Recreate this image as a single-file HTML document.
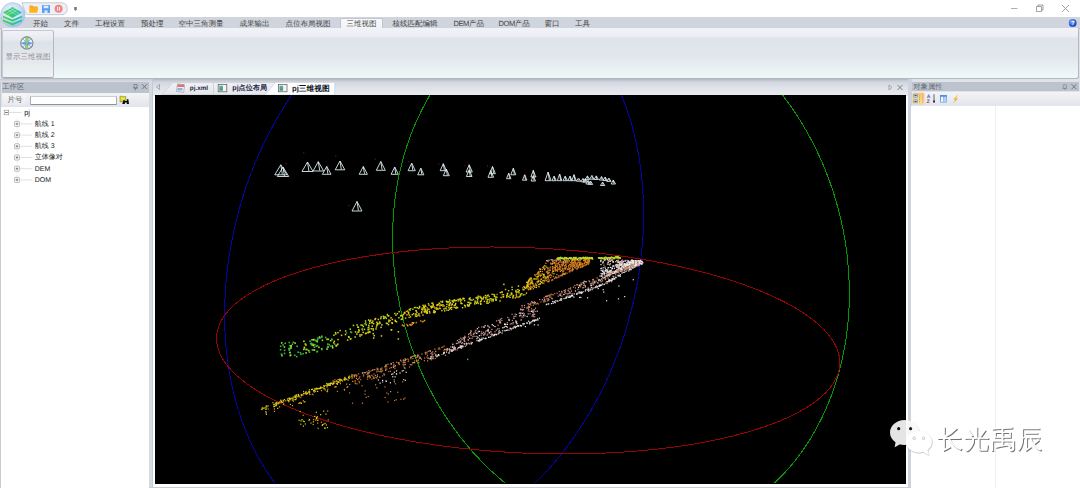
<!DOCTYPE html>
<html><head><meta charset="utf-8">
<style>
*{margin:0;padding:0;box-sizing:border-box}
html,body{text-rendering:geometricPrecision;width:1080px;height:488px;overflow:hidden;background:#dfe2e9;font-family:"Liberation Sans",sans-serif;position:relative}
.a{position:absolute}
.t{position:absolute;font-size:7.5px;line-height:9px;color:#444;white-space:nowrap}
#title{left:0;top:0;width:1080px;height:17px;background:#fff}
#tabs{left:0;top:17px;width:1080px;height:12px;background:#d0d4dd;border-bottom:1px solid #c4c8d0}
#ribbon{left:1px;top:28px;width:1078px;height:51px;border:1px solid #b4b8c0;border-top:none;border-radius:0 0 3px 3px;
 background:linear-gradient(#f2f3f7 0px,#edeff4 8px,#dfe3eb 10.5px,#e2e6ec 28px,#eef8f8 49px)}
#grp{left:2px;top:30px;width:51.5px;height:48px;border:1px solid #c4c8d0;border-bottom-color:#a6aab2;border-right-color:#b4b8c0;border-radius:2px;
 background:linear-gradient(#f1f2f6 0,#e6e9ef 9px,#dde1e9 11px,#e6eaee 32px,#eef5f5 47px)}
#lp{left:0;top:79px;width:149px;height:409px;background:linear-gradient(#c6cad2 0px,#d8dbe2 2.5px,#dfe2e9 4px)}
#lphdr{left:1.5px;top:81.9px;width:147.5px;height:10.7px;background:#bcc3cd}
#lptb{left:1.5px;top:92.6px;width:147.5px;height:14.4px;background:linear-gradient(#f3f4f7,#e1e4eb)}
#lptree{left:1.4px;top:107px;width:147.5px;height:382px;background:#fff}
#dock{left:149px;top:79px;width:4px;height:409px;background:linear-gradient(#c6cad2 0px,#d8dbe2 2.5px,#d5d9e1 5px);border-right:1px solid #c6cad3}
#dock2{left:908px;top:79px;width:4px;height:409px;background:#cdd2dc}
#dockb{left:149px;top:486.75px;width:763px;height:2px;background:#c9cdd7}
#doc{left:153px;top:79px;width:755px;height:407.75px;background:#fff}
#doctabs{left:153px;top:78.5px;width:755px;height:17px;background:linear-gradient(#b4b7be 0px,#c9cdd5 2px,#d3d7e0 3.5px,#dfe2e9 9px,#e9eaef 16px)}
#view{left:155px;top:95.3px;width:751px;height:388.9px;background:#000;overflow:hidden}
#rphdr{left:912px;top:81.6px;width:167.3px;height:9.9px;background:#bcc3cd}
#rptb{left:911.5px;top:91.5px;width:168.5px;height:14.3px;background:linear-gradient(#f3f4f7,#e1e4eb)}
#rpgrid{left:911.3px;top:105.8px;width:168.7px;height:383px;background:#fff}
.ic{position:absolute}
</style></head><body>
<div id="title" class="a"></div>
<!-- logo -->
<svg class="a" style="left:0;top:1px;z-index:5" width="27" height="28" viewBox="0 0 27 28">
 <defs>
  <radialGradient id="lg" cx="45%" cy="40%" r="60%"><stop offset="0" stop-color="#f2f7fd"/><stop offset="0.6" stop-color="#cfe0f5"/><stop offset="1" stop-color="#9fbde8"/></radialGradient>
  <linearGradient id="gg" x1="0" y1="0" x2="1" y2="0"><stop offset="0" stop-color="#4cd24c"/><stop offset="1" stop-color="#1fbfae"/></linearGradient>
 </defs>
 <circle cx="12.8" cy="13.8" r="12.2" fill="url(#lg)" stroke="#a9c3e8" stroke-width="0.6"/>
 <path d="M3 18.4L12.5 22L22 18.4L22 20.2L12.5 24.5L3 20.2Z" fill="url(#gg)"/>
 <path d="M3 14.7L12.5 18.4L22 14.7L22 16.6L12.5 20.7L3 16.6Z" fill="url(#gg)"/>
 <path d="M3 11.5L12.5 5.9L22 11.5L12.5 17Z" fill="url(#gg)"/>
 <path d="M7.7 8.7L17.2 14.3M10.1 7.3L19.6 12.9M14.9 7.3L5.4 12.9M17.3 8.7L7.8 14.3" stroke="#d8f5e4" stroke-width="0.55" fill="none" opacity="0.85"/>
 </svg>
<!-- QAT -->
<svg class="a" style="left:20px;top:2px" width="62" height="14" viewBox="0 0 62 14">
 <path d="M2 0.8H42A6 6 0 0 1 42 12.7H7.5Q6 12.7 5.2 10Z" fill="#edf1f7" stroke="#b9bdc6" stroke-width="0.8"/>
 <path d="M9.5 3.5h3l1 1h4v1.5h-8z" fill="#f5a623"/><path d="M9.3 5.6h9l-1 5.2h-8z" fill="#ffb21e"/>
 <rect x="22" y="3" width="8" height="8" rx="0.6" fill="#5b9ff0"/><rect x="23.6" y="3.6" width="4.8" height="2.6" fill="#dfeafb"/><rect x="24.5" y="8.4" width="3" height="2.6" fill="#dfeafb"/>
 <circle cx="38.6" cy="6.8" r="4" fill="#f08585"/><rect x="37.2" y="4.9" width="0.9" height="3.8" fill="#fff"/><rect x="39.1" y="4.9" width="0.9" height="3.8" fill="#fff"/>
</svg>
<svg class="a" style="left:73px;top:5px" width="6" height="7" viewBox="0 0 6 7"><path d="M1.2 2h2.6v2.6l-1.3 1.3l-1.3-1.3z" fill="#7a7a7a"/></svg>
<!-- window controls -->
<svg class="a" style="left:1005px;top:1px" width="75" height="15" viewBox="0 0 75 15">
 <path d="M6 7.5h6.5" stroke="#9a9a9a" stroke-width="0.8"/>
 <path d="M31.5 5.5h5v5h-5zM33 5.5v-1.5h5v5h-1.5" fill="none" stroke="#8a8a8a" stroke-width="0.8"/>
 <path d="M57 4l7 7M64 4l-7 7" stroke="#8a8a8a" stroke-width="0.8"/>
</svg>
<div id="tabs" class="a"></div>
<div class="t" style="left:33px;top:18.5px">开始</div>
<div class="t" style="left:64px;top:18.5px">文件</div>
<div class="t" style="left:95px;top:18.5px">工程设置</div>
<div class="t" style="left:141px;top:18.5px">预处理</div>
<div class="t" style="left:178.5px;top:18.5px">空中三角测量</div>
<div class="t" style="left:239.5px;top:18.5px">成果输出</div>
<div class="t" style="left:285.5px;top:18.5px">点位布局视图</div>
<div class="a" style="left:339.5px;top:17.5px;width:43px;height:12px;background:linear-gradient(#f7f8fa,#f0f2f5);border:1px solid #c2c6ce;border-bottom:none;border-radius:2px 2px 0 0"></div>
<div class="t" style="left:346.5px;top:18.5px">三维视图</div>
<div class="t" style="left:392.5px;top:18.5px">核线匹配编辑</div>
<div class="t" style="left:453.5px;top:18.5px"><span style="letter-spacing:-0.4px">DEM</span>产品</div>
<div class="t" style="left:498.5px;top:18.5px"><span style="letter-spacing:-0.4px">DOM</span>产品</div>
<div class="t" style="left:544.5px;top:18.5px">窗口</div>
<div class="t" style="left:575px;top:18.5px">工具</div>
<svg class="a" style="left:1067px;top:18px" width="11" height="11" viewBox="0 0 11 11">
 <defs><radialGradient id="hg" cx="40%" cy="35%" r="65%"><stop offset="0" stop-color="#7fb0ff"/><stop offset="1" stop-color="#0f3fc0"/></radialGradient></defs>
 <circle cx="5.7" cy="4.9" r="3.9" fill="url(#hg)"/><text x="5.8" y="7.3" font-size="6" font-weight="bold" fill="#fff" text-anchor="middle" font-family="Liberation Sans">?</text>
</svg>
<div id="ribbon" class="a"></div>
<div id="grp" class="a"></div>
<svg class="a" style="left:19px;top:34.5px" width="16" height="16" viewBox="0 0 16 16">
 <circle cx="7.8" cy="7.9" r="6.1" fill="#f3f4f6" stroke="#838d99" stroke-width="1.2"/>
 <path d="M3.6 3.7L12 12.1M12 3.7L3.6 12.1" stroke="#9aa2ac" stroke-width="0.9"/>
 <path d="M1.3 8.2Q7.8 5 14.3 8.2Q7.8 11.4 1.3 8.2Z" fill="#5aa3f2"/>
 <path d="M6.8 1.8H9.4L8.9 14H6.3Z" fill="#8fd27e" stroke="#6f8a78" stroke-width="0.4"/>
 <path d="M7 9.6L9.3 7.6L9.2 10.3Z" fill="#5aa3f2"/>
</svg>
<div class="t" style="left:5.5px;top:52.3px;color:#929292">显示三维视图</div>

<div id="lp" class="a"></div>
<div id="lphdr" class="a"></div>
<div class="t" style="left:2.3px;top:81.6px;color:#646a73;font-size:7.3px">工作区</div>
<svg class="a" style="left:131px;top:82px" width="18" height="10" viewBox="0 0 18 10">
 <path d="M3 2.5h3v3.5h-3zM2 6h5M4.5 6v2.5" fill="none" stroke="#6a7079" stroke-width="0.7"/>
 <path d="M11 2.2l5 5M16 2.2l-5 5" stroke="#5f656e" stroke-width="0.8"/>
</svg>
<div id="lptb" class="a"></div>
<div class="a" style="left:3px;top:94px;width:23px;height:11px;background:linear-gradient(#f6f6f8,#e9ebef);border-radius:1px"></div>
<div class="t" style="left:7.5px;top:94.6px;color:#6e6a66">片号</div>
<div class="a" style="left:29.5px;top:95.5px;width:87px;height:9.3px;background:#fff;border:1px solid #a9adb5;border-top-color:#c9ccd2;border-bottom-color:#8e929a;border-radius:1px"></div>
<svg class="a" style="left:119px;top:95px" width="12" height="10" viewBox="0 0 12 10">
 <path d="M0.9 1.4L3 1.1L3.8 1.8L6.8 1.5L7.1 6.6L1.2 6.9Z" fill="#dedc2a" stroke="#6e6a22" stroke-width="0.5"/>
 <path d="M2 3.6L5.5 3.2" stroke="#f8f4a0" stroke-width="0.6"/>
 <path d="M4.3 5.2h1.6v3.8h-2.6zM7.9 4.3h1.5l0.6 4.7h-2.3zM5.6 6h2.5v1.4h-2.5z" fill="#0c0c0c"/>
</svg>
<div id="lptree" class="a"></div>
<div class="a" style="left:0;top:81.5px;width:1.4px;height:407px;background:#c6cbd4"></div>
<svg class="a" style="left:0;top:106px" width="40" height="80" viewBox="0 106 40 80">
<rect x="4.2" y="110.2" width="4.5" height="4.6" fill="#fff" stroke="#8a8a8a" stroke-width="0.6"/><path d="M5.1 112.5h2.7" stroke="#333" stroke-width="0.7"/>
<path d="M9 112.4h12.6" stroke="#cfcfcf" stroke-width="0.7"/>
<path d="M17.2 117.5v62" stroke="#d0d0d0" stroke-width="0.6" stroke-dasharray="0.7 0.7"/>
<rect x="14.6" y="121.4" width="4.8" height="5" rx="0.6" fill="#fff" stroke="#8c8c8c" stroke-width="0.6"/><path d="M15.7 123.9h2.6M17 122.6v2.6" stroke="#444" stroke-width="0.6"/><path d="M19.6 123.9h12.6" stroke="#d2d2d2" stroke-width="0.7"/>
<rect x="14.6" y="132.6" width="4.8" height="5" rx="0.6" fill="#fff" stroke="#8c8c8c" stroke-width="0.6"/><path d="M15.7 135.1h2.6M17 133.8v2.6" stroke="#444" stroke-width="0.6"/><path d="M19.6 135.1h12.6" stroke="#d2d2d2" stroke-width="0.7"/>
<rect x="14.6" y="143.8" width="4.8" height="5" rx="0.6" fill="#fff" stroke="#8c8c8c" stroke-width="0.6"/><path d="M15.7 146.3h2.6M17 145.0v2.6" stroke="#444" stroke-width="0.6"/><path d="M19.6 146.3h12.6" stroke="#d2d2d2" stroke-width="0.7"/>
<rect x="14.6" y="155.0" width="4.8" height="5" rx="0.6" fill="#fff" stroke="#8c8c8c" stroke-width="0.6"/><path d="M15.7 157.5h2.6M17 156.2v2.6" stroke="#444" stroke-width="0.6"/><path d="M19.6 157.5h12.6" stroke="#d2d2d2" stroke-width="0.7"/>
<rect x="14.6" y="166.2" width="4.8" height="5" rx="0.6" fill="#fff" stroke="#8c8c8c" stroke-width="0.6"/><path d="M15.7 168.7h2.6M17 167.4v2.6" stroke="#444" stroke-width="0.6"/><path d="M19.6 168.7h12.6" stroke="#d2d2d2" stroke-width="0.7"/>
<rect x="14.6" y="177.4" width="4.8" height="5" rx="0.6" fill="#fff" stroke="#8c8c8c" stroke-width="0.6"/><path d="M15.7 179.9h2.6M17 178.6v2.6" stroke="#444" stroke-width="0.6"/><path d="M19.6 179.9h12.6" stroke="#d2d2d2" stroke-width="0.7"/>
</svg>
<div class="t" style="left:24.2px;top:107.6px;color:#222;font-size:7.4px">pj</div>
<div class="t" style="left:34.8px;top:119.8px;color:#222;font-size:7px">航线 1</div>
<div class="t" style="left:34.8px;top:131.0px;color:#222;font-size:7px">航线 2</div>
<div class="t" style="left:34.8px;top:142.2px;color:#222;font-size:7px">航线 3</div>
<div class="t" style="left:34.8px;top:153.4px;color:#222;font-size:7px">立体像对</div>
<div class="t" style="left:34.8px;top:164.6px;color:#222;font-size:7px">DEM</div>
<div class="t" style="left:34.8px;top:175.8px;color:#222;font-size:7px">DOM</div>

<div id="dock" class="a"></div>
<div id="doc" class="a"></div><div id="dock2" class="a"></div><div id="dockb" class="a"></div>
<div id="doctabs" class="a"></div>
<svg class="a" style="left:153px;top:80px" width="755" height="16" viewBox="153 80 755 16">
 <path d="M159.5 84.5v5l-3-2.5z" fill="none" stroke="#8a9099" stroke-width="0.7"/>
 <path d="M162 94.5L173 82.6H213.5V94.5Z" fill="url(#tg1)" stroke="#c6cad2" stroke-width="0.6"/>
 <path d="M213.5 94.5V82.6H275V94.5Z" fill="url(#tg1)" stroke="#c6cad2" stroke-width="0.6"/>
 <defs><linearGradient id="tg1" x1="0" y1="0" x2="0" y2="1"><stop offset="0" stop-color="#f0f1f5"/><stop offset="1" stop-color="#e3e6eb"/></linearGradient></defs>
 <path d="M264.8 95L275.5 82.4H334.7V95Z" fill="#fff" stroke="#c8ccd4" stroke-width="0.6"/>
 <!-- icons -->
 <rect x="177" y="84.2" width="7.2" height="7.6" fill="#f4f4f8" stroke="#888" stroke-width="0.5" transform="rotate(8 180 88)"/>
 <path d="M177.5 84.5h6.5v2.5h-6.5z" fill="#e05050" opacity="0.8"/><path d="M177.5 88h5v2.5h-5z" fill="#6aa0e0" opacity="0.8"/>
 <rect x="218.2" y="84.6" width="8.6" height="7.2" fill="#f4f4f4" stroke="#555" stroke-width="0.7"/><rect x="219.3" y="85.7" width="3.6" height="5" fill="url(#ig)"/><defs><linearGradient id="ig" x1="0" y1="0" x2="0" y2="1"><stop offset="0" stop-color="#5fa8c8"/><stop offset="1" stop-color="#3f9a58"/></linearGradient></defs>
 <rect x="278.4" y="84.6" width="8.6" height="7.2" fill="#f4f4f4" stroke="#555" stroke-width="0.7"/><rect x="279.5" y="85.7" width="3.6" height="5" fill="url(#ig)"/>
 <path d="M889 85v5l3-2.5z" fill="none" stroke="#8a9099" stroke-width="0.7"/>
 <path d="M897.5 85l5 5M902.5 85l-5 5" stroke="#5f656e" stroke-width="0.8"/>
</svg>
<div class="t" style="left:189.8px;top:83.8px;color:#1e2646;font-size:6.3px;font-weight:bold">pj.xml</div>
<div class="t" style="left:232.3px;top:83.6px;color:#1e2646;font-size:7.1px;font-weight:bold">pj点位布局</div>
<div class="t" style="left:292px;top:83.6px;color:#101828;font-size:7.7px;font-weight:bold">pj三维视图</div>
<div id="view" class="a"><svg class="a" style="left:0;top:0" width="751" height="388" viewBox="155 96 751 388">
<g fill="none" stroke-width="1" shape-rendering="crispEdges">
<ellipse cx="434.1" cy="265.3" rx="287.1" ry="202.5" transform="rotate(-74.7 434.1 265.3)" stroke="#0404a4"/>
<ellipse cx="621.0" cy="266.5" rx="273.5" ry="224.5" transform="rotate(-105.6 621.0 266.5)" stroke="#039a03"/>
<ellipse cx="528.2" cy="351.5" rx="311.9" ry="102.7" transform="rotate(2.5 528.2 351.5)" stroke="#980404"/>
</g>
<g fill="none" stroke="#dcecee" stroke-width="0.9">
<path d="M274.8 175.8L280.8 165.8L286.8 175.8ZM280.8 165.8L282.3 175.3"/>
<path d="M277.3 177.5L283.0 168.0L288.7 177.5ZM283.0 168.0L284.4 177.0"/>
<path d="M302.0 172.5L307.5 163.0L313.0 172.5ZM307.5 163.0L308.9 172.0"/>
<path d="M313.0 172.0L318.3 162.7L323.6 172.0ZM318.3 162.7L319.7 171.5"/>
<path d="M322.4 175.3L326.7 167.5L331.0 175.3ZM326.7 167.5L327.9 174.8"/>
<path d="M335.2 170.8L340.0 162.0L344.8 170.8ZM340.0 162.0L341.3 170.3"/>
<path d="M359.2 175.3L363.3 167.5L367.4 175.3ZM363.3 167.5L364.5 174.8"/>
<path d="M376.3 171.3L380.8 162.5L385.3 171.3ZM380.8 162.5L382.1 170.8"/>
<path d="M391.1 175.3L394.7 168.0L398.3 175.3ZM394.7 168.0L395.8 174.8"/>
<path d="M408.1 171.7L411.7 164.2L415.3 171.7ZM411.7 164.2L412.8 171.2"/>
<path d="M417.7 175.8L420.8 169.2L423.9 175.8ZM420.8 169.2L421.8 175.3"/>
<path d="M440.2 171.7L443.3 164.7L446.4 171.7ZM443.3 164.7L444.4 171.2"/>
<path d="M443.3 176.7L446.3 170.0L449.3 176.7ZM446.3 170.0L447.3 176.2"/>
<path d="M466.1 173.0L469.2 165.8L472.3 173.0ZM469.2 165.8L470.3 172.5"/>
<path d="M466.4 177.5L469.2 170.8L472.0 177.5ZM469.2 170.8L470.2 177.0"/>
<path d="M489.6 174.7L492.5 167.5L495.4 174.7ZM492.5 167.5L493.6 174.2"/>
<path d="M488.0 178.3L490.8 171.5L493.6 178.3ZM490.8 171.5L491.8 177.8"/>
<path d="M510.8 175.8L513.3 169.2L515.8 175.8ZM513.3 169.2L514.3 175.3"/>
<path d="M506.5 179.7L508.7 174.2L510.9 179.7ZM508.7 174.2L509.5 179.2"/>
<path d="M522.5 181.2L524.7 175.8L526.9 181.2ZM524.7 175.8L525.5 180.7"/>
<path d="M530.9 178.0L533.3 171.3L535.7 178.0ZM533.3 171.3L534.3 177.5"/>
<path d="M531.1 182.0L533.3 176.7L535.5 182.0ZM533.3 176.7L534.1 181.5"/>
<path d="M545.1 181.7L548.1 173.1L551.1 181.7ZM548.1 173.1L549.4 181.2"/>
<path d="M352.0 212.0L357.0 202.5L362.0 212.0ZM357.0 202.5L358.4 211.5"/>
<path d="M551.9 181.7L554.1 177.2L556.3 181.7ZM554.1 177.2L554.8 181.2"/>
<path d="M557.3 181.7L559.6 175.0L561.9 181.7ZM559.6 175.0L560.6 181.2"/>
<path d="M563.0 181.7L565.2 177.2L567.4 181.7ZM565.2 177.2L565.9 181.2"/>
<path d="M567.8 181.7L570.0 177.2L572.2 181.7ZM570.0 177.2L570.7 181.2"/>
<path d="M571.8 181.7L574.0 175.7L576.2 181.7ZM574.0 175.7L574.9 181.2"/>
<path d="M576.3 182.2L578.5 179.0L580.7 182.2ZM578.5 179.0L579.0 181.7"/>
<path d="M580.8 182.8L583.0 179.5L585.2 182.8ZM583.0 179.5L583.5 182.3"/>
<path d="M585.2 180.4L587.4 176.9L589.6 180.4ZM587.4 176.9L587.9 179.9"/>
<path d="M589.7 180.2L591.9 176.5L594.1 180.2ZM591.9 176.5L592.5 179.7"/>
<path d="M594.1 180.5L596.3 176.9L598.5 180.5ZM596.3 176.9L596.8 180.0"/>
<path d="M599.3 181.0L601.5 177.6L603.7 181.0ZM601.5 177.6L602.0 180.5"/>
<path d="M603.0 181.5L605.2 178.0L607.4 181.5ZM605.2 178.0L605.7 181.0"/>
<path d="M606.7 182.4L608.9 179.2L611.1 182.4ZM608.9 179.2L609.4 181.9"/>
<path d="M611.1 185.0L613.3 181.0L615.5 185.0ZM613.3 181.0L613.9 184.5"/>
<path d="M600.4 186.5L602.6 183.1L604.8 186.5ZM602.6 183.1L603.1 186.0"/>
<path d="M583.0 183.1L585.2 179.8L587.4 183.1ZM585.2 179.8L585.7 182.6"/>
<path d="M585.9 185.0L588.1 181.5L590.3 185.0ZM588.1 181.5L588.6 184.5"/>
<path d="M588.3 185.4L590.5 182.0L592.7 185.4ZM590.5 182.0L591.0 184.9"/>
</g>
<g fill="#b01010">
<rect x="303.3" y="153.3" width="1" height="1"/>
<rect x="285.8" y="164.0" width="1" height="1"/>
<rect x="335.3" y="156.3" width="1" height="1"/>
<rect x="327.5" y="166.5" width="1" height="1"/>
<rect x="374.7" y="159.7" width="1" height="1"/>
<rect x="408.3" y="162.3" width="1" height="1"/>
<rect x="438.3" y="164.5" width="1" height="1"/>
<rect x="348.3" y="206.0" width="1" height="1"/>
<rect x="464.5" y="165.8" width="1" height="1"/>
<rect x="487.0" y="166.5" width="1" height="1"/>
<rect x="522.7" y="176.5" width="1" height="1"/>
<rect x="536.0" y="177.0" width="1" height="1"/>
<rect x="558.5" y="178.7" width="1" height="1"/>
<rect x="578.1" y="179.4" width="1" height="1"/>
<rect x="592.6" y="176.5" width="1" height="1"/>
</g>
<rect x="303.0" y="349.6" width="1.6" height="1.6" fill="#b4dc22"/>
<rect x="303.7" y="348.6" width="1.6" height="1.6" fill="#34b844"/>
<rect x="288.8" y="349.6" width="1.6" height="1.6" fill="#34b844"/>
<rect x="321.0" y="337.5" width="1.6" height="1.6" fill="#34b844"/>
<rect x="283.8" y="353.6" width="1.6" height="1.6" fill="#34b844"/>
<rect x="281.2" y="355.8" width="1.6" height="1.6" fill="#b4dc22"/>
<rect x="313.7" y="347.4" width="1.6" height="1.6" fill="#34b844"/>
<rect x="279.8" y="349.9" width="1.6" height="1.6" fill="#34b844"/>
<rect x="289.1" y="345.9" width="1.6" height="1.6" fill="#34b844"/>
<rect x="303.6" y="347.6" width="1.6" height="1.6" fill="#b4dc22"/>
<rect x="306.5" y="349.8" width="1.6" height="1.6" fill="#34b844"/>
<rect x="314.1" y="344.9" width="1.6" height="1.6" fill="#34b844"/>
<rect x="331.9" y="348.0" width="1.6" height="1.6" fill="#b4dc22"/>
<rect x="316.5" y="342.1" width="1.6" height="1.6" fill="#34b844"/>
<rect x="294.3" y="343.3" width="1.6" height="1.6" fill="#b4dc22"/>
<rect x="300.2" y="354.6" width="1.6" height="1.6" fill="#34b844"/>
<rect x="329.8" y="346.3" width="1.6" height="1.6" fill="#34b844"/>
<rect x="290.1" y="355.2" width="1.6" height="1.6" fill="#34b844"/>
<rect x="331.0" y="339.3" width="1.6" height="1.6" fill="#34b844"/>
<rect x="312.4" y="350.2" width="1.6" height="1.6" fill="#34b844"/>
<rect x="283.6" y="347.2" width="1.6" height="1.6" fill="#b4dc22"/>
<rect x="319.2" y="338.4" width="1.6" height="1.6" fill="#34b844"/>
<rect x="284.4" y="343.5" width="1.6" height="1.6" fill="#34b844"/>
<rect x="288.4" y="350.3" width="1.6" height="1.6" fill="#34b844"/>
<rect x="289.1" y="352.7" width="1.6" height="1.6" fill="#34b844"/>
<rect x="313.1" y="340.1" width="1.6" height="1.6" fill="#34b844"/>
<rect x="290.3" y="346.2" width="1.6" height="1.6" fill="#e4d014"/>
<rect x="321.6" y="340.5" width="1.6" height="1.6" fill="#b4dc22"/>
<rect x="290.2" y="348.0" width="1.6" height="1.6" fill="#b4dc22"/>
<rect x="313.0" y="339.8" width="1.6" height="1.6" fill="#e4d014"/>
<rect x="290.3" y="346.1" width="1.6" height="1.6" fill="#b4dc22"/>
<rect x="296.4" y="346.5" width="1.6" height="1.6" fill="#34b844"/>
<rect x="283.8" y="350.5" width="1.6" height="1.6" fill="#34b844"/>
<rect x="310.9" y="344.5" width="1.6" height="1.6" fill="#34b844"/>
<rect x="329.8" y="340.9" width="1.6" height="1.6" fill="#b4dc22"/>
<rect x="324.9" y="337.7" width="1.6" height="1.6" fill="#34b844"/>
<rect x="327.1" y="346.6" width="1.6" height="1.6" fill="#34b844"/>
<rect x="289.1" y="352.8" width="1.6" height="1.6" fill="#b4dc22"/>
<rect x="289.4" y="355.7" width="1.6" height="1.6" fill="#b4dc22"/>
<rect x="311.0" y="345.2" width="1.6" height="1.6" fill="#34b844"/>
<rect x="281.1" y="355.5" width="1.6" height="1.6" fill="#34b844"/>
<rect x="316.3" y="341.3" width="1.6" height="1.6" fill="#b4dc22"/>
<rect x="310.6" y="343.4" width="1.6" height="1.6" fill="#34b844"/>
<rect x="317.2" y="338.2" width="1.6" height="1.6" fill="#34b844"/>
<rect x="308.6" y="352.4" width="1.6" height="1.6" fill="#34b844"/>
<rect x="293.9" y="355.5" width="1.6" height="1.6" fill="#34b844"/>
<rect x="279.9" y="346.5" width="1.6" height="1.6" fill="#34b844"/>
<rect x="282.2" y="345.2" width="1.6" height="1.6" fill="#34b844"/>
<rect x="309.3" y="341.4" width="1.6" height="1.6" fill="#34b844"/>
<rect x="326.2" y="349.3" width="1.6" height="1.6" fill="#b4dc22"/>
<rect x="315.6" y="346.4" width="1.6" height="1.6" fill="#34b844"/>
<rect x="280.9" y="343.1" width="1.6" height="1.6" fill="#b4dc22"/>
<rect x="316.2" y="351.9" width="1.6" height="1.6" fill="#34b844"/>
<rect x="312.7" y="345.7" width="1.6" height="1.6" fill="#b4dc22"/>
<rect x="295.9" y="356.8" width="1.6" height="1.6" fill="#34b844"/>
<rect x="307.9" y="350.8" width="1.6" height="1.6" fill="#b4dc22"/>
<rect x="318.1" y="347.5" width="1.6" height="1.6" fill="#b4dc22"/>
<rect x="327.5" y="339.5" width="1.6" height="1.6" fill="#b4dc22"/>
<rect x="326.7" y="347.5" width="1.6" height="1.6" fill="#34b844"/>
<rect x="320.9" y="349.1" width="1.6" height="1.6" fill="#b4dc22"/>
<rect x="312.1" y="344.3" width="1.6" height="1.6" fill="#34b844"/>
<rect x="311.3" y="340.0" width="1.6" height="1.6" fill="#b4dc22"/>
<rect x="331.6" y="346.3" width="1.6" height="1.6" fill="#b4dc22"/>
<rect x="299.6" y="353.0" width="1.6" height="1.6" fill="#34b844"/>
<rect x="302.3" y="353.9" width="1.6" height="1.6" fill="#34b844"/>
<rect x="318.8" y="337.2" width="1.6" height="1.6" fill="#b4dc22"/>
<rect x="304.5" y="344.2" width="1.6" height="1.6" fill="#b4dc22"/>
<rect x="305.4" y="349.7" width="1.6" height="1.6" fill="#b4dc22"/>
<rect x="292.6" y="342.5" width="1.6" height="1.6" fill="#34b844"/>
<rect x="314.9" y="340.8" width="1.6" height="1.6" fill="#34b844"/>
<rect x="327.0" y="344.3" width="1.6" height="1.6" fill="#34b844"/>
<rect x="326.3" y="339.5" width="1.6" height="1.6" fill="#b4dc22"/>
<rect x="289.5" y="348.5" width="1.6" height="1.6" fill="#b4dc22"/>
<rect x="327.5" y="347.5" width="1.6" height="1.6" fill="#34b844"/>
<rect x="309.9" y="344.0" width="1.6" height="1.6" fill="#34b844"/>
<rect x="305.3" y="353.1" width="1.6" height="1.6" fill="#b4dc22"/>
<rect x="316.7" y="351.6" width="1.6" height="1.6" fill="#34b844"/>
<rect x="288.0" y="348.8" width="1.6" height="1.6" fill="#34b844"/>
<rect x="290.3" y="348.3" width="1.6" height="1.6" fill="#34b844"/>
<rect x="305.2" y="345.3" width="1.6" height="1.6" fill="#b4dc22"/>
<rect x="331.0" y="340.1" width="1.6" height="1.6" fill="#34b844"/>
<rect x="280.7" y="354.3" width="1.6" height="1.6" fill="#34b844"/>
<rect x="316.6" y="345.9" width="1.6" height="1.6" fill="#34b844"/>
<rect x="321.0" y="336.4" width="1.6" height="1.6" fill="#34b844"/>
<rect x="303.1" y="341.5" width="1.6" height="1.6" fill="#b4dc22"/>
<rect x="291.6" y="344.4" width="1.6" height="1.6" fill="#34b844"/>
<rect x="312.3" y="345.2" width="1.6" height="1.6" fill="#b4dc22"/>
<rect x="313.7" y="350.3" width="1.6" height="1.6" fill="#e4d014"/>
<rect x="315.3" y="340.7" width="1.6" height="1.6" fill="#34b844"/>
<rect x="288.5" y="342.7" width="1.6" height="1.6" fill="#34b844"/>
<rect x="316.9" y="339.9" width="1.6" height="1.6" fill="#34b844"/>
<rect x="297.3" y="352.4" width="1.6" height="1.6" fill="#34b844"/>
<rect x="311.6" y="350.1" width="1.6" height="1.6" fill="#34b844"/>
<rect x="321.0" y="349.7" width="1.6" height="1.6" fill="#34b844"/>
<rect x="328.4" y="344.8" width="1.6" height="1.6" fill="#34b844"/>
<rect x="363.7" y="329.6" width="1.5" height="1.5" fill="#e4d014"/>
<rect x="358.4" y="331.0" width="1.5" height="1.5" fill="#e4d014"/>
<rect x="387.8" y="324.8" width="1.5" height="1.5" fill="#e4d014"/>
<rect x="377.6" y="319.7" width="1.5" height="1.5" fill="#e4d014"/>
<rect x="389.3" y="320.9" width="1.5" height="1.5" fill="#e4d014"/>
<rect x="346.9" y="340.3" width="1.5" height="1.5" fill="#e4d014"/>
<rect x="400.4" y="315.9" width="1.5" height="1.5" fill="#e4d014"/>
<rect x="354.4" y="337.3" width="1.5" height="1.5" fill="#e4d014"/>
<rect x="356.4" y="325.2" width="1.5" height="1.5" fill="#b4dc22"/>
<rect x="370.5" y="329.0" width="1.5" height="1.5" fill="#b4dc22"/>
<rect x="334.0" y="344.3" width="1.5" height="1.5" fill="#34b844"/>
<rect x="388.0" y="316.1" width="1.5" height="1.5" fill="#b4dc22"/>
<rect x="387.2" y="316.0" width="1.5" height="1.5" fill="#b4dc22"/>
<rect x="368.2" y="329.3" width="1.5" height="1.5" fill="#e4d014"/>
<rect x="380.3" y="327.6" width="1.5" height="1.5" fill="#e4d014"/>
<rect x="398.4" y="311.9" width="1.5" height="1.5" fill="#b4dc22"/>
<rect x="368.9" y="323.5" width="1.5" height="1.5" fill="#e4d014"/>
<rect x="376.7" y="323.8" width="1.5" height="1.5" fill="#e4d014"/>
<rect x="371.2" y="323.1" width="1.5" height="1.5" fill="#b4dc22"/>
<rect x="391.2" y="323.0" width="1.5" height="1.5" fill="#b4dc22"/>
<rect x="391.6" y="323.6" width="1.5" height="1.5" fill="#e4d014"/>
<rect x="372.1" y="321.4" width="1.5" height="1.5" fill="#e4d014"/>
<rect x="367.2" y="328.1" width="1.5" height="1.5" fill="#34b844"/>
<rect x="399.9" y="315.9" width="1.5" height="1.5" fill="#b4dc22"/>
<rect x="388.1" y="320.4" width="1.5" height="1.5" fill="#e4d014"/>
<rect x="380.4" y="317.2" width="1.5" height="1.5" fill="#e4d014"/>
<rect x="361.0" y="335.1" width="1.5" height="1.5" fill="#e4d014"/>
<rect x="350.8" y="332.7" width="1.5" height="1.5" fill="#34b844"/>
<rect x="362.4" y="332.7" width="1.5" height="1.5" fill="#e4d014"/>
<rect x="365.4" y="325.0" width="1.5" height="1.5" fill="#b4dc22"/>
<rect x="375.3" y="329.2" width="1.5" height="1.5" fill="#b4dc22"/>
<rect x="386.6" y="314.8" width="1.5" height="1.5" fill="#b4dc22"/>
<rect x="347.9" y="336.9" width="1.5" height="1.5" fill="#b4dc22"/>
<rect x="356.9" y="332.3" width="1.5" height="1.5" fill="#34b844"/>
<rect x="383.2" y="317.0" width="1.5" height="1.5" fill="#e4d014"/>
<rect x="349.5" y="329.4" width="1.5" height="1.5" fill="#b4dc22"/>
<rect x="362.6" y="326.8" width="1.5" height="1.5" fill="#b4dc22"/>
<rect x="369.1" y="321.8" width="1.5" height="1.5" fill="#b4dc22"/>
<rect x="376.2" y="325.4" width="1.5" height="1.5" fill="#e4d014"/>
<rect x="391.6" y="319.7" width="1.5" height="1.5" fill="#e4d014"/>
<rect x="348.3" y="337.5" width="1.5" height="1.5" fill="#e4d014"/>
<rect x="395.2" y="315.4" width="1.5" height="1.5" fill="#b4dc22"/>
<rect x="396.6" y="313.9" width="1.5" height="1.5" fill="#e4d014"/>
<rect x="394.1" y="313.8" width="1.5" height="1.5" fill="#b4dc22"/>
<rect x="382.9" y="318.7" width="1.5" height="1.5" fill="#b4dc22"/>
<rect x="390.3" y="318.1" width="1.5" height="1.5" fill="#e4d014"/>
<rect x="340.8" y="335.6" width="1.5" height="1.5" fill="#e4d014"/>
<rect x="333.2" y="335.5" width="1.5" height="1.5" fill="#b4dc22"/>
<rect x="395.8" y="322.0" width="1.5" height="1.5" fill="#b4dc22"/>
<rect x="367.4" y="330.0" width="1.5" height="1.5" fill="#b4dc22"/>
<rect x="380.0" y="318.8" width="1.5" height="1.5" fill="#b4dc22"/>
<rect x="339.4" y="330.8" width="1.5" height="1.5" fill="#b4dc22"/>
<rect x="368.0" y="327.4" width="1.5" height="1.5" fill="#b4dc22"/>
<rect x="344.9" y="331.2" width="1.5" height="1.5" fill="#e4d014"/>
<rect x="401.3" y="319.5" width="1.5" height="1.5" fill="#b4dc22"/>
<rect x="336.3" y="345.4" width="1.5" height="1.5" fill="#b4dc22"/>
<rect x="385.5" y="318.6" width="1.5" height="1.5" fill="#e4d014"/>
<rect x="368.1" y="325.6" width="1.5" height="1.5" fill="#e4d014"/>
<rect x="332.9" y="343.1" width="1.5" height="1.5" fill="#e4d014"/>
<rect x="344.7" y="334.8" width="1.5" height="1.5" fill="#e4d014"/>
<rect x="360.4" y="325.3" width="1.5" height="1.5" fill="#b4dc22"/>
<rect x="367.9" y="320.3" width="1.5" height="1.5" fill="#e4d014"/>
<rect x="388.1" y="322.0" width="1.5" height="1.5" fill="#e4d014"/>
<rect x="376.1" y="322.6" width="1.5" height="1.5" fill="#e4d014"/>
<rect x="367.3" y="332.9" width="1.5" height="1.5" fill="#e4d014"/>
<rect x="350.1" y="339.1" width="1.5" height="1.5" fill="#e4d014"/>
<rect x="386.5" y="323.8" width="1.5" height="1.5" fill="#b4dc22"/>
<rect x="394.8" y="321.5" width="1.5" height="1.5" fill="#e4d014"/>
<rect x="385.7" y="323.5" width="1.5" height="1.5" fill="#b4dc22"/>
<rect x="382.6" y="316.6" width="1.5" height="1.5" fill="#b4dc22"/>
<rect x="364.8" y="321.2" width="1.5" height="1.5" fill="#b4dc22"/>
<rect x="376.7" y="325.0" width="1.5" height="1.5" fill="#b4dc22"/>
<rect x="398.1" y="318.0" width="1.5" height="1.5" fill="#b4dc22"/>
<rect x="378.2" y="323.9" width="1.5" height="1.5" fill="#e4d014"/>
<rect x="359.3" y="336.4" width="1.5" height="1.5" fill="#e4d014"/>
<rect x="381.1" y="325.1" width="1.5" height="1.5" fill="#e4d014"/>
<rect x="333.6" y="341.6" width="1.5" height="1.5" fill="#e4d014"/>
<rect x="350.0" y="332.1" width="1.5" height="1.5" fill="#34b844"/>
<rect x="345.7" y="333.3" width="1.5" height="1.5" fill="#34b844"/>
<rect x="349.6" y="339.2" width="1.5" height="1.5" fill="#b4dc22"/>
<rect x="367.5" y="332.6" width="1.5" height="1.5" fill="#e4d014"/>
<rect x="401.7" y="316.5" width="1.5" height="1.5" fill="#e4d014"/>
<rect x="337.3" y="339.8" width="1.5" height="1.5" fill="#e4d014"/>
<rect x="335.2" y="345.6" width="1.5" height="1.5" fill="#34b844"/>
<rect x="365.0" y="323.2" width="1.5" height="1.5" fill="#b4dc22"/>
<rect x="374.8" y="318.8" width="1.5" height="1.5" fill="#e4d014"/>
<rect x="361.4" y="329.3" width="1.5" height="1.5" fill="#e4d014"/>
<rect x="357.6" y="327.5" width="1.5" height="1.5" fill="#e4d014"/>
<rect x="371.2" y="322.7" width="1.5" height="1.5" fill="#e4d014"/>
<rect x="352.7" y="325.7" width="1.5" height="1.5" fill="#b4dc22"/>
<rect x="335.0" y="334.2" width="1.5" height="1.5" fill="#e4d014"/>
<rect x="359.3" y="335.1" width="1.5" height="1.5" fill="#e4d014"/>
<rect x="335.5" y="346.3" width="1.5" height="1.5" fill="#e4d014"/>
<rect x="337.1" y="344.4" width="1.5" height="1.5" fill="#b4dc22"/>
<rect x="365.4" y="333.5" width="1.5" height="1.5" fill="#b4dc22"/>
<rect x="368.6" y="331.8" width="1.5" height="1.5" fill="#e4d014"/>
<rect x="364.8" y="333.8" width="1.5" height="1.5" fill="#e4d014"/>
<rect x="374.3" y="319.7" width="1.5" height="1.5" fill="#e4d014"/>
<rect x="363.9" y="324.1" width="1.5" height="1.5" fill="#34b844"/>
<rect x="369.0" y="321.4" width="1.5" height="1.5" fill="#b4dc22"/>
<rect x="378.8" y="322.3" width="1.5" height="1.5" fill="#b4dc22"/>
<rect x="372.8" y="323.9" width="1.5" height="1.5" fill="#e4d014"/>
<rect x="369.2" y="332.4" width="1.5" height="1.5" fill="#e4d014"/>
<rect x="383.4" y="318.3" width="1.5" height="1.5" fill="#b4dc22"/>
<rect x="394.5" y="320.6" width="1.5" height="1.5" fill="#e4d014"/>
<rect x="357.1" y="327.5" width="1.5" height="1.5" fill="#e4d014"/>
<rect x="371.5" y="326.4" width="1.5" height="1.5" fill="#e4d014"/>
<rect x="384.7" y="317.3" width="1.5" height="1.5" fill="#b4dc22"/>
<rect x="400.6" y="319.7" width="1.5" height="1.5" fill="#e4d014"/>
<rect x="334.8" y="332.9" width="1.5" height="1.5" fill="#b4dc22"/>
<rect x="361.8" y="330.4" width="1.5" height="1.5" fill="#34b844"/>
<rect x="369.9" y="320.5" width="1.5" height="1.5" fill="#b4dc22"/>
<rect x="379.3" y="323.3" width="1.5" height="1.5" fill="#e4d014"/>
<rect x="358.1" y="329.9" width="1.5" height="1.5" fill="#b4dc22"/>
<rect x="356.1" y="334.3" width="1.5" height="1.5" fill="#e4d014"/>
<rect x="337.2" y="332.9" width="1.5" height="1.5" fill="#e4d014"/>
<rect x="375.7" y="327.2" width="1.5" height="1.5" fill="#b4dc22"/>
<rect x="361.7" y="325.6" width="1.5" height="1.5" fill="#e4d014"/>
<rect x="357.8" y="332.4" width="1.5" height="1.5" fill="#e4d014"/>
<rect x="354.8" y="332.2" width="1.5" height="1.5" fill="#e4d014"/>
<rect x="397.6" y="332.0" width="1.5" height="1.5" fill="#e4d014"/>
<rect x="372.9" y="338.3" width="1.5" height="1.5" fill="#e4d014"/>
<rect x="372.5" y="333.9" width="1.5" height="1.5" fill="#e4d014"/>
<rect x="390.6" y="330.2" width="1.5" height="1.5" fill="#b4dc22"/>
<rect x="372.3" y="329.0" width="1.5" height="1.5" fill="#e4d014"/>
<rect x="372.5" y="330.3" width="1.5" height="1.5" fill="#e4d014"/>
<rect x="390.8" y="330.0" width="1.5" height="1.5" fill="#e4d014"/>
<rect x="380.7" y="336.2" width="1.5" height="1.5" fill="#e4d014"/>
<rect x="373.5" y="335.9" width="1.5" height="1.5" fill="#e4d014"/>
<rect x="397.6" y="339.2" width="1.5" height="1.5" fill="#b4dc22"/>
<rect x="443.2" y="309.3" width="1.4" height="1.4" fill="#e4d014"/>
<rect x="431.9" y="307.2" width="1.4" height="1.4" fill="#e0a81c"/>
<rect x="486.1" y="297.4" width="1.4" height="1.4" fill="#e4d014"/>
<rect x="436.4" y="305.8" width="1.4" height="1.4" fill="#e4d014"/>
<rect x="438.4" y="303.5" width="1.4" height="1.4" fill="#e4d014"/>
<rect x="476.9" y="301.3" width="1.4" height="1.4" fill="#b4dc22"/>
<rect x="454.9" y="300.9" width="1.4" height="1.4" fill="#b4dc22"/>
<rect x="484.8" y="297.8" width="1.4" height="1.4" fill="#e4d014"/>
<rect x="450.5" y="305.4" width="1.4" height="1.4" fill="#e4d014"/>
<rect x="492.8" y="299.7" width="1.4" height="1.4" fill="#b4dc22"/>
<rect x="408.0" y="314.1" width="1.4" height="1.4" fill="#b4dc22"/>
<rect x="409.9" y="309.0" width="1.4" height="1.4" fill="#b4dc22"/>
<rect x="486.5" y="295.9" width="1.4" height="1.4" fill="#b4dc22"/>
<rect x="415.5" y="314.5" width="1.4" height="1.4" fill="#b4dc22"/>
<rect x="425.1" y="306.9" width="1.4" height="1.4" fill="#b4dc22"/>
<rect x="451.0" y="307.6" width="1.4" height="1.4" fill="#e4d014"/>
<rect x="433.8" y="313.0" width="1.4" height="1.4" fill="#b4dc22"/>
<rect x="448.4" y="305.6" width="1.4" height="1.4" fill="#b4dc22"/>
<rect x="468.6" y="306.1" width="1.4" height="1.4" fill="#e4d014"/>
<rect x="479.7" y="302.0" width="1.4" height="1.4" fill="#b4dc22"/>
<rect x="477.8" y="303.8" width="1.4" height="1.4" fill="#e0a81c"/>
<rect x="492.0" y="299.8" width="1.4" height="1.4" fill="#e4d014"/>
<rect x="468.7" y="305.0" width="1.4" height="1.4" fill="#e4d014"/>
<rect x="441.5" y="302.4" width="1.4" height="1.4" fill="#b4dc22"/>
<rect x="495.2" y="297.1" width="1.4" height="1.4" fill="#e4d014"/>
<rect x="421.2" y="309.9" width="1.4" height="1.4" fill="#e4d014"/>
<rect x="493.2" y="294.8" width="1.4" height="1.4" fill="#e4d014"/>
<rect x="412.8" y="314.1" width="1.4" height="1.4" fill="#b4dc22"/>
<rect x="418.9" y="306.7" width="1.4" height="1.4" fill="#e4d014"/>
<rect x="456.9" y="308.1" width="1.4" height="1.4" fill="#e4d014"/>
<rect x="412.2" y="309.5" width="1.4" height="1.4" fill="#e4d014"/>
<rect x="424.1" y="312.3" width="1.4" height="1.4" fill="#b4dc22"/>
<rect x="423.1" y="307.0" width="1.4" height="1.4" fill="#e4d014"/>
<rect x="418.2" y="314.1" width="1.4" height="1.4" fill="#e4d014"/>
<rect x="453.5" y="307.7" width="1.4" height="1.4" fill="#e4d014"/>
<rect x="426.5" y="313.6" width="1.4" height="1.4" fill="#e0a81c"/>
<rect x="434.2" y="308.3" width="1.4" height="1.4" fill="#e0a81c"/>
<rect x="447.4" y="302.4" width="1.4" height="1.4" fill="#e4d014"/>
<rect x="491.1" y="301.2" width="1.4" height="1.4" fill="#e4d014"/>
<rect x="451.6" y="304.9" width="1.4" height="1.4" fill="#e4d014"/>
<rect x="495.1" y="299.4" width="1.4" height="1.4" fill="#e4d014"/>
<rect x="403.0" y="314.5" width="1.4" height="1.4" fill="#e4d014"/>
<rect x="476.9" y="302.8" width="1.4" height="1.4" fill="#b4dc22"/>
<rect x="416.8" y="308.1" width="1.4" height="1.4" fill="#e4d014"/>
<rect x="426.4" y="313.5" width="1.4" height="1.4" fill="#e4d014"/>
<rect x="461.9" y="308.0" width="1.4" height="1.4" fill="#e4d014"/>
<rect x="452.3" y="301.0" width="1.4" height="1.4" fill="#b4dc22"/>
<rect x="402.1" y="318.2" width="1.4" height="1.4" fill="#b4dc22"/>
<rect x="479.3" y="296.8" width="1.4" height="1.4" fill="#e4d014"/>
<rect x="469.4" y="298.2" width="1.4" height="1.4" fill="#e4d014"/>
<rect x="446.1" y="310.4" width="1.4" height="1.4" fill="#b4dc22"/>
<rect x="482.6" y="298.3" width="1.4" height="1.4" fill="#b4dc22"/>
<rect x="441.2" y="310.9" width="1.4" height="1.4" fill="#e4d014"/>
<rect x="479.7" y="297.9" width="1.4" height="1.4" fill="#e4d014"/>
<rect x="451.4" y="301.2" width="1.4" height="1.4" fill="#b4dc22"/>
<rect x="431.3" y="306.4" width="1.4" height="1.4" fill="#e4d014"/>
<rect x="430.7" y="308.2" width="1.4" height="1.4" fill="#b4dc22"/>
<rect x="435.8" y="309.5" width="1.4" height="1.4" fill="#e4d014"/>
<rect x="439.1" y="306.3" width="1.4" height="1.4" fill="#e0a81c"/>
<rect x="480.0" y="301.8" width="1.4" height="1.4" fill="#e4d014"/>
<rect x="437.4" y="309.4" width="1.4" height="1.4" fill="#e4d014"/>
<rect x="455.0" y="303.8" width="1.4" height="1.4" fill="#e4d014"/>
<rect x="495.2" y="300.5" width="1.4" height="1.4" fill="#e4d014"/>
<rect x="459.9" y="301.4" width="1.4" height="1.4" fill="#e4d014"/>
<rect x="452.7" y="302.5" width="1.4" height="1.4" fill="#e4d014"/>
<rect x="438.9" y="308.6" width="1.4" height="1.4" fill="#e4d014"/>
<rect x="420.8" y="313.2" width="1.4" height="1.4" fill="#e4d014"/>
<rect x="490.8" y="299.3" width="1.4" height="1.4" fill="#b4dc22"/>
<rect x="433.2" y="311.6" width="1.4" height="1.4" fill="#e4d014"/>
<rect x="415.2" y="307.8" width="1.4" height="1.4" fill="#b4dc22"/>
<rect x="468.6" y="299.1" width="1.4" height="1.4" fill="#e4d014"/>
<rect x="480.7" y="301.1" width="1.4" height="1.4" fill="#e4d014"/>
<rect x="423.3" y="306.6" width="1.4" height="1.4" fill="#e4d014"/>
<rect x="440.2" y="301.8" width="1.4" height="1.4" fill="#e0a81c"/>
<rect x="442.1" y="306.3" width="1.4" height="1.4" fill="#b4dc22"/>
<rect x="474.1" y="304.3" width="1.4" height="1.4" fill="#e4d014"/>
<rect x="433.2" y="307.1" width="1.4" height="1.4" fill="#e4d014"/>
<rect x="439.7" y="308.8" width="1.4" height="1.4" fill="#e0a81c"/>
<rect x="476.2" y="302.5" width="1.4" height="1.4" fill="#b4dc22"/>
<rect x="403.7" y="312.9" width="1.4" height="1.4" fill="#e4d014"/>
<rect x="463.2" y="299.1" width="1.4" height="1.4" fill="#e4d014"/>
<rect x="449.9" y="308.0" width="1.4" height="1.4" fill="#b4dc22"/>
<rect x="459.5" y="300.1" width="1.4" height="1.4" fill="#b4dc22"/>
<rect x="486.9" y="299.8" width="1.4" height="1.4" fill="#e4d014"/>
<rect x="449.0" y="301.4" width="1.4" height="1.4" fill="#b4dc22"/>
<rect x="494.8" y="298.3" width="1.4" height="1.4" fill="#b4dc22"/>
<rect x="480.5" y="297.7" width="1.4" height="1.4" fill="#e0a81c"/>
<rect x="460.9" y="300.3" width="1.4" height="1.4" fill="#e4d014"/>
<rect x="425.0" y="310.7" width="1.4" height="1.4" fill="#b4dc22"/>
<rect x="432.9" y="312.7" width="1.4" height="1.4" fill="#e4d014"/>
<rect x="445.5" y="301.6" width="1.4" height="1.4" fill="#e0a81c"/>
<rect x="414.7" y="316.3" width="1.4" height="1.4" fill="#e4d014"/>
<rect x="454.7" y="304.9" width="1.4" height="1.4" fill="#e4d014"/>
<rect x="487.5" y="303.5" width="1.4" height="1.4" fill="#b4dc22"/>
<rect x="458.5" y="299.9" width="1.4" height="1.4" fill="#b4dc22"/>
<rect x="429.1" y="313.2" width="1.4" height="1.4" fill="#e4d014"/>
<rect x="455.9" y="307.4" width="1.4" height="1.4" fill="#e4d014"/>
<rect x="453.5" y="300.1" width="1.4" height="1.4" fill="#e4d014"/>
<rect x="418.9" y="316.3" width="1.4" height="1.4" fill="#e0a81c"/>
<rect x="463.9" y="301.0" width="1.4" height="1.4" fill="#b4dc22"/>
<rect x="471.3" y="300.6" width="1.4" height="1.4" fill="#b4dc22"/>
<rect x="477.6" y="296.5" width="1.4" height="1.4" fill="#e4d014"/>
<rect x="446.0" y="301.8" width="1.4" height="1.4" fill="#e4d014"/>
<rect x="455.5" y="300.8" width="1.4" height="1.4" fill="#e4d014"/>
<rect x="426.8" y="310.2" width="1.4" height="1.4" fill="#e4d014"/>
<rect x="462.3" y="298.6" width="1.4" height="1.4" fill="#b4dc22"/>
<rect x="415.6" y="316.7" width="1.4" height="1.4" fill="#b4dc22"/>
<rect x="446.2" y="304.6" width="1.4" height="1.4" fill="#b4dc22"/>
<rect x="466.8" y="304.9" width="1.4" height="1.4" fill="#b4dc22"/>
<rect x="447.7" y="310.6" width="1.4" height="1.4" fill="#b4dc22"/>
<rect x="482.4" y="299.3" width="1.4" height="1.4" fill="#e4d014"/>
<rect x="455.2" y="308.3" width="1.4" height="1.4" fill="#e4d014"/>
<rect x="451.4" y="304.1" width="1.4" height="1.4" fill="#e0a81c"/>
<rect x="432.1" y="303.5" width="1.4" height="1.4" fill="#b4dc22"/>
<rect x="486.6" y="301.4" width="1.4" height="1.4" fill="#b4dc22"/>
<rect x="472.7" y="299.7" width="1.4" height="1.4" fill="#b4dc22"/>
<rect x="408.6" y="309.7" width="1.4" height="1.4" fill="#e4d014"/>
<rect x="449.2" y="304.0" width="1.4" height="1.4" fill="#e4d014"/>
<rect x="467.3" y="302.6" width="1.4" height="1.4" fill="#e4d014"/>
<rect x="430.8" y="307.4" width="1.4" height="1.4" fill="#e4d014"/>
<rect x="408.4" y="317.7" width="1.4" height="1.4" fill="#e0a81c"/>
<rect x="464.6" y="306.3" width="1.4" height="1.4" fill="#e4d014"/>
<rect x="477.7" y="298.3" width="1.4" height="1.4" fill="#b4dc22"/>
<rect x="455.3" y="308.3" width="1.4" height="1.4" fill="#e4d014"/>
<rect x="476.5" y="297.6" width="1.4" height="1.4" fill="#e4d014"/>
<rect x="491.4" y="294.6" width="1.4" height="1.4" fill="#e4d014"/>
<rect x="430.1" y="306.8" width="1.4" height="1.4" fill="#e4d014"/>
<rect x="486.1" y="302.2" width="1.4" height="1.4" fill="#e4d014"/>
<rect x="435.5" y="308.4" width="1.4" height="1.4" fill="#e4d014"/>
<rect x="404.9" y="318.4" width="1.4" height="1.4" fill="#e4d014"/>
<rect x="448.9" y="309.7" width="1.4" height="1.4" fill="#e0a81c"/>
<rect x="446.4" y="302.4" width="1.4" height="1.4" fill="#e4d014"/>
<rect x="488.7" y="302.4" width="1.4" height="1.4" fill="#e4d014"/>
<rect x="480.8" y="299.0" width="1.4" height="1.4" fill="#e4d014"/>
<rect x="418.2" y="315.3" width="1.4" height="1.4" fill="#e0a81c"/>
<rect x="421.0" y="312.1" width="1.4" height="1.4" fill="#e4d014"/>
<rect x="484.7" y="295.8" width="1.4" height="1.4" fill="#e4d014"/>
<rect x="470.2" y="300.2" width="1.4" height="1.4" fill="#e0a81c"/>
<rect x="483.7" y="301.7" width="1.4" height="1.4" fill="#e4d014"/>
<rect x="467.4" y="306.5" width="1.4" height="1.4" fill="#e4d014"/>
<rect x="409.4" y="310.5" width="1.4" height="1.4" fill="#e4d014"/>
<rect x="468.8" y="299.3" width="1.4" height="1.4" fill="#e4d014"/>
<rect x="424.1" y="311.8" width="1.4" height="1.4" fill="#b4dc22"/>
<rect x="437.0" y="308.9" width="1.4" height="1.4" fill="#e0a81c"/>
<rect x="457.5" y="301.1" width="1.4" height="1.4" fill="#e4d014"/>
<rect x="489.1" y="300.4" width="1.4" height="1.4" fill="#e4d014"/>
<rect x="462.2" y="299.1" width="1.4" height="1.4" fill="#e0a81c"/>
<rect x="443.4" y="306.3" width="1.4" height="1.4" fill="#e4d014"/>
<rect x="406.3" y="315.1" width="1.4" height="1.4" fill="#e4d014"/>
<rect x="425.6" y="312.9" width="1.4" height="1.4" fill="#e4d014"/>
<rect x="428.8" y="311.7" width="1.4" height="1.4" fill="#e4d014"/>
<rect x="428.2" y="309.6" width="1.4" height="1.4" fill="#e4d014"/>
<rect x="486.3" y="303.6" width="1.4" height="1.4" fill="#e4d014"/>
<rect x="445.4" y="308.4" width="1.4" height="1.4" fill="#e4d014"/>
<rect x="489.4" y="299.0" width="1.4" height="1.4" fill="#e4d014"/>
<rect x="454.3" y="305.8" width="1.4" height="1.4" fill="#e4d014"/>
<rect x="463.9" y="305.6" width="1.4" height="1.4" fill="#e4d014"/>
<rect x="449.5" y="308.7" width="1.4" height="1.4" fill="#b4dc22"/>
<rect x="450.9" y="309.5" width="1.4" height="1.4" fill="#e4d014"/>
<rect x="475.3" y="298.1" width="1.4" height="1.4" fill="#b4dc22"/>
<rect x="424.1" y="309.4" width="1.4" height="1.4" fill="#b4dc22"/>
<rect x="475.9" y="303.7" width="1.4" height="1.4" fill="#e4d014"/>
<rect x="448.0" y="302.3" width="1.4" height="1.4" fill="#b4dc22"/>
<rect x="448.9" y="300.3" width="1.4" height="1.4" fill="#b4dc22"/>
<rect x="469.2" y="302.8" width="1.4" height="1.4" fill="#e0a81c"/>
<rect x="418.9" y="307.6" width="1.4" height="1.4" fill="#e4d014"/>
<rect x="448.6" y="304.5" width="1.4" height="1.4" fill="#e4d014"/>
<rect x="426.7" y="312.7" width="1.4" height="1.4" fill="#e4d014"/>
<rect x="487.3" y="299.9" width="1.4" height="1.4" fill="#e4d014"/>
<rect x="476.4" y="298.6" width="1.4" height="1.4" fill="#e4d014"/>
<rect x="431.2" y="303.5" width="1.4" height="1.4" fill="#e4d014"/>
<rect x="460.4" y="303.7" width="1.4" height="1.4" fill="#e4d014"/>
<rect x="457.3" y="299.7" width="1.4" height="1.4" fill="#b4dc22"/>
<rect x="418.1" y="308.8" width="1.4" height="1.4" fill="#e4d014"/>
<rect x="466.9" y="305.6" width="1.4" height="1.4" fill="#b4dc22"/>
<rect x="407.7" y="312.8" width="1.4" height="1.4" fill="#e4d014"/>
<rect x="422.3" y="315.4" width="1.4" height="1.4" fill="#e4d014"/>
<rect x="448.0" y="308.0" width="1.4" height="1.4" fill="#e0a81c"/>
<rect x="415.6" y="311.5" width="1.4" height="1.4" fill="#b4dc22"/>
<rect x="405.7" y="311.6" width="1.4" height="1.4" fill="#e0a81c"/>
<rect x="415.3" y="310.9" width="1.4" height="1.4" fill="#e4d014"/>
<rect x="441.9" y="301.6" width="1.4" height="1.4" fill="#e4d014"/>
<rect x="495.6" y="300.2" width="1.4" height="1.4" fill="#b4dc22"/>
<rect x="423.6" y="307.6" width="1.4" height="1.4" fill="#e4d014"/>
<rect x="424.7" y="309.5" width="1.4" height="1.4" fill="#e0a81c"/>
<rect x="436.2" y="305.6" width="1.4" height="1.4" fill="#e0a81c"/>
<rect x="459.4" y="299.0" width="1.4" height="1.4" fill="#e4d014"/>
<rect x="463.1" y="298.7" width="1.4" height="1.4" fill="#e4d014"/>
<rect x="467.3" y="305.8" width="1.4" height="1.4" fill="#b4dc22"/>
<rect x="485.3" y="299.3" width="1.4" height="1.4" fill="#e4d014"/>
<rect x="481.2" y="299.2" width="1.4" height="1.4" fill="#b4dc22"/>
<rect x="422.2" y="308.9" width="1.4" height="1.4" fill="#e4d014"/>
<rect x="453.7" y="301.0" width="1.4" height="1.4" fill="#e4d014"/>
<rect x="422.2" y="310.2" width="1.4" height="1.4" fill="#e4d014"/>
<rect x="444.0" y="311.2" width="1.4" height="1.4" fill="#b4dc22"/>
<rect x="483.1" y="297.4" width="1.4" height="1.4" fill="#e4d014"/>
<rect x="408.8" y="315.4" width="1.4" height="1.4" fill="#e4d014"/>
<rect x="427.8" y="304.1" width="1.4" height="1.4" fill="#e4d014"/>
<rect x="426.7" y="308.3" width="1.4" height="1.4" fill="#e0a81c"/>
<rect x="469.2" y="299.9" width="1.4" height="1.4" fill="#e4d014"/>
<rect x="416.4" y="316.3" width="1.4" height="1.4" fill="#e4d014"/>
<rect x="474.0" y="303.4" width="1.4" height="1.4" fill="#e0a81c"/>
<rect x="403.9" y="312.8" width="1.4" height="1.4" fill="#e4d014"/>
<rect x="409.8" y="317.2" width="1.4" height="1.4" fill="#e4d014"/>
<rect x="474.4" y="301.4" width="1.4" height="1.4" fill="#e4d014"/>
<rect x="439.0" y="303.8" width="1.4" height="1.4" fill="#e4d014"/>
<rect x="416.2" y="312.8" width="1.4" height="1.4" fill="#e4d014"/>
<rect x="431.4" y="307.6" width="1.4" height="1.4" fill="#e4d014"/>
<rect x="414.8" y="314.3" width="1.4" height="1.4" fill="#e4d014"/>
<rect x="470.2" y="303.5" width="1.4" height="1.4" fill="#e4d014"/>
<rect x="421.3" y="308.4" width="1.4" height="1.4" fill="#b4dc22"/>
<rect x="440.1" y="305.2" width="1.4" height="1.4" fill="#e0a81c"/>
<rect x="423.2" y="308.1" width="1.4" height="1.4" fill="#e4d014"/>
<rect x="422.3" y="305.6" width="1.4" height="1.4" fill="#e4d014"/>
<rect x="461.3" y="303.9" width="1.4" height="1.4" fill="#b4dc22"/>
<rect x="493.7" y="296.7" width="1.4" height="1.4" fill="#b4dc22"/>
<rect x="488.4" y="296.8" width="1.4" height="1.4" fill="#b4dc22"/>
<rect x="464.7" y="307.2" width="1.4" height="1.4" fill="#e0a81c"/>
<rect x="424.1" y="311.5" width="1.4" height="1.4" fill="#e4d014"/>
<rect x="442.2" y="305.0" width="1.4" height="1.4" fill="#e4d014"/>
<rect x="438.0" y="305.1" width="1.4" height="1.4" fill="#e4d014"/>
<rect x="428.3" y="305.5" width="1.4" height="1.4" fill="#e4d014"/>
<rect x="446.7" y="301.9" width="1.4" height="1.4" fill="#b4dc22"/>
<rect x="424.5" y="305.6" width="1.4" height="1.4" fill="#e4d014"/>
<rect x="441.7" y="302.4" width="1.4" height="1.4" fill="#b4dc22"/>
<rect x="467.9" y="302.8" width="1.4" height="1.4" fill="#b4dc22"/>
<rect x="404.2" y="313.4" width="1.4" height="1.4" fill="#e4d014"/>
<rect x="407.9" y="312.7" width="1.4" height="1.4" fill="#e4d014"/>
<rect x="448.6" y="306.1" width="1.4" height="1.4" fill="#e4d014"/>
<rect x="432.6" y="305.5" width="1.4" height="1.4" fill="#e4d014"/>
<rect x="434.6" y="312.0" width="1.4" height="1.4" fill="#e4d014"/>
<rect x="426.6" y="311.3" width="1.4" height="1.4" fill="#e4d014"/>
<rect x="446.1" y="306.8" width="1.4" height="1.4" fill="#e0a81c"/>
<rect x="436.1" y="308.2" width="1.4" height="1.4" fill="#e0a81c"/>
<rect x="474.5" y="302.4" width="1.4" height="1.4" fill="#b4dc22"/>
<rect x="440.6" y="305.5" width="1.4" height="1.4" fill="#e4d014"/>
<rect x="480.0" y="303.8" width="1.4" height="1.4" fill="#e4d014"/>
<rect x="487.5" y="295.4" width="1.4" height="1.4" fill="#e4d014"/>
<rect x="449.7" y="303.0" width="1.4" height="1.4" fill="#e4d014"/>
<rect x="493.8" y="295.5" width="1.4" height="1.4" fill="#e4d014"/>
<rect x="423.5" y="312.1" width="1.4" height="1.4" fill="#e4d014"/>
<rect x="402.1" y="315.4" width="1.4" height="1.4" fill="#e4d014"/>
<rect x="424.5" y="309.9" width="1.4" height="1.4" fill="#b4dc22"/>
<rect x="453.5" y="305.7" width="1.4" height="1.4" fill="#e4d014"/>
<rect x="480.1" y="304.6" width="1.4" height="1.4" fill="#e4d014"/>
<rect x="434.6" y="311.9" width="1.4" height="1.4" fill="#e4d014"/>
<rect x="469.3" y="303.9" width="1.4" height="1.4" fill="#b4dc22"/>
<rect x="492.6" y="301.2" width="1.4" height="1.4" fill="#e4d014"/>
<rect x="460.4" y="303.3" width="1.4" height="1.4" fill="#e4d014"/>
<rect x="436.7" y="304.9" width="1.4" height="1.4" fill="#b4dc22"/>
<rect x="452.2" y="301.9" width="1.4" height="1.4" fill="#e4d014"/>
<rect x="432.5" y="304.7" width="1.4" height="1.4" fill="#e4d014"/>
<rect x="413.8" y="307.8" width="1.4" height="1.4" fill="#e4d014"/>
<rect x="411.6" y="315.0" width="1.4" height="1.4" fill="#e4d014"/>
<rect x="444.4" y="308.8" width="1.4" height="1.4" fill="#e4d014"/>
<rect x="417.3" y="315.4" width="1.4" height="1.4" fill="#e0a81c"/>
<rect x="407.0" y="311.4" width="1.4" height="1.4" fill="#e4d014"/>
<rect x="476.9" y="299.9" width="1.4" height="1.4" fill="#b4dc22"/>
<rect x="425.7" y="312.0" width="1.4" height="1.4" fill="#e4d014"/>
<rect x="433.4" y="310.8" width="1.4" height="1.4" fill="#b4dc22"/>
<rect x="423.8" y="320.8" width="1.5" height="1.5" fill="#e0a81c"/>
<rect x="419.9" y="321.2" width="1.5" height="1.5" fill="#d07424"/>
<rect x="412.5" y="323.5" width="1.5" height="1.5" fill="#d07424"/>
<rect x="401.7" y="325.4" width="1.5" height="1.5" fill="#e0a81c"/>
<rect x="406.2" y="324.9" width="1.5" height="1.5" fill="#d07424"/>
<rect x="415.5" y="322.9" width="1.5" height="1.5" fill="#d07424"/>
<rect x="421.7" y="322.0" width="1.5" height="1.5" fill="#d07424"/>
<rect x="422.4" y="321.7" width="1.5" height="1.5" fill="#d07424"/>
<rect x="402.8" y="326.1" width="1.5" height="1.5" fill="#d07424"/>
<rect x="411.5" y="323.0" width="1.5" height="1.5" fill="#d07424"/>
<rect x="412.2" y="323.0" width="1.5" height="1.5" fill="#e0a81c"/>
<rect x="412.8" y="323.0" width="1.5" height="1.5" fill="#e0a81c"/>
<rect x="407.0" y="325.9" width="1.5" height="1.5" fill="#e0a81c"/>
<rect x="409.1" y="324.9" width="1.5" height="1.5" fill="#d07424"/>
<rect x="403.1" y="326.2" width="1.5" height="1.5" fill="#d07424"/>
<rect x="410.3" y="325.6" width="1.5" height="1.5" fill="#d07424"/>
<rect x="410.0" y="324.9" width="1.5" height="1.5" fill="#e0a81c"/>
<rect x="411.5" y="324.7" width="1.5" height="1.5" fill="#d07424"/>
<rect x="525.9" y="288.0" width="1.4" height="1.4" fill="#d07424"/>
<rect x="510.5" y="293.6" width="1.4" height="1.4" fill="#b4dc22"/>
<rect x="507.9" y="291.0" width="1.4" height="1.4" fill="#e4d014"/>
<rect x="515.7" y="294.4" width="1.4" height="1.4" fill="#e4d014"/>
<rect x="524.2" y="295.0" width="1.4" height="1.4" fill="#d07424"/>
<rect x="509.3" y="297.7" width="1.4" height="1.4" fill="#b4dc22"/>
<rect x="501.3" y="292.1" width="1.4" height="1.4" fill="#e4d014"/>
<rect x="499.6" y="292.9" width="1.4" height="1.4" fill="#e4d014"/>
<rect x="518.6" y="290.8" width="1.4" height="1.4" fill="#e4d014"/>
<rect x="496.3" y="294.8" width="1.4" height="1.4" fill="#d07424"/>
<rect x="496.3" y="297.7" width="1.4" height="1.4" fill="#b4dc22"/>
<rect x="519.8" y="294.6" width="1.4" height="1.4" fill="#e4d014"/>
<rect x="520.1" y="295.4" width="1.4" height="1.4" fill="#b4dc22"/>
<rect x="525.6" y="287.1" width="1.4" height="1.4" fill="#d07424"/>
<rect x="508.1" y="296.8" width="1.4" height="1.4" fill="#e4d014"/>
<rect x="523.3" y="286.9" width="1.4" height="1.4" fill="#b4dc22"/>
<rect x="502.8" y="295.0" width="1.4" height="1.4" fill="#e4d014"/>
<rect x="515.7" y="296.2" width="1.4" height="1.4" fill="#e4d014"/>
<rect x="515.1" y="292.0" width="1.4" height="1.4" fill="#e4d014"/>
<rect x="523.2" y="289.9" width="1.4" height="1.4" fill="#e4d014"/>
<rect x="506.0" y="297.5" width="1.4" height="1.4" fill="#e4d014"/>
<rect x="518.3" y="293.1" width="1.4" height="1.4" fill="#b4dc22"/>
<rect x="501.3" y="292.8" width="1.4" height="1.4" fill="#e4d014"/>
<rect x="506.5" y="294.6" width="1.4" height="1.4" fill="#e4d014"/>
<rect x="511.1" y="293.4" width="1.4" height="1.4" fill="#e4d014"/>
<rect x="512.1" y="298.2" width="1.4" height="1.4" fill="#e4d014"/>
<rect x="522.4" y="290.0" width="1.4" height="1.4" fill="#b4dc22"/>
<rect x="499.3" y="301.2" width="1.4" height="1.4" fill="#e4d014"/>
<rect x="524.9" y="288.5" width="1.4" height="1.4" fill="#e4d014"/>
<rect x="517.2" y="289.9" width="1.4" height="1.4" fill="#e4d014"/>
<rect x="516.3" y="297.3" width="1.4" height="1.4" fill="#e4d014"/>
<rect x="501.5" y="295.0" width="1.4" height="1.4" fill="#d07424"/>
<rect x="500.4" y="297.8" width="1.4" height="1.4" fill="#e4d014"/>
<rect x="515.3" y="290.7" width="1.4" height="1.4" fill="#b4dc22"/>
<rect x="522.6" y="295.2" width="1.4" height="1.4" fill="#b4dc22"/>
<rect x="511.1" y="294.9" width="1.4" height="1.4" fill="#e4d014"/>
<rect x="521.1" y="293.9" width="1.4" height="1.4" fill="#e4d014"/>
<rect x="516.0" y="292.4" width="1.4" height="1.4" fill="#e4d014"/>
<rect x="502.9" y="296.9" width="1.4" height="1.4" fill="#b4dc22"/>
<rect x="511.5" y="289.9" width="1.4" height="1.4" fill="#b4dc22"/>
<rect x="509.4" y="295.5" width="1.4" height="1.4" fill="#b4dc22"/>
<rect x="523.9" y="288.0" width="1.4" height="1.4" fill="#e4d014"/>
<rect x="525.8" y="293.4" width="1.4" height="1.4" fill="#e4d014"/>
<rect x="518.1" y="297.4" width="1.4" height="1.4" fill="#e4d014"/>
<rect x="522.0" y="288.2" width="1.4" height="1.4" fill="#d07424"/>
<rect x="511.3" y="287.5" width="1.5" height="1.5" fill="#e0a81c"/>
<rect x="514.6" y="298.1" width="1.5" height="1.5" fill="#e0a81c"/>
<rect x="517.8" y="291.7" width="1.5" height="1.5" fill="#e0a81c"/>
<rect x="502.4" y="297.1" width="1.5" height="1.5" fill="#e4d014"/>
<rect x="506.3" y="296.1" width="1.5" height="1.5" fill="#e4d014"/>
<rect x="512.3" y="297.0" width="1.5" height="1.5" fill="#e4d014"/>
<rect x="506.9" y="293.7" width="1.5" height="1.5" fill="#e4d014"/>
<rect x="512.7" y="295.8" width="1.5" height="1.5" fill="#e4d014"/>
<rect x="506.1" y="296.0" width="1.5" height="1.5" fill="#e0a81c"/>
<rect x="517.2" y="292.2" width="1.5" height="1.5" fill="#e0a81c"/>
<rect x="517.7" y="286.3" width="1.5" height="1.5" fill="#e4d014"/>
<rect x="503.1" y="284.6" width="1.5" height="1.5" fill="#e4d014"/>
<rect x="519.2" y="296.5" width="1.5" height="1.5" fill="#e4d014"/>
<rect x="504.8" y="289.8" width="1.5" height="1.5" fill="#e0a81c"/>
<rect x="564.9" y="273.3" width="1.3" height="1.3" fill="#d07424"/>
<rect x="588.2" y="259.8" width="1.3" height="1.3" fill="#d07424"/>
<rect x="581.2" y="265.2" width="1.3" height="1.3" fill="#d07424"/>
<rect x="568.1" y="265.9" width="1.3" height="1.3" fill="#d07424"/>
<rect x="547.4" y="268.5" width="1.3" height="1.3" fill="#e4d014"/>
<rect x="543.5" y="276.6" width="1.3" height="1.3" fill="#e4d014"/>
<rect x="537.4" y="272.8" width="1.3" height="1.3" fill="#e4d014"/>
<rect x="555.4" y="263.5" width="1.3" height="1.3" fill="#d07424"/>
<rect x="585.3" y="263.0" width="1.3" height="1.3" fill="#d07424"/>
<rect x="538.4" y="287.0" width="1.3" height="1.3" fill="#e4d014"/>
<rect x="572.4" y="264.0" width="1.3" height="1.3" fill="#d07424"/>
<rect x="551.7" y="264.3" width="1.3" height="1.3" fill="#d07424"/>
<rect x="552.8" y="276.8" width="1.3" height="1.3" fill="#d07424"/>
<rect x="554.8" y="270.4" width="1.3" height="1.3" fill="#e0a81c"/>
<rect x="547.8" y="276.4" width="1.3" height="1.3" fill="#d07424"/>
<rect x="562.5" y="265.0" width="1.3" height="1.3" fill="#e0a81c"/>
<rect x="544.0" y="281.3" width="1.3" height="1.3" fill="#e4d014"/>
<rect x="554.7" y="278.1" width="1.3" height="1.3" fill="#d07424"/>
<rect x="572.8" y="266.7" width="1.3" height="1.3" fill="#d07424"/>
<rect x="530.0" y="283.4" width="1.3" height="1.3" fill="#e4d014"/>
<rect x="553.8" y="278.8" width="1.3" height="1.3" fill="#d07424"/>
<rect x="569.8" y="268.5" width="1.3" height="1.3" fill="#d07424"/>
<rect x="551.9" y="264.0" width="1.3" height="1.3" fill="#e0a81c"/>
<rect x="541.9" y="274.2" width="1.3" height="1.3" fill="#d07424"/>
<rect x="577.7" y="267.6" width="1.3" height="1.3" fill="#d07424"/>
<rect x="560.4" y="262.4" width="1.3" height="1.3" fill="#e0a81c"/>
<rect x="531.6" y="281.5" width="1.3" height="1.3" fill="#e4d014"/>
<rect x="571.6" y="267.9" width="1.3" height="1.3" fill="#d07424"/>
<rect x="582.6" y="266.5" width="1.3" height="1.3" fill="#d07424"/>
<rect x="565.9" y="266.9" width="1.3" height="1.3" fill="#d07424"/>
<rect x="555.3" y="266.9" width="1.3" height="1.3" fill="#d07424"/>
<rect x="564.1" y="274.6" width="1.3" height="1.3" fill="#e0a81c"/>
<rect x="588.5" y="260.8" width="1.3" height="1.3" fill="#d07424"/>
<rect x="566.9" y="269.8" width="1.3" height="1.3" fill="#e0a81c"/>
<rect x="530.2" y="283.9" width="1.3" height="1.3" fill="#e4d014"/>
<rect x="567.3" y="263.2" width="1.3" height="1.3" fill="#e0a81c"/>
<rect x="539.2" y="275.4" width="1.3" height="1.3" fill="#d07424"/>
<rect x="550.9" y="276.0" width="1.3" height="1.3" fill="#d07424"/>
<rect x="536.5" y="282.2" width="1.3" height="1.3" fill="#e4d014"/>
<rect x="572.7" y="262.8" width="1.3" height="1.3" fill="#d07424"/>
<rect x="572.0" y="268.9" width="1.3" height="1.3" fill="#d07424"/>
<rect x="555.5" y="261.5" width="1.3" height="1.3" fill="#e0a81c"/>
<rect x="585.5" y="264.9" width="1.3" height="1.3" fill="#d07424"/>
<rect x="548.1" y="272.8" width="1.3" height="1.3" fill="#d07424"/>
<rect x="533.0" y="286.5" width="1.3" height="1.3" fill="#e4d014"/>
<rect x="558.0" y="263.1" width="1.3" height="1.3" fill="#d07424"/>
<rect x="534.2" y="275.2" width="1.3" height="1.3" fill="#e4d014"/>
<rect x="544.5" y="279.5" width="1.3" height="1.3" fill="#d07424"/>
<rect x="552.1" y="262.5" width="1.3" height="1.3" fill="#d07424"/>
<rect x="554.5" y="271.4" width="1.3" height="1.3" fill="#d07424"/>
<rect x="579.6" y="260.3" width="1.3" height="1.3" fill="#d07424"/>
<rect x="535.8" y="287.8" width="1.3" height="1.3" fill="#e4d014"/>
<rect x="551.6" y="273.3" width="1.3" height="1.3" fill="#e0a81c"/>
<rect x="586.7" y="261.4" width="1.3" height="1.3" fill="#d07424"/>
<rect x="535.7" y="285.4" width="1.3" height="1.3" fill="#e4d014"/>
<rect x="570.9" y="261.9" width="1.3" height="1.3" fill="#d07424"/>
<rect x="527.8" y="281.5" width="1.3" height="1.3" fill="#e4d014"/>
<rect x="586.9" y="262.7" width="1.3" height="1.3" fill="#d07424"/>
<rect x="528.9" y="284.3" width="1.3" height="1.3" fill="#d07424"/>
<rect x="542.4" y="267.7" width="1.3" height="1.3" fill="#e0a81c"/>
<rect x="546.7" y="272.3" width="1.3" height="1.3" fill="#e4d014"/>
<rect x="581.9" y="266.7" width="1.3" height="1.3" fill="#d07424"/>
<rect x="557.6" y="276.3" width="1.3" height="1.3" fill="#d07424"/>
<rect x="544.9" y="278.5" width="1.3" height="1.3" fill="#d07424"/>
<rect x="549.2" y="270.4" width="1.3" height="1.3" fill="#d07424"/>
<rect x="548.6" y="270.5" width="1.3" height="1.3" fill="#d07424"/>
<rect x="529.1" y="289.4" width="1.3" height="1.3" fill="#d07424"/>
<rect x="559.3" y="269.9" width="1.3" height="1.3" fill="#d07424"/>
<rect x="540.0" y="269.8" width="1.3" height="1.3" fill="#d07424"/>
<rect x="545.8" y="272.5" width="1.3" height="1.3" fill="#d07424"/>
<rect x="573.2" y="265.3" width="1.3" height="1.3" fill="#d07424"/>
<rect x="551.6" y="280.0" width="1.3" height="1.3" fill="#d07424"/>
<rect x="563.4" y="274.8" width="1.3" height="1.3" fill="#d07424"/>
<rect x="563.7" y="266.0" width="1.3" height="1.3" fill="#d07424"/>
<rect x="564.4" y="269.0" width="1.3" height="1.3" fill="#d07424"/>
<rect x="557.4" y="269.9" width="1.3" height="1.3" fill="#d07424"/>
<rect x="529.3" y="279.8" width="1.3" height="1.3" fill="#e4d014"/>
<rect x="543.0" y="280.8" width="1.3" height="1.3" fill="#d07424"/>
<rect x="580.2" y="262.8" width="1.3" height="1.3" fill="#d07424"/>
<rect x="568.8" y="261.3" width="1.3" height="1.3" fill="#e0a81c"/>
<rect x="578.4" y="262.5" width="1.3" height="1.3" fill="#d07424"/>
<rect x="577.6" y="267.0" width="1.3" height="1.3" fill="#d07424"/>
<rect x="529.6" y="288.2" width="1.3" height="1.3" fill="#d07424"/>
<rect x="565.4" y="268.2" width="1.3" height="1.3" fill="#e0a81c"/>
<rect x="566.2" y="260.7" width="1.3" height="1.3" fill="#e0a81c"/>
<rect x="573.4" y="266.3" width="1.3" height="1.3" fill="#d07424"/>
<rect x="572.4" y="264.7" width="1.3" height="1.3" fill="#d07424"/>
<rect x="588.0" y="264.0" width="1.3" height="1.3" fill="#d07424"/>
<rect x="575.2" y="264.3" width="1.3" height="1.3" fill="#d07424"/>
<rect x="549.8" y="270.6" width="1.3" height="1.3" fill="#d07424"/>
<rect x="533.4" y="279.3" width="1.3" height="1.3" fill="#e4d014"/>
<rect x="530.5" y="279.0" width="1.3" height="1.3" fill="#e0a81c"/>
<rect x="568.0" y="267.4" width="1.3" height="1.3" fill="#d07424"/>
<rect x="533.5" y="279.2" width="1.3" height="1.3" fill="#e0a81c"/>
<rect x="561.3" y="275.1" width="1.3" height="1.3" fill="#d07424"/>
<rect x="552.1" y="271.7" width="1.3" height="1.3" fill="#e0a81c"/>
<rect x="533.8" y="287.4" width="1.3" height="1.3" fill="#e4d014"/>
<rect x="528.0" y="285.2" width="1.3" height="1.3" fill="#e4d014"/>
<rect x="568.5" y="272.2" width="1.3" height="1.3" fill="#d07424"/>
<rect x="569.4" y="265.0" width="1.3" height="1.3" fill="#d07424"/>
<rect x="532.6" y="286.1" width="1.3" height="1.3" fill="#d07424"/>
<rect x="562.9" y="263.7" width="1.3" height="1.3" fill="#d07424"/>
<rect x="536.3" y="277.4" width="1.3" height="1.3" fill="#e4d014"/>
<rect x="558.8" y="267.4" width="1.3" height="1.3" fill="#d07424"/>
<rect x="579.1" y="262.6" width="1.3" height="1.3" fill="#d07424"/>
<rect x="556.3" y="278.2" width="1.3" height="1.3" fill="#d07424"/>
<rect x="569.9" y="263.0" width="1.3" height="1.3" fill="#d07424"/>
<rect x="572.0" y="266.6" width="1.3" height="1.3" fill="#d07424"/>
<rect x="530.0" y="288.8" width="1.3" height="1.3" fill="#e4d014"/>
<rect x="571.1" y="265.2" width="1.3" height="1.3" fill="#d07424"/>
<rect x="561.3" y="276.0" width="1.3" height="1.3" fill="#e0a81c"/>
<rect x="554.7" y="270.0" width="1.3" height="1.3" fill="#d07424"/>
<rect x="573.4" y="261.0" width="1.3" height="1.3" fill="#d07424"/>
<rect x="579.4" y="259.7" width="1.3" height="1.3" fill="#d07424"/>
<rect x="561.8" y="269.2" width="1.3" height="1.3" fill="#d07424"/>
<rect x="535.5" y="287.6" width="1.3" height="1.3" fill="#e4d014"/>
<rect x="576.8" y="260.5" width="1.3" height="1.3" fill="#d07424"/>
<rect x="539.8" y="271.8" width="1.3" height="1.3" fill="#e4d014"/>
<rect x="564.4" y="262.3" width="1.3" height="1.3" fill="#d07424"/>
<rect x="562.7" y="274.2" width="1.3" height="1.3" fill="#e0a81c"/>
<rect x="569.4" y="264.7" width="1.3" height="1.3" fill="#e0a81c"/>
<rect x="571.3" y="263.5" width="1.3" height="1.3" fill="#e0a81c"/>
<rect x="571.8" y="263.1" width="1.3" height="1.3" fill="#d07424"/>
<rect x="527.3" y="287.0" width="1.3" height="1.3" fill="#e4d014"/>
<rect x="544.5" y="268.7" width="1.3" height="1.3" fill="#d07424"/>
<rect x="556.5" y="265.9" width="1.3" height="1.3" fill="#d07424"/>
<rect x="543.5" y="274.7" width="1.3" height="1.3" fill="#e0a81c"/>
<rect x="536.1" y="285.9" width="1.3" height="1.3" fill="#e0a81c"/>
<rect x="564.4" y="268.4" width="1.3" height="1.3" fill="#d07424"/>
<rect x="559.7" y="271.6" width="1.3" height="1.3" fill="#e0a81c"/>
<rect x="574.8" y="262.5" width="1.3" height="1.3" fill="#d07424"/>
<rect x="585.0" y="261.4" width="1.3" height="1.3" fill="#d07424"/>
<rect x="540.7" y="275.7" width="1.3" height="1.3" fill="#d07424"/>
<rect x="571.9" y="270.9" width="1.3" height="1.3" fill="#d07424"/>
<rect x="561.7" y="266.1" width="1.3" height="1.3" fill="#d07424"/>
<rect x="585.8" y="259.6" width="1.3" height="1.3" fill="#e0a81c"/>
<rect x="567.4" y="261.3" width="1.3" height="1.3" fill="#e0a81c"/>
<rect x="532.4" y="283.7" width="1.3" height="1.3" fill="#d07424"/>
<rect x="588.3" y="260.4" width="1.3" height="1.3" fill="#d07424"/>
<rect x="529.9" y="286.8" width="1.3" height="1.3" fill="#d07424"/>
<rect x="527.9" y="287.0" width="1.3" height="1.3" fill="#e0a81c"/>
<rect x="569.2" y="271.0" width="1.3" height="1.3" fill="#d07424"/>
<rect x="558.8" y="262.3" width="1.3" height="1.3" fill="#d07424"/>
<rect x="537.6" y="279.3" width="1.3" height="1.3" fill="#d07424"/>
<rect x="557.4" y="264.4" width="1.3" height="1.3" fill="#d07424"/>
<rect x="552.3" y="270.7" width="1.3" height="1.3" fill="#d07424"/>
<rect x="556.7" y="270.8" width="1.3" height="1.3" fill="#e0a81c"/>
<rect x="561.4" y="262.9" width="1.3" height="1.3" fill="#d07424"/>
<rect x="547.1" y="276.6" width="1.3" height="1.3" fill="#e0a81c"/>
<rect x="587.5" y="264.4" width="1.3" height="1.3" fill="#e0a81c"/>
<rect x="580.1" y="267.4" width="1.3" height="1.3" fill="#d07424"/>
<rect x="556.9" y="271.3" width="1.3" height="1.3" fill="#d07424"/>
<rect x="564.6" y="269.3" width="1.3" height="1.3" fill="#e0a81c"/>
<rect x="531.4" y="283.7" width="1.3" height="1.3" fill="#e0a81c"/>
<rect x="528.0" y="281.3" width="1.3" height="1.3" fill="#e0a81c"/>
<rect x="586.3" y="259.0" width="1.3" height="1.3" fill="#d07424"/>
<rect x="578.3" y="265.9" width="1.3" height="1.3" fill="#d07424"/>
<rect x="562.5" y="272.1" width="1.3" height="1.3" fill="#d07424"/>
<rect x="526.0" y="282.7" width="1.3" height="1.3" fill="#e4d014"/>
<rect x="587.5" y="263.7" width="1.3" height="1.3" fill="#d07424"/>
<rect x="547.1" y="269.2" width="1.3" height="1.3" fill="#d07424"/>
<rect x="574.5" y="262.5" width="1.3" height="1.3" fill="#d07424"/>
<rect x="559.1" y="266.4" width="1.3" height="1.3" fill="#d07424"/>
<rect x="554.7" y="265.5" width="1.3" height="1.3" fill="#e0a81c"/>
<rect x="537.1" y="273.4" width="1.3" height="1.3" fill="#d07424"/>
<rect x="556.2" y="274.8" width="1.3" height="1.3" fill="#d07424"/>
<rect x="541.0" y="279.3" width="1.3" height="1.3" fill="#d07424"/>
<rect x="558.9" y="265.2" width="1.3" height="1.3" fill="#e0a81c"/>
<rect x="537.6" y="274.3" width="1.3" height="1.3" fill="#d07424"/>
<rect x="546.8" y="277.2" width="1.3" height="1.3" fill="#e4d014"/>
<rect x="575.8" y="265.2" width="1.3" height="1.3" fill="#d07424"/>
<rect x="574.1" y="262.4" width="1.3" height="1.3" fill="#d07424"/>
<rect x="552.1" y="280.2" width="1.3" height="1.3" fill="#d07424"/>
<rect x="548.5" y="280.4" width="1.3" height="1.3" fill="#e0a81c"/>
<rect x="550.4" y="264.3" width="1.3" height="1.3" fill="#e4d014"/>
<rect x="575.3" y="263.2" width="1.3" height="1.3" fill="#d07424"/>
<rect x="549.9" y="267.4" width="1.3" height="1.3" fill="#d07424"/>
<rect x="572.7" y="265.3" width="1.3" height="1.3" fill="#d07424"/>
<rect x="526.9" y="286.8" width="1.3" height="1.3" fill="#e4d014"/>
<rect x="530.1" y="289.9" width="1.3" height="1.3" fill="#d07424"/>
<rect x="539.0" y="284.6" width="1.3" height="1.3" fill="#e0a81c"/>
<rect x="584.7" y="261.3" width="1.3" height="1.3" fill="#e0a81c"/>
<rect x="534.9" y="284.2" width="1.3" height="1.3" fill="#e0a81c"/>
<rect x="538.1" y="272.2" width="1.3" height="1.3" fill="#e4d014"/>
<rect x="581.6" y="265.1" width="1.3" height="1.3" fill="#e0a81c"/>
<rect x="554.6" y="268.0" width="1.3" height="1.3" fill="#d07424"/>
<rect x="543.2" y="283.5" width="1.3" height="1.3" fill="#d07424"/>
<rect x="537.6" y="276.3" width="1.3" height="1.3" fill="#d07424"/>
<rect x="545.3" y="266.5" width="1.3" height="1.3" fill="#d07424"/>
<rect x="559.2" y="269.8" width="1.3" height="1.3" fill="#d07424"/>
<rect x="574.0" y="265.5" width="1.3" height="1.3" fill="#e0a81c"/>
<rect x="531.1" y="279.9" width="1.3" height="1.3" fill="#d07424"/>
<rect x="545.5" y="278.6" width="1.3" height="1.3" fill="#e0a81c"/>
<rect x="557.7" y="263.8" width="1.3" height="1.3" fill="#d07424"/>
<rect x="561.8" y="265.3" width="1.3" height="1.3" fill="#d07424"/>
<rect x="587.3" y="261.5" width="1.3" height="1.3" fill="#d07424"/>
<rect x="579.3" y="263.5" width="1.3" height="1.3" fill="#d07424"/>
<rect x="585.5" y="265.4" width="1.3" height="1.3" fill="#d07424"/>
<rect x="574.1" y="264.1" width="1.3" height="1.3" fill="#d07424"/>
<rect x="536.3" y="274.6" width="1.3" height="1.3" fill="#e4d014"/>
<rect x="539.3" y="269.0" width="1.3" height="1.3" fill="#d07424"/>
<rect x="576.3" y="264.6" width="1.3" height="1.3" fill="#d07424"/>
<rect x="555.3" y="264.5" width="1.3" height="1.3" fill="#d07424"/>
<rect x="545.2" y="263.7" width="1.3" height="1.3" fill="#d07424"/>
<rect x="565.0" y="265.7" width="1.3" height="1.3" fill="#d07424"/>
<rect x="565.3" y="264.9" width="1.3" height="1.3" fill="#d07424"/>
<rect x="581.7" y="263.9" width="1.3" height="1.3" fill="#d07424"/>
<rect x="560.0" y="268.2" width="1.3" height="1.3" fill="#d07424"/>
<rect x="583.6" y="260.8" width="1.3" height="1.3" fill="#e0a81c"/>
<rect x="579.7" y="267.1" width="1.3" height="1.3" fill="#d07424"/>
<rect x="558.1" y="277.5" width="1.3" height="1.3" fill="#d07424"/>
<rect x="536.8" y="283.2" width="1.3" height="1.3" fill="#d07424"/>
<rect x="562.8" y="263.0" width="1.3" height="1.3" fill="#e0a81c"/>
<rect x="543.9" y="266.1" width="1.3" height="1.3" fill="#e4d014"/>
<rect x="547.9" y="273.4" width="1.3" height="1.3" fill="#d07424"/>
<rect x="584.1" y="262.7" width="1.3" height="1.3" fill="#d07424"/>
<rect x="526.1" y="287.4" width="1.3" height="1.3" fill="#e4d014"/>
<rect x="562.2" y="270.3" width="1.3" height="1.3" fill="#d07424"/>
<rect x="531.7" y="283.3" width="1.3" height="1.3" fill="#e4d014"/>
<rect x="566.4" y="273.6" width="1.3" height="1.3" fill="#d07424"/>
<rect x="553.9" y="262.9" width="1.3" height="1.3" fill="#e4d014"/>
<rect x="540.8" y="282.7" width="1.3" height="1.3" fill="#e4d014"/>
<rect x="542.0" y="283.4" width="1.3" height="1.3" fill="#e4d014"/>
<rect x="552.9" y="271.8" width="1.3" height="1.3" fill="#e0a81c"/>
<rect x="556.9" y="269.4" width="1.3" height="1.3" fill="#d07424"/>
<rect x="579.0" y="263.9" width="1.3" height="1.3" fill="#d07424"/>
<rect x="538.4" y="273.4" width="1.3" height="1.3" fill="#e0a81c"/>
<rect x="576.6" y="269.3" width="1.3" height="1.3" fill="#e0a81c"/>
<rect x="569.2" y="270.3" width="1.3" height="1.3" fill="#d07424"/>
<rect x="577.0" y="267.4" width="1.3" height="1.3" fill="#d07424"/>
<rect x="577.3" y="262.5" width="1.3" height="1.3" fill="#d07424"/>
<rect x="583.9" y="259.2" width="1.3" height="1.3" fill="#d07424"/>
<rect x="547.6" y="278.3" width="1.3" height="1.3" fill="#e4d014"/>
<rect x="583.4" y="266.0" width="1.3" height="1.3" fill="#d07424"/>
<rect x="530.1" y="286.7" width="1.3" height="1.3" fill="#d07424"/>
<rect x="587.9" y="263.8" width="1.3" height="1.3" fill="#d07424"/>
<rect x="537.7" y="282.1" width="1.3" height="1.3" fill="#e4d014"/>
<rect x="588.1" y="262.3" width="1.3" height="1.3" fill="#d07424"/>
<rect x="571.8" y="260.6" width="1.3" height="1.3" fill="#e0a81c"/>
<rect x="574.4" y="268.2" width="1.3" height="1.3" fill="#e0a81c"/>
<rect x="561.9" y="275.2" width="1.3" height="1.3" fill="#d07424"/>
<rect x="557.0" y="267.7" width="1.3" height="1.3" fill="#d07424"/>
<rect x="527.4" y="282.4" width="1.3" height="1.3" fill="#e4d014"/>
<rect x="540.4" y="279.7" width="1.3" height="1.3" fill="#e4d014"/>
<rect x="569.8" y="266.5" width="1.3" height="1.3" fill="#d07424"/>
<rect x="543.2" y="268.5" width="1.3" height="1.3" fill="#e4d014"/>
<rect x="569.2" y="272.1" width="1.3" height="1.3" fill="#d07424"/>
<rect x="584.4" y="265.4" width="1.3" height="1.3" fill="#d07424"/>
<rect x="586.0" y="262.9" width="1.3" height="1.3" fill="#e0a81c"/>
<rect x="574.8" y="263.3" width="1.3" height="1.3" fill="#d07424"/>
<rect x="558.9" y="269.0" width="1.3" height="1.3" fill="#d07424"/>
<rect x="580.3" y="263.9" width="1.3" height="1.3" fill="#d07424"/>
<rect x="572.9" y="262.7" width="1.3" height="1.3" fill="#d07424"/>
<rect x="562.6" y="264.3" width="1.3" height="1.3" fill="#d07424"/>
<rect x="530.4" y="278.3" width="1.3" height="1.3" fill="#e4d014"/>
<rect x="559.2" y="276.4" width="1.3" height="1.3" fill="#d07424"/>
<rect x="552.1" y="269.2" width="1.3" height="1.3" fill="#d07424"/>
<rect x="555.9" y="278.0" width="1.3" height="1.3" fill="#d07424"/>
<rect x="553.3" y="274.1" width="1.3" height="1.3" fill="#e4d014"/>
<rect x="561.0" y="270.8" width="1.3" height="1.3" fill="#e0a81c"/>
<rect x="582.9" y="261.0" width="1.3" height="1.3" fill="#d07424"/>
<rect x="588.8" y="261.5" width="1.3" height="1.3" fill="#d07424"/>
<rect x="574.3" y="260.4" width="1.3" height="1.3" fill="#d07424"/>
<rect x="560.7" y="265.1" width="1.3" height="1.3" fill="#d07424"/>
<rect x="571.8" y="263.7" width="1.3" height="1.3" fill="#d07424"/>
<rect x="566.8" y="269.9" width="1.3" height="1.3" fill="#d07424"/>
<rect x="553.2" y="263.4" width="1.3" height="1.3" fill="#d07424"/>
<rect x="586.1" y="264.6" width="1.3" height="1.3" fill="#d07424"/>
<rect x="530.5" y="281.1" width="1.3" height="1.3" fill="#e4d014"/>
<rect x="553.6" y="263.7" width="1.3" height="1.3" fill="#d07424"/>
<rect x="562.1" y="272.1" width="1.3" height="1.3" fill="#d07424"/>
<rect x="566.9" y="269.5" width="1.3" height="1.3" fill="#d07424"/>
<rect x="528.9" y="288.0" width="1.3" height="1.3" fill="#d07424"/>
<rect x="529.4" y="284.6" width="1.3" height="1.3" fill="#d07424"/>
<rect x="530.6" y="282.6" width="1.3" height="1.3" fill="#e4d014"/>
<rect x="532.7" y="289.1" width="1.3" height="1.3" fill="#e0a81c"/>
<rect x="556.7" y="271.3" width="1.3" height="1.3" fill="#d07424"/>
<rect x="588.0" y="259.4" width="1.3" height="1.3" fill="#d07424"/>
<rect x="539.9" y="283.9" width="1.3" height="1.3" fill="#e4d014"/>
<rect x="551.9" y="269.1" width="1.3" height="1.3" fill="#e0a81c"/>
<rect x="542.2" y="281.1" width="1.3" height="1.3" fill="#e4d014"/>
<rect x="554.2" y="268.0" width="1.3" height="1.3" fill="#d07424"/>
<rect x="554.5" y="267.0" width="1.3" height="1.3" fill="#d07424"/>
<rect x="551.9" y="267.3" width="1.3" height="1.3" fill="#e4d014"/>
<rect x="554.7" y="269.8" width="1.3" height="1.3" fill="#e0a81c"/>
<rect x="554.6" y="268.1" width="1.3" height="1.3" fill="#e0a81c"/>
<rect x="587.5" y="263.4" width="1.3" height="1.3" fill="#d07424"/>
<rect x="568.3" y="269.8" width="1.3" height="1.3" fill="#d07424"/>
<rect x="571.6" y="271.1" width="1.3" height="1.3" fill="#d07424"/>
<rect x="568.1" y="265.9" width="1.3" height="1.3" fill="#d07424"/>
<rect x="540.2" y="281.9" width="1.3" height="1.3" fill="#e4d014"/>
<rect x="587.7" y="260.7" width="1.3" height="1.3" fill="#d07424"/>
<rect x="527.1" y="285.8" width="1.3" height="1.3" fill="#e4d014"/>
<rect x="542.3" y="277.6" width="1.3" height="1.3" fill="#d07424"/>
<rect x="551.1" y="280.8" width="1.3" height="1.3" fill="#d07424"/>
<rect x="583.5" y="259.5" width="1.3" height="1.3" fill="#d07424"/>
<rect x="577.7" y="267.5" width="1.3" height="1.3" fill="#d07424"/>
<rect x="563.2" y="271.2" width="1.3" height="1.3" fill="#d07424"/>
<rect x="573.0" y="266.4" width="1.3" height="1.3" fill="#d07424"/>
<rect x="570.4" y="266.9" width="1.3" height="1.3" fill="#d07424"/>
<rect x="588.2" y="259.4" width="1.3" height="1.3" fill="#d07424"/>
<rect x="546.5" y="277.4" width="1.3" height="1.3" fill="#e0a81c"/>
<rect x="543.3" y="276.0" width="1.3" height="1.3" fill="#e4d014"/>
<rect x="557.2" y="264.0" width="1.3" height="1.3" fill="#d07424"/>
<rect x="582.3" y="264.3" width="1.3" height="1.3" fill="#d07424"/>
<rect x="576.8" y="263.7" width="1.3" height="1.3" fill="#d07424"/>
<rect x="564.2" y="267.2" width="1.3" height="1.3" fill="#d07424"/>
<rect x="588.4" y="261.8" width="1.3" height="1.3" fill="#e0a81c"/>
<rect x="548.2" y="277.4" width="1.3" height="1.3" fill="#d07424"/>
<rect x="544.9" y="277.5" width="1.3" height="1.3" fill="#e4d014"/>
<rect x="578.2" y="263.0" width="1.3" height="1.3" fill="#d07424"/>
<rect x="548.6" y="272.7" width="1.3" height="1.3" fill="#d07424"/>
<rect x="549.6" y="274.8" width="1.3" height="1.3" fill="#d07424"/>
<rect x="545.6" y="280.9" width="1.3" height="1.3" fill="#e0a81c"/>
<rect x="541.7" y="269.7" width="1.3" height="1.3" fill="#d07424"/>
<rect x="531.4" y="287.6" width="1.3" height="1.3" fill="#e4d014"/>
<rect x="542.7" y="274.9" width="1.3" height="1.3" fill="#e4d014"/>
<rect x="527.8" y="290.0" width="1.3" height="1.3" fill="#e0a81c"/>
<rect x="539.3" y="281.3" width="1.3" height="1.3" fill="#e4d014"/>
<rect x="547.2" y="280.2" width="1.3" height="1.3" fill="#d07424"/>
<rect x="555.9" y="266.7" width="1.3" height="1.3" fill="#d07424"/>
<rect x="577.2" y="265.1" width="1.3" height="1.3" fill="#d07424"/>
<rect x="588.2" y="259.9" width="1.3" height="1.3" fill="#d07424"/>
<rect x="565.0" y="262.6" width="1.3" height="1.3" fill="#e0a81c"/>
<rect x="547.5" y="271.0" width="1.3" height="1.3" fill="#d07424"/>
<rect x="578.1" y="268.0" width="1.3" height="1.3" fill="#d07424"/>
<rect x="536.8" y="277.1" width="1.3" height="1.3" fill="#e4d014"/>
<rect x="539.6" y="284.3" width="1.3" height="1.3" fill="#e0a81c"/>
<rect x="540.3" y="274.4" width="1.3" height="1.3" fill="#d07424"/>
<rect x="571.3" y="260.6" width="1.3" height="1.3" fill="#d07424"/>
<rect x="529.9" y="289.0" width="1.3" height="1.3" fill="#e4d014"/>
<rect x="562.7" y="262.1" width="1.3" height="1.3" fill="#d07424"/>
<rect x="548.2" y="282.0" width="1.3" height="1.3" fill="#e4d014"/>
<rect x="580.3" y="259.8" width="1.3" height="1.3" fill="#d07424"/>
<rect x="527.3" y="288.8" width="1.3" height="1.3" fill="#d07424"/>
<rect x="543.2" y="278.1" width="1.3" height="1.3" fill="#e4d014"/>
<rect x="546.3" y="271.9" width="1.3" height="1.3" fill="#d07424"/>
<rect x="561.4" y="266.3" width="1.3" height="1.3" fill="#d07424"/>
<rect x="541.7" y="271.9" width="1.3" height="1.3" fill="#d07424"/>
<rect x="527.0" y="284.6" width="1.3" height="1.3" fill="#e4d014"/>
<rect x="542.9" y="267.3" width="1.3" height="1.3" fill="#e0a81c"/>
<rect x="555.6" y="270.3" width="1.3" height="1.3" fill="#d07424"/>
<rect x="581.9" y="265.2" width="1.3" height="1.3" fill="#d07424"/>
<rect x="567.5" y="269.5" width="1.3" height="1.3" fill="#d07424"/>
<rect x="552.0" y="268.9" width="1.3" height="1.3" fill="#d07424"/>
<rect x="555.5" y="270.6" width="1.3" height="1.3" fill="#d07424"/>
<rect x="575.7" y="268.8" width="1.3" height="1.3" fill="#d07424"/>
<rect x="527.4" y="284.1" width="1.3" height="1.3" fill="#d07424"/>
<rect x="576.2" y="265.9" width="1.3" height="1.3" fill="#d07424"/>
<rect x="538.0" y="284.9" width="1.3" height="1.3" fill="#e0a81c"/>
<rect x="569.1" y="268.9" width="1.3" height="1.3" fill="#d07424"/>
<rect x="554.6" y="268.5" width="1.3" height="1.3" fill="#d07424"/>
<rect x="581.5" y="267.3" width="1.3" height="1.3" fill="#e0a81c"/>
<rect x="578.6" y="260.1" width="1.3" height="1.3" fill="#d07424"/>
<rect x="587.2" y="262.0" width="1.3" height="1.3" fill="#d07424"/>
<rect x="545.5" y="280.7" width="1.3" height="1.3" fill="#d07424"/>
<rect x="588.4" y="259.1" width="1.3" height="1.3" fill="#e0a81c"/>
<rect x="526.8" y="282.9" width="1.3" height="1.3" fill="#e4d014"/>
<rect x="566.3" y="261.9" width="1.3" height="1.3" fill="#d07424"/>
<rect x="585.2" y="261.9" width="1.3" height="1.3" fill="#d07424"/>
<rect x="563.3" y="269.2" width="1.3" height="1.3" fill="#d07424"/>
<rect x="555.2" y="277.2" width="1.3" height="1.3" fill="#d07424"/>
<rect x="539.7" y="276.4" width="1.3" height="1.3" fill="#e4d014"/>
<rect x="547.2" y="274.0" width="1.3" height="1.3" fill="#e4d014"/>
<rect x="527.1" y="283.4" width="1.3" height="1.3" fill="#e4d014"/>
<rect x="539.5" y="269.8" width="1.3" height="1.3" fill="#e4d014"/>
<rect x="547.0" y="282.0" width="1.3" height="1.3" fill="#d07424"/>
<rect x="532.4" y="284.7" width="1.3" height="1.3" fill="#d07424"/>
<rect x="577.3" y="266.5" width="1.3" height="1.3" fill="#d07424"/>
<rect x="529.6" y="278.8" width="1.3" height="1.3" fill="#e4d014"/>
<rect x="534.9" y="276.3" width="1.3" height="1.3" fill="#d07424"/>
<rect x="536.3" y="279.4" width="1.3" height="1.3" fill="#e0a81c"/>
<rect x="546.2" y="267.5" width="1.3" height="1.3" fill="#e0a81c"/>
<rect x="537.6" y="281.2" width="1.3" height="1.3" fill="#e4d014"/>
<rect x="584.9" y="259.2" width="1.3" height="1.3" fill="#d07424"/>
<rect x="550.1" y="277.9" width="1.3" height="1.3" fill="#d07424"/>
<rect x="571.0" y="262.2" width="1.3" height="1.3" fill="#d07424"/>
<rect x="587.0" y="260.2" width="1.3" height="1.3" fill="#d07424"/>
<rect x="583.8" y="263.9" width="1.3" height="1.3" fill="#d07424"/>
<rect x="537.7" y="274.3" width="1.3" height="1.3" fill="#d07424"/>
<rect x="579.2" y="265.7" width="1.3" height="1.3" fill="#e0a81c"/>
<rect x="568.2" y="268.4" width="1.3" height="1.3" fill="#d07424"/>
<rect x="571.2" y="265.9" width="1.3" height="1.3" fill="#d07424"/>
<rect x="557.0" y="267.7" width="1.3" height="1.3" fill="#d07424"/>
<rect x="529.1" y="279.3" width="1.3" height="1.3" fill="#e0a81c"/>
<rect x="549.4" y="268.3" width="1.3" height="1.3" fill="#d07424"/>
<rect x="563.3" y="274.1" width="1.3" height="1.3" fill="#d07424"/>
<rect x="557.5" y="269.5" width="1.3" height="1.3" fill="#d07424"/>
<rect x="561.6" y="264.4" width="1.3" height="1.3" fill="#d07424"/>
<rect x="571.7" y="260.9" width="1.3" height="1.3" fill="#e0a81c"/>
<rect x="528.1" y="282.2" width="1.3" height="1.3" fill="#e4d014"/>
<rect x="579.2" y="264.9" width="1.3" height="1.3" fill="#d07424"/>
<rect x="573.9" y="267.7" width="1.3" height="1.3" fill="#d07424"/>
<rect x="578.0" y="260.9" width="1.3" height="1.3" fill="#d07424"/>
<rect x="528.4" y="280.0" width="1.3" height="1.3" fill="#e0a81c"/>
<rect x="550.0" y="263.4" width="1.3" height="1.3" fill="#d07424"/>
<rect x="579.3" y="264.7" width="1.3" height="1.3" fill="#e0a81c"/>
<rect x="528.4" y="281.0" width="1.3" height="1.3" fill="#e4d014"/>
<rect x="538.0" y="271.9" width="1.3" height="1.3" fill="#d07424"/>
<rect x="566.3" y="262.7" width="1.3" height="1.3" fill="#d07424"/>
<rect x="559.7" y="267.0" width="1.3" height="1.3" fill="#d07424"/>
<rect x="561.8" y="268.5" width="1.3" height="1.3" fill="#d07424"/>
<rect x="555.9" y="261.9" width="1.3" height="1.3" fill="#d07424"/>
<rect x="538.2" y="275.6" width="1.3" height="1.3" fill="#d07424"/>
<rect x="581.9" y="263.9" width="1.3" height="1.3" fill="#d07424"/>
<rect x="560.1" y="275.9" width="1.3" height="1.3" fill="#d07424"/>
<rect x="550.2" y="275.6" width="1.3" height="1.3" fill="#d07424"/>
<rect x="570.5" y="271.1" width="1.3" height="1.3" fill="#d07424"/>
<rect x="543.9" y="270.0" width="1.3" height="1.3" fill="#e4d014"/>
<rect x="575.4" y="266.9" width="1.3" height="1.3" fill="#e0a81c"/>
<rect x="537.7" y="277.0" width="1.3" height="1.3" fill="#e0a81c"/>
<rect x="574.2" y="261.0" width="1.3" height="1.3" fill="#e0a81c"/>
<rect x="572.7" y="269.7" width="1.3" height="1.3" fill="#d07424"/>
<rect x="564.1" y="274.4" width="1.3" height="1.3" fill="#e0a81c"/>
<rect x="562.4" y="274.2" width="1.3" height="1.3" fill="#e0a81c"/>
<rect x="578.9" y="265.4" width="1.3" height="1.3" fill="#e0a81c"/>
<rect x="535.1" y="279.3" width="1.3" height="1.3" fill="#e4d014"/>
<rect x="534.3" y="285.7" width="1.3" height="1.3" fill="#d07424"/>
<rect x="565.6" y="264.3" width="1.3" height="1.3" fill="#d07424"/>
<rect x="564.2" y="263.3" width="1.3" height="1.3" fill="#d07424"/>
<rect x="580.0" y="267.9" width="1.3" height="1.3" fill="#d07424"/>
<rect x="549.0" y="275.7" width="1.3" height="1.3" fill="#d07424"/>
<rect x="579.5" y="261.1" width="1.3" height="1.3" fill="#d07424"/>
<rect x="547.4" y="261.9" width="1.3" height="1.3" fill="#d07424"/>
<rect x="526.1" y="285.5" width="1.3" height="1.3" fill="#e4d014"/>
<rect x="588.5" y="262.2" width="1.3" height="1.3" fill="#d07424"/>
<rect x="571.1" y="262.8" width="1.3" height="1.3" fill="#d07424"/>
<rect x="571.5" y="270.1" width="1.3" height="1.3" fill="#e0a81c"/>
<rect x="552.5" y="267.4" width="1.3" height="1.3" fill="#d07424"/>
<rect x="545.7" y="278.0" width="1.3" height="1.3" fill="#d07424"/>
<rect x="576.1" y="260.5" width="1.2" height="1.2" fill="#d07424"/>
<rect x="554.5" y="260.4" width="1.2" height="1.2" fill="#c88c80"/>
<rect x="564.2" y="261.1" width="1.2" height="1.2" fill="#d8a0a0"/>
<rect x="575.2" y="259.6" width="1.2" height="1.2" fill="#c88c80"/>
<rect x="546.5" y="261.2" width="1.2" height="1.2" fill="#d8a0a0"/>
<rect x="569.9" y="259.4" width="1.2" height="1.2" fill="#c88c80"/>
<rect x="574.0" y="259.8" width="1.2" height="1.2" fill="#c88c80"/>
<rect x="553.6" y="261.0" width="1.2" height="1.2" fill="#c88c80"/>
<rect x="572.2" y="259.3" width="1.2" height="1.2" fill="#c88c80"/>
<rect x="574.7" y="258.4" width="1.2" height="1.2" fill="#d8a0a0"/>
<rect x="571.6" y="259.2" width="1.2" height="1.2" fill="#d07424"/>
<rect x="558.5" y="259.6" width="1.2" height="1.2" fill="#c88c80"/>
<rect x="546.0" y="261.0" width="1.2" height="1.2" fill="#d8a0a0"/>
<rect x="567.7" y="260.0" width="1.2" height="1.2" fill="#c88c80"/>
<rect x="571.3" y="258.1" width="1.2" height="1.2" fill="#d07424"/>
<rect x="557.8" y="260.6" width="1.2" height="1.2" fill="#d07424"/>
<rect x="563.6" y="259.9" width="1.2" height="1.2" fill="#c88c80"/>
<rect x="565.1" y="261.9" width="1.2" height="1.2" fill="#c88c80"/>
<rect x="564.0" y="260.6" width="1.2" height="1.2" fill="#c88c80"/>
<rect x="551.7" y="261.1" width="1.2" height="1.2" fill="#d07424"/>
<rect x="565.0" y="260.7" width="1.2" height="1.2" fill="#d07424"/>
<rect x="556.4" y="260.7" width="1.2" height="1.2" fill="#c88c80"/>
<rect x="552.5" y="261.7" width="1.2" height="1.2" fill="#d8a0a0"/>
<rect x="548.6" y="260.5" width="1.2" height="1.2" fill="#c88c80"/>
<rect x="573.4" y="260.2" width="1.2" height="1.2" fill="#c88c80"/>
<rect x="552.2" y="260.4" width="1.2" height="1.2" fill="#c88c80"/>
<rect x="572.8" y="259.9" width="1.2" height="1.2" fill="#d07424"/>
<rect x="555.7" y="260.8" width="1.2" height="1.2" fill="#c88c80"/>
<rect x="559.3" y="260.2" width="1.2" height="1.2" fill="#d8a0a0"/>
<rect x="550.5" y="260.2" width="1.2" height="1.2" fill="#d8a0a0"/>
<rect x="559.6" y="259.1" width="1.2" height="1.2" fill="#d07424"/>
<rect x="547.4" y="260.9" width="1.2" height="1.2" fill="#d8a0a0"/>
<rect x="587.2" y="258.8" width="1.2" height="1.2" fill="#d8a0a0"/>
<rect x="560.1" y="261.2" width="1.2" height="1.2" fill="#d07424"/>
<rect x="559.7" y="260.8" width="1.2" height="1.2" fill="#d8a0a0"/>
<rect x="566.1" y="260.3" width="1.2" height="1.2" fill="#c88c80"/>
<rect x="580.7" y="259.4" width="1.2" height="1.2" fill="#c88c80"/>
<rect x="562.6" y="261.7" width="1.2" height="1.2" fill="#d8a0a0"/>
<rect x="551.3" y="260.0" width="1.2" height="1.2" fill="#d8a0a0"/>
<rect x="578.2" y="258.7" width="1.2" height="1.2" fill="#d07424"/>
<rect x="570.4" y="258.2" width="1.4" height="1.4" fill="#b4dc22"/>
<rect x="568.9" y="258.2" width="1.4" height="1.4" fill="#b4dc22"/>
<rect x="586.7" y="257.8" width="1.4" height="1.4" fill="#e4d014"/>
<rect x="569.7" y="258.3" width="1.4" height="1.4" fill="#b4dc22"/>
<rect x="559.9" y="257.6" width="1.4" height="1.4" fill="#b4dc22"/>
<rect x="569.8" y="258.7" width="1.4" height="1.4" fill="#b4dc22"/>
<rect x="588.4" y="258.6" width="1.4" height="1.4" fill="#e4d014"/>
<rect x="564.4" y="258.3" width="1.4" height="1.4" fill="#b4dc22"/>
<rect x="563.1" y="259.0" width="1.4" height="1.4" fill="#b4dc22"/>
<rect x="582.9" y="258.6" width="1.4" height="1.4" fill="#e4d014"/>
<rect x="567.8" y="258.7" width="1.4" height="1.4" fill="#b4dc22"/>
<rect x="584.5" y="258.4" width="1.4" height="1.4" fill="#b4dc22"/>
<rect x="577.5" y="258.6" width="1.4" height="1.4" fill="#b4dc22"/>
<rect x="569.1" y="258.5" width="1.4" height="1.4" fill="#e4d014"/>
<rect x="587.0" y="258.3" width="1.4" height="1.4" fill="#e4d014"/>
<rect x="559.1" y="258.5" width="1.4" height="1.4" fill="#b4dc22"/>
<rect x="571.6" y="259.7" width="1.4" height="1.4" fill="#b4dc22"/>
<rect x="589.0" y="258.2" width="1.4" height="1.4" fill="#b4dc22"/>
<rect x="573.1" y="257.8" width="1.4" height="1.4" fill="#b4dc22"/>
<rect x="574.6" y="258.8" width="1.4" height="1.4" fill="#b4dc22"/>
<rect x="580.1" y="258.1" width="1.4" height="1.4" fill="#e4d014"/>
<rect x="559.4" y="258.7" width="1.4" height="1.4" fill="#b4dc22"/>
<rect x="590.3" y="258.9" width="1.4" height="1.4" fill="#b4dc22"/>
<rect x="576.2" y="259.3" width="1.4" height="1.4" fill="#b4dc22"/>
<rect x="586.4" y="258.4" width="1.4" height="1.4" fill="#b4dc22"/>
<rect x="559.5" y="258.5" width="1.4" height="1.4" fill="#b4dc22"/>
<rect x="583.1" y="258.1" width="1.4" height="1.4" fill="#b4dc22"/>
<rect x="574.9" y="259.0" width="1.4" height="1.4" fill="#b4dc22"/>
<rect x="580.5" y="258.6" width="1.4" height="1.4" fill="#b4dc22"/>
<rect x="575.2" y="258.5" width="1.4" height="1.4" fill="#e4d014"/>
<rect x="585.9" y="258.6" width="1.4" height="1.4" fill="#e4d014"/>
<rect x="591.5" y="259.1" width="1.4" height="1.4" fill="#e4d014"/>
<rect x="589.8" y="258.6" width="1.4" height="1.4" fill="#b4dc22"/>
<rect x="565.1" y="258.0" width="1.4" height="1.4" fill="#b4dc22"/>
<rect x="560.4" y="258.8" width="1.4" height="1.4" fill="#b4dc22"/>
<rect x="582.0" y="258.0" width="1.4" height="1.4" fill="#b4dc22"/>
<rect x="572.5" y="258.9" width="1.4" height="1.4" fill="#b4dc22"/>
<rect x="581.3" y="259.0" width="1.4" height="1.4" fill="#b4dc22"/>
<rect x="557.3" y="258.9" width="1.4" height="1.4" fill="#b4dc22"/>
<rect x="557.9" y="259.1" width="1.4" height="1.4" fill="#e4d014"/>
<rect x="556.9" y="259.0" width="1.4" height="1.4" fill="#b4dc22"/>
<rect x="560.2" y="258.1" width="1.4" height="1.4" fill="#b4dc22"/>
<rect x="562.4" y="258.6" width="1.4" height="1.4" fill="#e4d014"/>
<rect x="564.2" y="257.8" width="1.4" height="1.4" fill="#b4dc22"/>
<rect x="562.5" y="259.3" width="1.4" height="1.4" fill="#b4dc22"/>
<rect x="566.5" y="258.7" width="1.4" height="1.4" fill="#b4dc22"/>
<rect x="584.5" y="259.3" width="1.4" height="1.4" fill="#e4d014"/>
<rect x="578.7" y="258.2" width="1.4" height="1.4" fill="#b4dc22"/>
<rect x="591.9" y="259.2" width="1.4" height="1.4" fill="#b4dc22"/>
<rect x="566.1" y="258.8" width="1.4" height="1.4" fill="#b4dc22"/>
<rect x="564.1" y="258.0" width="1.4" height="1.4" fill="#b4dc22"/>
<rect x="557.7" y="259.0" width="1.4" height="1.4" fill="#b4dc22"/>
<rect x="589.2" y="257.9" width="1.4" height="1.4" fill="#b4dc22"/>
<rect x="564.8" y="258.1" width="1.4" height="1.4" fill="#b4dc22"/>
<rect x="558.7" y="258.7" width="1.4" height="1.4" fill="#b4dc22"/>
<rect x="570.1" y="258.4" width="1.4" height="1.4" fill="#b4dc22"/>
<rect x="580.0" y="258.9" width="1.4" height="1.4" fill="#b4dc22"/>
<rect x="566.1" y="258.7" width="1.4" height="1.4" fill="#b4dc22"/>
<rect x="560.6" y="258.7" width="1.4" height="1.4" fill="#b4dc22"/>
<rect x="587.3" y="258.8" width="1.4" height="1.4" fill="#b4dc22"/>
<rect x="557.5" y="259.1" width="1.4" height="1.4" fill="#b4dc22"/>
<rect x="573.3" y="259.1" width="1.4" height="1.4" fill="#b4dc22"/>
<rect x="585.0" y="257.6" width="1.4" height="1.4" fill="#b4dc22"/>
<rect x="579.7" y="258.6" width="1.4" height="1.4" fill="#b4dc22"/>
<rect x="575.3" y="257.7" width="1.4" height="1.4" fill="#b4dc22"/>
<rect x="582.6" y="258.0" width="1.4" height="1.4" fill="#e4d014"/>
<rect x="557.4" y="258.7" width="1.4" height="1.4" fill="#e4d014"/>
<rect x="561.7" y="258.5" width="1.4" height="1.4" fill="#e4d014"/>
<rect x="573.6" y="258.1" width="1.4" height="1.4" fill="#e4d014"/>
<rect x="556.4" y="259.3" width="1.4" height="1.4" fill="#e4d014"/>
<rect x="584.0" y="258.6" width="1.4" height="1.4" fill="#b4dc22"/>
<rect x="583.3" y="258.8" width="1.4" height="1.4" fill="#b4dc22"/>
<rect x="556.8" y="258.6" width="1.4" height="1.4" fill="#b4dc22"/>
<rect x="588.1" y="258.3" width="1.4" height="1.4" fill="#b4dc22"/>
<rect x="565.7" y="258.4" width="1.4" height="1.4" fill="#b4dc22"/>
<rect x="570.3" y="258.6" width="1.4" height="1.4" fill="#b4dc22"/>
<rect x="590.7" y="258.0" width="1.4" height="1.4" fill="#e4d014"/>
<rect x="564.2" y="259.1" width="1.4" height="1.4" fill="#b4dc22"/>
<rect x="577.0" y="259.6" width="1.4" height="1.4" fill="#b4dc22"/>
<rect x="557.0" y="258.8" width="1.4" height="1.4" fill="#b4dc22"/>
<rect x="586.6" y="258.5" width="1.4" height="1.4" fill="#b4dc22"/>
<rect x="584.6" y="258.2" width="1.4" height="1.4" fill="#b4dc22"/>
<rect x="591.5" y="258.3" width="1.4" height="1.4" fill="#b4dc22"/>
<rect x="582.9" y="257.9" width="1.4" height="1.4" fill="#b4dc22"/>
<rect x="574.7" y="258.2" width="1.4" height="1.4" fill="#b4dc22"/>
<rect x="561.6" y="258.5" width="1.4" height="1.4" fill="#b4dc22"/>
<rect x="591.5" y="258.1" width="1.4" height="1.4" fill="#e4d014"/>
<rect x="586.8" y="257.9" width="1.4" height="1.4" fill="#b4dc22"/>
<rect x="582.8" y="257.7" width="1.4" height="1.4" fill="#b4dc22"/>
<rect x="558.1" y="258.1" width="1.4" height="1.4" fill="#e4d014"/>
<rect x="619.2" y="258.2" width="1.4" height="1.4" fill="#b4dc22"/>
<rect x="612.8" y="258.7" width="1.4" height="1.4" fill="#b4dc22"/>
<rect x="617.7" y="257.3" width="1.4" height="1.4" fill="#b4dc22"/>
<rect x="601.9" y="258.7" width="1.4" height="1.4" fill="#b4dc22"/>
<rect x="600.8" y="258.5" width="1.4" height="1.4" fill="#b4dc22"/>
<rect x="603.1" y="258.9" width="1.4" height="1.4" fill="#b4dc22"/>
<rect x="618.0" y="258.0" width="1.4" height="1.4" fill="#e4d014"/>
<rect x="611.3" y="257.6" width="1.4" height="1.4" fill="#b4dc22"/>
<rect x="606.1" y="258.7" width="1.4" height="1.4" fill="#b4dc22"/>
<rect x="613.6" y="257.8" width="1.4" height="1.4" fill="#b4dc22"/>
<rect x="616.6" y="257.9" width="1.4" height="1.4" fill="#e4d014"/>
<rect x="608.7" y="258.4" width="1.4" height="1.4" fill="#b4dc22"/>
<rect x="616.7" y="257.8" width="1.4" height="1.4" fill="#b4dc22"/>
<rect x="615.3" y="257.2" width="1.4" height="1.4" fill="#b4dc22"/>
<rect x="617.0" y="256.7" width="1.4" height="1.4" fill="#b4dc22"/>
<rect x="617.7" y="258.1" width="1.4" height="1.4" fill="#b4dc22"/>
<rect x="606.2" y="258.4" width="1.4" height="1.4" fill="#b4dc22"/>
<rect x="613.5" y="258.4" width="1.4" height="1.4" fill="#b4dc22"/>
<rect x="600.4" y="258.3" width="1.4" height="1.4" fill="#e4d014"/>
<rect x="605.8" y="258.4" width="1.4" height="1.4" fill="#b4dc22"/>
<rect x="603.4" y="258.5" width="1.4" height="1.4" fill="#e4d014"/>
<rect x="603.9" y="258.5" width="1.4" height="1.4" fill="#b4dc22"/>
<rect x="610.1" y="258.4" width="1.4" height="1.4" fill="#b4dc22"/>
<rect x="616.0" y="257.4" width="1.4" height="1.4" fill="#b4dc22"/>
<rect x="617.1" y="257.9" width="1.4" height="1.4" fill="#b4dc22"/>
<rect x="615.2" y="257.0" width="1.4" height="1.4" fill="#e4d014"/>
<rect x="600.9" y="258.2" width="1.4" height="1.4" fill="#b4dc22"/>
<rect x="601.5" y="258.4" width="1.4" height="1.4" fill="#b4dc22"/>
<rect x="619.5" y="258.1" width="1.4" height="1.4" fill="#b4dc22"/>
<rect x="603.8" y="258.8" width="1.4" height="1.4" fill="#b4dc22"/>
<rect x="604.5" y="257.6" width="1.4" height="1.4" fill="#e4d014"/>
<rect x="617.9" y="257.9" width="1.4" height="1.4" fill="#e4d014"/>
<rect x="599.8" y="258.5" width="1.4" height="1.4" fill="#b4dc22"/>
<rect x="619.4" y="258.5" width="1.4" height="1.4" fill="#b4dc22"/>
<rect x="598.1" y="258.4" width="1.4" height="1.4" fill="#e4d014"/>
<rect x="615.5" y="258.1" width="1.4" height="1.4" fill="#b4dc22"/>
<rect x="613.9" y="258.3" width="1.4" height="1.4" fill="#e4d014"/>
<rect x="613.5" y="258.7" width="1.4" height="1.4" fill="#b4dc22"/>
<rect x="605.3" y="257.8" width="1.4" height="1.4" fill="#b4dc22"/>
<rect x="609.5" y="258.6" width="1.4" height="1.4" fill="#e4d014"/>
<rect x="605.7" y="258.0" width="1.4" height="1.4" fill="#b4dc22"/>
<rect x="598.8" y="258.4" width="1.4" height="1.4" fill="#e4d014"/>
<rect x="611.2" y="258.3" width="1.4" height="1.4" fill="#b4dc22"/>
<rect x="610.7" y="257.5" width="1.4" height="1.4" fill="#b4dc22"/>
<rect x="603.2" y="258.7" width="1.4" height="1.4" fill="#b4dc22"/>
<rect x="608.5" y="258.5" width="1.4" height="1.4" fill="#e4d014"/>
<rect x="605.2" y="257.9" width="1.4" height="1.4" fill="#b4dc22"/>
<rect x="597.9" y="258.0" width="1.4" height="1.4" fill="#b4dc22"/>
<rect x="613.5" y="258.9" width="1.4" height="1.4" fill="#e4d014"/>
<rect x="614.0" y="258.4" width="1.4" height="1.4" fill="#e4d014"/>
<rect x="618.6" y="257.8" width="1.4" height="1.4" fill="#b4dc22"/>
<rect x="606.3" y="258.3" width="1.4" height="1.4" fill="#b4dc22"/>
<rect x="599.2" y="258.3" width="1.4" height="1.4" fill="#b4dc22"/>
<rect x="606.0" y="258.8" width="1.4" height="1.4" fill="#b4dc22"/>
<rect x="612.9" y="258.5" width="1.4" height="1.4" fill="#b4dc22"/>
<rect x="607.8" y="258.0" width="1.4" height="1.4" fill="#e4d014"/>
<rect x="602.7" y="258.9" width="1.4" height="1.4" fill="#b4dc22"/>
<rect x="609.5" y="258.1" width="1.4" height="1.4" fill="#e4d014"/>
<rect x="613.3" y="258.5" width="1.4" height="1.4" fill="#b4dc22"/>
<rect x="604.0" y="258.4" width="1.4" height="1.4" fill="#b4dc22"/>
<rect x="617.5" y="260.6" width="1.2" height="1.2" fill="#ececee"/>
<rect x="639.3" y="263.9" width="1.2" height="1.2" fill="#ececee"/>
<rect x="616.4" y="272.9" width="1.2" height="1.2" fill="#ececee"/>
<rect x="630.5" y="267.4" width="1.2" height="1.2" fill="#ececee"/>
<rect x="600.2" y="262.0" width="1.2" height="1.2" fill="#ececee"/>
<rect x="633.7" y="264.1" width="1.2" height="1.2" fill="#ececee"/>
<rect x="604.8" y="271.1" width="1.2" height="1.2" fill="#ececee"/>
<rect x="605.6" y="270.0" width="1.2" height="1.2" fill="#ececee"/>
<rect x="633.6" y="265.5" width="1.2" height="1.2" fill="#ececee"/>
<rect x="612.8" y="261.9" width="1.2" height="1.2" fill="#d8a0a0"/>
<rect x="601.2" y="276.3" width="1.2" height="1.2" fill="#ececee"/>
<rect x="634.0" y="263.3" width="1.2" height="1.2" fill="#d8a0a0"/>
<rect x="635.1" y="265.1" width="1.2" height="1.2" fill="#ececee"/>
<rect x="609.1" y="265.3" width="1.2" height="1.2" fill="#ececee"/>
<rect x="632.1" y="263.6" width="1.2" height="1.2" fill="#d8a0a0"/>
<rect x="612.2" y="266.2" width="1.2" height="1.2" fill="#d8a0a0"/>
<rect x="640.7" y="263.1" width="1.2" height="1.2" fill="#ececee"/>
<rect x="638.8" y="261.6" width="1.2" height="1.2" fill="#d8a0a0"/>
<rect x="602.7" y="272.2" width="1.2" height="1.2" fill="#ececee"/>
<rect x="621.2" y="261.7" width="1.2" height="1.2" fill="#d8a0a0"/>
<rect x="602.7" y="268.2" width="1.2" height="1.2" fill="#ececee"/>
<rect x="617.5" y="270.4" width="1.2" height="1.2" fill="#ececee"/>
<rect x="635.8" y="262.8" width="1.2" height="1.2" fill="#ececee"/>
<rect x="602.3" y="274.4" width="1.2" height="1.2" fill="#ececee"/>
<rect x="617.1" y="261.8" width="1.2" height="1.2" fill="#d8a0a0"/>
<rect x="602.6" y="261.8" width="1.2" height="1.2" fill="#ececee"/>
<rect x="617.8" y="261.7" width="1.2" height="1.2" fill="#d8a0a0"/>
<rect x="625.6" y="268.4" width="1.2" height="1.2" fill="#ececee"/>
<rect x="606.7" y="264.4" width="1.2" height="1.2" fill="#d8a0a0"/>
<rect x="624.6" y="266.5" width="1.2" height="1.2" fill="#ececee"/>
<rect x="602.0" y="263.3" width="1.2" height="1.2" fill="#ececee"/>
<rect x="635.5" y="265.6" width="1.2" height="1.2" fill="#ececee"/>
<rect x="610.9" y="260.5" width="1.2" height="1.2" fill="#d8a0a0"/>
<rect x="617.2" y="271.9" width="1.2" height="1.2" fill="#ececee"/>
<rect x="608.6" y="260.0" width="1.2" height="1.2" fill="#ececee"/>
<rect x="633.9" y="265.7" width="1.2" height="1.2" fill="#ececee"/>
<rect x="600.6" y="270.7" width="1.2" height="1.2" fill="#ececee"/>
<rect x="625.8" y="268.7" width="1.2" height="1.2" fill="#ececee"/>
<rect x="611.8" y="268.9" width="1.2" height="1.2" fill="#ececee"/>
<rect x="631.9" y="262.1" width="1.2" height="1.2" fill="#d8a0a0"/>
<rect x="628.5" y="267.7" width="1.2" height="1.2" fill="#ececee"/>
<rect x="640.1" y="262.6" width="1.2" height="1.2" fill="#ececee"/>
<rect x="627.2" y="262.9" width="1.2" height="1.2" fill="#ececee"/>
<rect x="601.7" y="271.2" width="1.2" height="1.2" fill="#ececee"/>
<rect x="604.2" y="273.6" width="1.2" height="1.2" fill="#ececee"/>
<rect x="631.7" y="262.2" width="1.2" height="1.2" fill="#ececee"/>
<rect x="639.2" y="263.9" width="1.2" height="1.2" fill="#ececee"/>
<rect x="641.2" y="262.5" width="1.2" height="1.2" fill="#ececee"/>
<rect x="626.1" y="265.6" width="1.2" height="1.2" fill="#ececee"/>
<rect x="615.9" y="267.5" width="1.2" height="1.2" fill="#ececee"/>
<rect x="627.0" y="267.9" width="1.2" height="1.2" fill="#ececee"/>
<rect x="609.5" y="260.2" width="1.2" height="1.2" fill="#d8a0a0"/>
<rect x="618.2" y="270.5" width="1.2" height="1.2" fill="#ececee"/>
<rect x="621.8" y="266.7" width="1.2" height="1.2" fill="#ececee"/>
<rect x="628.5" y="264.9" width="1.2" height="1.2" fill="#ececee"/>
<rect x="609.9" y="261.7" width="1.2" height="1.2" fill="#d8a0a0"/>
<rect x="637.2" y="265.0" width="1.2" height="1.2" fill="#ececee"/>
<rect x="624.1" y="265.3" width="1.2" height="1.2" fill="#ececee"/>
<rect x="607.5" y="272.9" width="1.2" height="1.2" fill="#ececee"/>
<rect x="609.6" y="264.2" width="1.2" height="1.2" fill="#ececee"/>
<rect x="608.1" y="261.0" width="1.2" height="1.2" fill="#d8a0a0"/>
<rect x="607.2" y="270.5" width="1.2" height="1.2" fill="#ececee"/>
<rect x="626.2" y="264.6" width="1.2" height="1.2" fill="#ececee"/>
<rect x="612.4" y="266.7" width="1.2" height="1.2" fill="#ececee"/>
<rect x="609.0" y="271.6" width="1.2" height="1.2" fill="#ececee"/>
<rect x="640.9" y="262.6" width="1.2" height="1.2" fill="#ececee"/>
<rect x="632.3" y="262.3" width="1.2" height="1.2" fill="#ececee"/>
<rect x="618.2" y="269.1" width="1.2" height="1.2" fill="#ececee"/>
<rect x="607.8" y="275.6" width="1.2" height="1.2" fill="#ececee"/>
<rect x="620.8" y="271.4" width="1.2" height="1.2" fill="#ececee"/>
<rect x="616.2" y="261.0" width="1.2" height="1.2" fill="#ececee"/>
<rect x="624.8" y="267.2" width="1.2" height="1.2" fill="#ececee"/>
<rect x="632.9" y="263.2" width="1.2" height="1.2" fill="#ececee"/>
<rect x="625.4" y="266.2" width="1.2" height="1.2" fill="#ececee"/>
<rect x="628.0" y="265.0" width="1.2" height="1.2" fill="#ececee"/>
<rect x="628.3" y="266.1" width="1.2" height="1.2" fill="#ececee"/>
<rect x="640.7" y="262.2" width="1.2" height="1.2" fill="#ececee"/>
<rect x="621.5" y="264.0" width="1.2" height="1.2" fill="#ececee"/>
<rect x="637.3" y="261.3" width="1.2" height="1.2" fill="#d8a0a0"/>
<rect x="607.1" y="268.4" width="1.2" height="1.2" fill="#d8a0a0"/>
<rect x="603.7" y="275.3" width="1.2" height="1.2" fill="#ececee"/>
<rect x="641.1" y="263.5" width="1.2" height="1.2" fill="#ececee"/>
<rect x="626.8" y="264.3" width="1.2" height="1.2" fill="#ececee"/>
<rect x="614.9" y="265.9" width="1.2" height="1.2" fill="#d8a0a0"/>
<rect x="604.8" y="269.2" width="1.2" height="1.2" fill="#ececee"/>
<rect x="623.2" y="268.4" width="1.2" height="1.2" fill="#ececee"/>
<rect x="613.6" y="273.5" width="1.2" height="1.2" fill="#ececee"/>
<rect x="611.4" y="268.1" width="1.2" height="1.2" fill="#ececee"/>
<rect x="601.9" y="271.8" width="1.2" height="1.2" fill="#ececee"/>
<rect x="612.1" y="262.2" width="1.2" height="1.2" fill="#ececee"/>
<rect x="618.4" y="265.2" width="1.2" height="1.2" fill="#ececee"/>
<rect x="611.4" y="269.2" width="1.2" height="1.2" fill="#ececee"/>
<rect x="633.4" y="265.5" width="1.2" height="1.2" fill="#ececee"/>
<rect x="641.0" y="262.3" width="1.2" height="1.2" fill="#ececee"/>
<rect x="610.7" y="270.8" width="1.2" height="1.2" fill="#ececee"/>
<rect x="628.7" y="262.3" width="1.2" height="1.2" fill="#d8a0a0"/>
<rect x="611.1" y="273.1" width="1.2" height="1.2" fill="#ececee"/>
<rect x="616.8" y="267.4" width="1.2" height="1.2" fill="#ececee"/>
<rect x="623.0" y="266.0" width="1.2" height="1.2" fill="#d8a0a0"/>
<rect x="631.2" y="260.9" width="1.2" height="1.2" fill="#d8a0a0"/>
<rect x="600.7" y="260.5" width="1.2" height="1.2" fill="#d8a0a0"/>
<rect x="611.6" y="260.2" width="1.2" height="1.2" fill="#ececee"/>
<rect x="620.8" y="269.7" width="1.2" height="1.2" fill="#ececee"/>
<rect x="606.9" y="259.9" width="1.2" height="1.2" fill="#ececee"/>
<rect x="613.2" y="266.9" width="1.2" height="1.2" fill="#d8a0a0"/>
<rect x="627.2" y="267.7" width="1.2" height="1.2" fill="#ececee"/>
<rect x="638.2" y="263.4" width="1.2" height="1.2" fill="#ececee"/>
<rect x="615.6" y="266.4" width="1.2" height="1.2" fill="#ececee"/>
<rect x="638.8" y="262.5" width="1.2" height="1.2" fill="#ececee"/>
<rect x="620.6" y="269.3" width="1.2" height="1.2" fill="#ececee"/>
<rect x="624.7" y="261.0" width="1.2" height="1.2" fill="#ececee"/>
<rect x="607.9" y="268.1" width="1.2" height="1.2" fill="#ececee"/>
<rect x="609.5" y="270.7" width="1.2" height="1.2" fill="#ececee"/>
<rect x="631.5" y="267.4" width="1.2" height="1.2" fill="#ececee"/>
<rect x="641.8" y="261.9" width="1.2" height="1.2" fill="#ececee"/>
<rect x="607.5" y="261.1" width="1.2" height="1.2" fill="#d8a0a0"/>
<rect x="604.3" y="260.2" width="1.2" height="1.2" fill="#ececee"/>
<rect x="622.8" y="262.1" width="1.2" height="1.2" fill="#ececee"/>
<rect x="632.2" y="263.3" width="1.2" height="1.2" fill="#ececee"/>
<rect x="628.5" y="268.5" width="1.2" height="1.2" fill="#ececee"/>
<rect x="618.7" y="266.6" width="1.2" height="1.2" fill="#ececee"/>
<rect x="635.2" y="264.8" width="1.2" height="1.2" fill="#ececee"/>
<rect x="632.8" y="261.0" width="1.2" height="1.2" fill="#ececee"/>
<rect x="621.3" y="262.1" width="1.2" height="1.2" fill="#d8a0a0"/>
<rect x="611.9" y="273.9" width="1.2" height="1.2" fill="#ececee"/>
<rect x="634.3" y="266.1" width="1.2" height="1.2" fill="#ececee"/>
<rect x="632.3" y="263.7" width="1.2" height="1.2" fill="#ececee"/>
<rect x="605.2" y="271.3" width="1.2" height="1.2" fill="#ececee"/>
<rect x="628.9" y="262.8" width="1.2" height="1.2" fill="#ececee"/>
<rect x="615.0" y="265.2" width="1.2" height="1.2" fill="#d8a0a0"/>
<rect x="600.3" y="269.0" width="1.2" height="1.2" fill="#ececee"/>
<rect x="606.2" y="272.3" width="1.2" height="1.2" fill="#ececee"/>
<rect x="616.9" y="263.1" width="1.2" height="1.2" fill="#d8a0a0"/>
<rect x="618.1" y="268.5" width="1.2" height="1.2" fill="#ececee"/>
<rect x="632.9" y="263.9" width="1.2" height="1.2" fill="#ececee"/>
<rect x="620.7" y="262.9" width="1.2" height="1.2" fill="#ececee"/>
<rect x="639.8" y="262.3" width="1.2" height="1.2" fill="#ececee"/>
<rect x="606.6" y="270.4" width="1.2" height="1.2" fill="#ececee"/>
<rect x="609.3" y="261.8" width="1.2" height="1.2" fill="#ececee"/>
<rect x="638.1" y="264.8" width="1.2" height="1.2" fill="#ececee"/>
<rect x="600.5" y="273.9" width="1.2" height="1.2" fill="#ececee"/>
<rect x="601.9" y="274.1" width="1.2" height="1.2" fill="#ececee"/>
<rect x="609.8" y="272.1" width="1.2" height="1.2" fill="#ececee"/>
<rect x="609.8" y="267.8" width="1.2" height="1.2" fill="#ececee"/>
<rect x="625.4" y="265.2" width="1.2" height="1.2" fill="#ececee"/>
<rect x="602.9" y="263.1" width="1.2" height="1.2" fill="#d8a0a0"/>
<rect x="625.0" y="264.6" width="1.2" height="1.2" fill="#ececee"/>
<rect x="623.7" y="266.7" width="1.2" height="1.2" fill="#ececee"/>
<rect x="635.4" y="263.3" width="1.2" height="1.2" fill="#ececee"/>
<rect x="641.4" y="263.2" width="1.2" height="1.2" fill="#ececee"/>
<rect x="629.0" y="264.7" width="1.2" height="1.2" fill="#ececee"/>
<rect x="604.3" y="271.5" width="1.2" height="1.2" fill="#ececee"/>
<rect x="625.7" y="265.3" width="1.2" height="1.2" fill="#ececee"/>
<rect x="618.0" y="262.9" width="1.2" height="1.2" fill="#ececee"/>
<rect x="629.3" y="267.4" width="1.2" height="1.2" fill="#ececee"/>
<rect x="613.2" y="266.3" width="1.2" height="1.2" fill="#ececee"/>
<rect x="626.6" y="267.1" width="1.2" height="1.2" fill="#ececee"/>
<rect x="634.0" y="264.8" width="1.2" height="1.2" fill="#ececee"/>
<rect x="618.8" y="265.4" width="1.2" height="1.2" fill="#ececee"/>
<rect x="613.2" y="271.8" width="1.2" height="1.2" fill="#ececee"/>
<rect x="623.4" y="265.5" width="1.2" height="1.2" fill="#ececee"/>
<rect x="600.4" y="265.0" width="1.2" height="1.2" fill="#ececee"/>
<rect x="640.0" y="261.0" width="1.2" height="1.2" fill="#d8a0a0"/>
<rect x="640.9" y="263.2" width="1.2" height="1.2" fill="#ececee"/>
<rect x="600.8" y="276.6" width="1.2" height="1.2" fill="#ececee"/>
<rect x="612.5" y="273.6" width="1.2" height="1.2" fill="#ececee"/>
<rect x="634.6" y="265.3" width="1.2" height="1.2" fill="#ececee"/>
<rect x="621.2" y="261.1" width="1.2" height="1.2" fill="#d8a0a0"/>
<rect x="620.8" y="269.3" width="1.2" height="1.2" fill="#ececee"/>
<rect x="628.0" y="261.4" width="1.2" height="1.2" fill="#ececee"/>
<rect x="602.5" y="270.5" width="1.2" height="1.2" fill="#ececee"/>
<rect x="629.9" y="263.5" width="1.2" height="1.2" fill="#d8a0a0"/>
<rect x="630.3" y="264.6" width="1.2" height="1.2" fill="#ececee"/>
<rect x="607.5" y="264.6" width="1.2" height="1.2" fill="#ececee"/>
<rect x="625.2" y="269.4" width="1.2" height="1.2" fill="#ececee"/>
<rect x="602.0" y="277.5" width="1.2" height="1.2" fill="#ececee"/>
<rect x="608.6" y="272.1" width="1.2" height="1.2" fill="#ececee"/>
<rect x="635.9" y="263.4" width="1.2" height="1.2" fill="#ececee"/>
<rect x="619.8" y="265.5" width="1.2" height="1.2" fill="#ececee"/>
<rect x="624.4" y="261.6" width="1.2" height="1.2" fill="#ececee"/>
<rect x="605.0" y="260.1" width="1.2" height="1.2" fill="#d8a0a0"/>
<rect x="631.0" y="263.2" width="1.2" height="1.2" fill="#d8a0a0"/>
<rect x="625.6" y="266.4" width="1.2" height="1.2" fill="#ececee"/>
<rect x="637.8" y="262.0" width="1.2" height="1.2" fill="#d8a0a0"/>
<rect x="610.3" y="274.7" width="1.2" height="1.2" fill="#ececee"/>
<rect x="607.5" y="271.9" width="1.2" height="1.2" fill="#ececee"/>
<rect x="616.2" y="264.9" width="1.2" height="1.2" fill="#ececee"/>
<rect x="615.2" y="262.1" width="1.2" height="1.2" fill="#ececee"/>
<rect x="603.9" y="274.1" width="1.2" height="1.2" fill="#ececee"/>
<rect x="629.9" y="263.6" width="1.2" height="1.2" fill="#d8a0a0"/>
<rect x="636.9" y="263.9" width="1.2" height="1.2" fill="#ececee"/>
<rect x="638.4" y="264.6" width="1.2" height="1.2" fill="#ececee"/>
<rect x="624.9" y="260.8" width="1.2" height="1.2" fill="#d8a0a0"/>
<rect x="613.8" y="268.7" width="1.2" height="1.2" fill="#ececee"/>
<rect x="631.7" y="260.8" width="1.2" height="1.2" fill="#d8a0a0"/>
<rect x="620.4" y="269.8" width="1.2" height="1.2" fill="#ececee"/>
<rect x="606.2" y="271.2" width="1.2" height="1.2" fill="#ececee"/>
<rect x="625.9" y="264.0" width="1.2" height="1.2" fill="#d8a0a0"/>
<rect x="618.9" y="263.3" width="1.2" height="1.2" fill="#ececee"/>
<rect x="640.2" y="261.8" width="1.2" height="1.2" fill="#ececee"/>
<rect x="622.5" y="267.3" width="1.2" height="1.2" fill="#ececee"/>
<rect x="603.3" y="265.6" width="1.2" height="1.2" fill="#d8a0a0"/>
<rect x="620.8" y="267.9" width="1.2" height="1.2" fill="#ececee"/>
<rect x="603.9" y="260.5" width="1.2" height="1.2" fill="#ececee"/>
<rect x="612.8" y="262.5" width="1.2" height="1.2" fill="#ececee"/>
<rect x="604.8" y="260.1" width="1.2" height="1.2" fill="#d8a0a0"/>
<rect x="631.8" y="261.4" width="1.2" height="1.2" fill="#ececee"/>
<rect x="630.6" y="260.8" width="1.2" height="1.2" fill="#ececee"/>
<rect x="620.6" y="263.4" width="1.2" height="1.2" fill="#d8a0a0"/>
<rect x="621.3" y="265.9" width="1.2" height="1.2" fill="#ececee"/>
<rect x="601.2" y="275.4" width="1.2" height="1.2" fill="#ececee"/>
<rect x="634.7" y="261.0" width="1.2" height="1.2" fill="#d8a0a0"/>
<rect x="622.7" y="261.7" width="1.2" height="1.2" fill="#ececee"/>
<rect x="639.3" y="264.3" width="1.2" height="1.2" fill="#ececee"/>
<rect x="622.9" y="267.8" width="1.2" height="1.2" fill="#ececee"/>
<rect x="620.1" y="262.0" width="1.2" height="1.2" fill="#d8a0a0"/>
<rect x="618.6" y="268.3" width="1.2" height="1.2" fill="#ececee"/>
<rect x="612.3" y="261.5" width="1.2" height="1.2" fill="#d8a0a0"/>
<rect x="620.1" y="263.3" width="1.2" height="1.2" fill="#d8a0a0"/>
<rect x="621.9" y="263.2" width="1.2" height="1.2" fill="#ececee"/>
<rect x="600.1" y="260.7" width="1.2" height="1.2" fill="#ececee"/>
<rect x="640.4" y="263.7" width="1.2" height="1.2" fill="#ececee"/>
<rect x="639.5" y="262.6" width="1.2" height="1.2" fill="#ececee"/>
<rect x="604.4" y="267.5" width="1.2" height="1.2" fill="#ececee"/>
<rect x="617.2" y="268.3" width="1.2" height="1.2" fill="#ececee"/>
<rect x="627.5" y="262.0" width="1.2" height="1.2" fill="#d8a0a0"/>
<rect x="618.0" y="266.5" width="1.2" height="1.2" fill="#ececee"/>
<rect x="610.2" y="271.0" width="1.2" height="1.2" fill="#ececee"/>
<rect x="620.0" y="271.7" width="1.2" height="1.2" fill="#ececee"/>
<rect x="630.8" y="266.0" width="1.2" height="1.2" fill="#ececee"/>
<rect x="616.3" y="265.1" width="1.2" height="1.2" fill="#d8a0a0"/>
<rect x="601.1" y="268.6" width="1.2" height="1.2" fill="#ececee"/>
<rect x="623.4" y="267.7" width="1.2" height="1.2" fill="#ececee"/>
<rect x="621.3" y="267.8" width="1.2" height="1.2" fill="#ececee"/>
<rect x="627.7" y="268.2" width="1.2" height="1.2" fill="#ececee"/>
<rect x="620.6" y="265.9" width="1.2" height="1.2" fill="#ececee"/>
<rect x="607.5" y="263.0" width="1.2" height="1.2" fill="#d8a0a0"/>
<rect x="621.7" y="260.4" width="1.2" height="1.2" fill="#d8a0a0"/>
<rect x="634.9" y="264.1" width="1.2" height="1.2" fill="#ececee"/>
<rect x="640.0" y="261.1" width="1.2" height="1.2" fill="#d8a0a0"/>
<rect x="619.3" y="262.0" width="1.2" height="1.2" fill="#ececee"/>
<rect x="607.8" y="262.5" width="1.2" height="1.2" fill="#ececee"/>
<rect x="627.1" y="266.1" width="1.2" height="1.2" fill="#ececee"/>
<rect x="640.0" y="262.1" width="1.2" height="1.2" fill="#ececee"/>
<rect x="638.9" y="263.2" width="1.2" height="1.2" fill="#ececee"/>
<rect x="631.4" y="265.6" width="1.2" height="1.2" fill="#ececee"/>
<rect x="602.9" y="273.2" width="1.2" height="1.2" fill="#ececee"/>
<rect x="625.2" y="261.2" width="1.2" height="1.2" fill="#d8a0a0"/>
<rect x="607.4" y="273.1" width="1.2" height="1.2" fill="#ececee"/>
<rect x="626.7" y="260.8" width="1.2" height="1.2" fill="#d8a0a0"/>
<rect x="630.8" y="261.1" width="1.2" height="1.2" fill="#ececee"/>
<rect x="617.4" y="270.9" width="1.2" height="1.2" fill="#ececee"/>
<rect x="609.7" y="261.0" width="1.2" height="1.2" fill="#d8a0a0"/>
<rect x="635.4" y="264.3" width="1.2" height="1.2" fill="#ececee"/>
<rect x="631.5" y="260.3" width="1.2" height="1.2" fill="#ececee"/>
<rect x="613.4" y="273.6" width="1.2" height="1.2" fill="#ececee"/>
<rect x="606.8" y="272.2" width="1.2" height="1.2" fill="#ececee"/>
<rect x="611.3" y="260.9" width="1.2" height="1.2" fill="#d8a0a0"/>
<rect x="640.8" y="263.6" width="1.2" height="1.2" fill="#ececee"/>
<rect x="603.6" y="273.1" width="1.2" height="1.2" fill="#ececee"/>
<rect x="605.2" y="276.6" width="1.2" height="1.2" fill="#d8a0a0"/>
<rect x="620.5" y="269.9" width="1.2" height="1.2" fill="#ececee"/>
<rect x="615.9" y="271.7" width="1.2" height="1.2" fill="#d8a0a0"/>
<rect x="603.1" y="278.4" width="1.2" height="1.2" fill="#ececee"/>
<rect x="614.8" y="272.3" width="1.2" height="1.2" fill="#ececee"/>
<rect x="608.6" y="276.2" width="1.2" height="1.2" fill="#ececee"/>
<rect x="632.2" y="266.1" width="1.2" height="1.2" fill="#ececee"/>
<rect x="617.1" y="271.4" width="1.2" height="1.2" fill="#ececee"/>
<rect x="608.9" y="274.7" width="1.2" height="1.2" fill="#ececee"/>
<rect x="628.9" y="266.8" width="1.2" height="1.2" fill="#ececee"/>
<rect x="633.3" y="265.5" width="1.2" height="1.2" fill="#ececee"/>
<rect x="640.2" y="262.1" width="1.2" height="1.2" fill="#ececee"/>
<rect x="638.3" y="262.9" width="1.2" height="1.2" fill="#ececee"/>
<rect x="632.3" y="266.2" width="1.2" height="1.2" fill="#ececee"/>
<rect x="615.4" y="271.4" width="1.2" height="1.2" fill="#ececee"/>
<rect x="630.4" y="266.0" width="1.2" height="1.2" fill="#ececee"/>
<rect x="609.4" y="274.5" width="1.2" height="1.2" fill="#d8a0a0"/>
<rect x="598.7" y="280.2" width="1.2" height="1.2" fill="#ececee"/>
<rect x="614.1" y="272.8" width="1.2" height="1.2" fill="#ececee"/>
<rect x="612.0" y="273.9" width="1.2" height="1.2" fill="#ececee"/>
<rect x="617.8" y="271.2" width="1.2" height="1.2" fill="#ececee"/>
<rect x="637.3" y="263.5" width="1.2" height="1.2" fill="#ececee"/>
<rect x="598.2" y="281.1" width="1.2" height="1.2" fill="#ececee"/>
<rect x="599.8" y="280.6" width="1.2" height="1.2" fill="#ececee"/>
<rect x="641.3" y="262.2" width="1.2" height="1.2" fill="#ececee"/>
<rect x="638.6" y="263.4" width="1.2" height="1.2" fill="#ececee"/>
<rect x="601.0" y="279.4" width="1.2" height="1.2" fill="#ececee"/>
<rect x="606.6" y="276.0" width="1.2" height="1.2" fill="#ececee"/>
<rect x="616.6" y="271.7" width="1.2" height="1.2" fill="#ececee"/>
<rect x="622.2" y="270.4" width="1.2" height="1.2" fill="#ececee"/>
<rect x="608.4" y="275.7" width="1.2" height="1.2" fill="#d8a0a0"/>
<rect x="631.6" y="265.3" width="1.2" height="1.2" fill="#ececee"/>
<rect x="626.7" y="268.4" width="1.2" height="1.2" fill="#ececee"/>
<rect x="615.0" y="271.9" width="1.2" height="1.2" fill="#ececee"/>
<rect x="626.7" y="267.6" width="1.2" height="1.2" fill="#ececee"/>
<rect x="621.9" y="269.7" width="1.2" height="1.2" fill="#ececee"/>
<rect x="635.2" y="264.3" width="1.2" height="1.2" fill="#ececee"/>
<rect x="615.4" y="272.5" width="1.2" height="1.2" fill="#ececee"/>
<rect x="604.4" y="277.5" width="1.2" height="1.2" fill="#ececee"/>
<rect x="614.7" y="273.3" width="1.2" height="1.2" fill="#ececee"/>
<rect x="624.0" y="269.1" width="1.2" height="1.2" fill="#d8a0a0"/>
<rect x="633.9" y="265.7" width="1.2" height="1.2" fill="#ececee"/>
<rect x="635.7" y="265.1" width="1.2" height="1.2" fill="#ececee"/>
<rect x="640.4" y="261.5" width="1.2" height="1.2" fill="#ececee"/>
<rect x="604.2" y="278.2" width="1.2" height="1.2" fill="#ececee"/>
<rect x="618.2" y="268.9" width="1.2" height="1.2" fill="#ececee"/>
<rect x="631.7" y="263.9" width="1.2" height="1.2" fill="#ececee"/>
<rect x="637.8" y="261.1" width="1.2" height="1.2" fill="#ececee"/>
<rect x="607.1" y="275.4" width="1.2" height="1.2" fill="#ececee"/>
<rect x="627.2" y="265.4" width="1.2" height="1.2" fill="#ececee"/>
<rect x="638.8" y="261.4" width="1.2" height="1.2" fill="#ececee"/>
<rect x="608.9" y="274.3" width="1.2" height="1.2" fill="#ececee"/>
<rect x="627.5" y="264.3" width="1.2" height="1.2" fill="#ececee"/>
<rect x="614.4" y="271.7" width="1.2" height="1.2" fill="#ececee"/>
<rect x="635.9" y="262.0" width="1.2" height="1.2" fill="#ececee"/>
<rect x="611.4" y="272.0" width="1.2" height="1.2" fill="#ececee"/>
<rect x="616.1" y="269.9" width="1.2" height="1.2" fill="#d8a0a0"/>
<rect x="619.0" y="268.4" width="1.2" height="1.2" fill="#ececee"/>
<rect x="607.8" y="275.3" width="1.2" height="1.2" fill="#ececee"/>
<rect x="628.8" y="264.0" width="1.2" height="1.2" fill="#ececee"/>
<rect x="632.2" y="263.1" width="1.2" height="1.2" fill="#ececee"/>
<rect x="624.1" y="267.3" width="1.2" height="1.2" fill="#d8a0a0"/>
<rect x="636.2" y="261.6" width="1.2" height="1.2" fill="#ececee"/>
<rect x="620.8" y="267.3" width="1.2" height="1.2" fill="#d8a0a0"/>
<rect x="624.9" y="265.5" width="1.2" height="1.2" fill="#ececee"/>
<rect x="606.4" y="276.1" width="1.2" height="1.2" fill="#ececee"/>
<rect x="612.3" y="272.7" width="1.2" height="1.2" fill="#ececee"/>
<rect x="609.5" y="273.4" width="1.2" height="1.2" fill="#d8a0a0"/>
<rect x="609.6" y="275.4" width="1.2" height="1.2" fill="#ececee"/>
<rect x="618.7" y="268.9" width="1.2" height="1.2" fill="#ececee"/>
<rect x="609.5" y="273.0" width="1.2" height="1.2" fill="#ececee"/>
<rect x="618.2" y="268.3" width="1.2" height="1.2" fill="#ececee"/>
<rect x="630.3" y="264.5" width="1.2" height="1.2" fill="#ececee"/>
<rect x="620.0" y="268.8" width="1.2" height="1.2" fill="#ececee"/>
<rect x="616.5" y="270.3" width="1.2" height="1.2" fill="#ececee"/>
<rect x="606.3" y="276.1" width="1.2" height="1.2" fill="#ececee"/>
<rect x="639.8" y="260.7" width="1.2" height="1.2" fill="#ececee"/>
<rect x="626.7" y="265.1" width="1.2" height="1.2" fill="#ececee"/>
<rect x="636.3" y="261.0" width="1.2" height="1.2" fill="#ececee"/>
<rect x="632.5" y="263.4" width="1.2" height="1.2" fill="#ececee"/>
<rect x="617.5" y="270.2" width="1.2" height="1.2" fill="#ececee"/>
<rect x="615.3" y="271.3" width="1.2" height="1.2" fill="#ececee"/>
<rect x="625.2" y="266.2" width="1.2" height="1.2" fill="#ececee"/>
<rect x="618.4" y="269.6" width="1.2" height="1.2" fill="#d8a0a0"/>
<rect x="635.2" y="262.2" width="1.2" height="1.2" fill="#d8a0a0"/>
<rect x="618.4" y="268.3" width="1.2" height="1.2" fill="#d8a0a0"/>
<rect x="634.9" y="262.7" width="1.2" height="1.2" fill="#ececee"/>
<rect x="631.9" y="263.2" width="1.2" height="1.2" fill="#ececee"/>
<rect x="610.0" y="274.3" width="1.2" height="1.2" fill="#ececee"/>
<rect x="638.1" y="260.9" width="1.2" height="1.2" fill="#ececee"/>
<rect x="624.0" y="264.5" width="1.2" height="1.2" fill="#ececee"/>
<rect x="629.8" y="262.6" width="1.2" height="1.2" fill="#ececee"/>
<rect x="617.2" y="266.0" width="1.2" height="1.2" fill="#ececee"/>
<rect x="621.0" y="264.9" width="1.2" height="1.2" fill="#ececee"/>
<rect x="627.9" y="262.6" width="1.2" height="1.2" fill="#ececee"/>
<rect x="626.2" y="263.2" width="1.2" height="1.2" fill="#ececee"/>
<rect x="622.0" y="264.9" width="1.2" height="1.2" fill="#ececee"/>
<rect x="630.0" y="262.7" width="1.2" height="1.2" fill="#ececee"/>
<rect x="635.2" y="261.6" width="1.2" height="1.2" fill="#ececee"/>
<rect x="618.9" y="264.2" width="1.2" height="1.2" fill="#ececee"/>
<rect x="632.0" y="262.5" width="1.2" height="1.2" fill="#d8a0a0"/>
<rect x="619.4" y="265.1" width="1.2" height="1.2" fill="#ececee"/>
<rect x="629.2" y="262.7" width="1.2" height="1.2" fill="#ececee"/>
<rect x="633.7" y="261.4" width="1.2" height="1.2" fill="#ececee"/>
<rect x="632.6" y="261.7" width="1.2" height="1.2" fill="#ececee"/>
<rect x="631.6" y="263.7" width="1.2" height="1.2" fill="#ececee"/>
<rect x="620.4" y="265.8" width="1.2" height="1.2" fill="#d8a0a0"/>
<rect x="623.3" y="264.3" width="1.2" height="1.2" fill="#ececee"/>
<rect x="627.4" y="262.1" width="1.2" height="1.2" fill="#ececee"/>
<rect x="631.8" y="262.1" width="1.2" height="1.2" fill="#ececee"/>
<rect x="632.7" y="261.8" width="1.2" height="1.2" fill="#ececee"/>
<rect x="623.9" y="264.5" width="1.2" height="1.2" fill="#ececee"/>
<rect x="620.0" y="264.7" width="1.2" height="1.2" fill="#ececee"/>
<rect x="617.9" y="265.2" width="1.2" height="1.2" fill="#d8a0a0"/>
<rect x="632.2" y="262.2" width="1.2" height="1.2" fill="#ececee"/>
<rect x="629.3" y="263.0" width="1.2" height="1.2" fill="#ececee"/>
<rect x="626.8" y="263.5" width="1.2" height="1.2" fill="#ececee"/>
<rect x="630.6" y="262.8" width="1.2" height="1.2" fill="#ececee"/>
<rect x="633.0" y="262.1" width="1.2" height="1.2" fill="#ececee"/>
<rect x="628.2" y="263.0" width="1.2" height="1.2" fill="#ececee"/>
<rect x="635.0" y="261.1" width="1.2" height="1.2" fill="#ececee"/>
<rect x="619.9" y="264.9" width="1.2" height="1.2" fill="#d8a0a0"/>
<rect x="616.3" y="266.5" width="1.2" height="1.2" fill="#ececee"/>
<rect x="624.3" y="264.1" width="1.2" height="1.2" fill="#ececee"/>
<rect x="620.5" y="264.9" width="1.2" height="1.2" fill="#ececee"/>
<rect x="621.9" y="264.6" width="1.2" height="1.2" fill="#d8a0a0"/>
<rect x="620.3" y="264.5" width="1.2" height="1.2" fill="#ececee"/>
<rect x="620.4" y="265.5" width="1.2" height="1.2" fill="#ececee"/>
<rect x="627.4" y="263.1" width="1.2" height="1.2" fill="#d8a0a0"/>
<rect x="631.8" y="262.2" width="1.2" height="1.2" fill="#ececee"/>
<rect x="622.0" y="264.7" width="1.2" height="1.2" fill="#d8a0a0"/>
<rect x="616.4" y="265.1" width="1.2" height="1.2" fill="#ececee"/>
<rect x="627.6" y="263.1" width="1.2" height="1.2" fill="#d8a0a0"/>
<rect x="628.6" y="263.1" width="1.2" height="1.2" fill="#ececee"/>
<rect x="629.9" y="262.5" width="1.2" height="1.2" fill="#ececee"/>
<rect x="275.9" y="405.1" width="1.2" height="1.2" fill="#e0a81c"/>
<rect x="304.9" y="393.1" width="1.2" height="1.2" fill="#b4dc22"/>
<rect x="265.3" y="409.7" width="1.2" height="1.2" fill="#e4d014"/>
<rect x="290.0" y="399.0" width="1.2" height="1.2" fill="#e0a81c"/>
<rect x="267.5" y="406.3" width="1.2" height="1.2" fill="#e4d014"/>
<rect x="326.7" y="386.2" width="1.2" height="1.2" fill="#e4d014"/>
<rect x="288.2" y="398.7" width="1.2" height="1.2" fill="#e4d014"/>
<rect x="261.7" y="408.3" width="1.2" height="1.2" fill="#e4d014"/>
<rect x="278.8" y="402.5" width="1.2" height="1.2" fill="#e4d014"/>
<rect x="265.6" y="406.2" width="1.2" height="1.2" fill="#e0a81c"/>
<rect x="315.8" y="388.7" width="1.2" height="1.2" fill="#e4d014"/>
<rect x="297.4" y="396.7" width="1.2" height="1.2" fill="#e0a81c"/>
<rect x="318.1" y="388.9" width="1.2" height="1.2" fill="#e4d014"/>
<rect x="280.5" y="401.2" width="1.2" height="1.2" fill="#e0a81c"/>
<rect x="344.9" y="379.0" width="1.2" height="1.2" fill="#e4d014"/>
<rect x="295.1" y="396.9" width="1.2" height="1.2" fill="#e0a81c"/>
<rect x="275.9" y="405.1" width="1.2" height="1.2" fill="#e4d014"/>
<rect x="326.5" y="384.4" width="1.2" height="1.2" fill="#e4d014"/>
<rect x="294.2" y="397.7" width="1.2" height="1.2" fill="#e4d014"/>
<rect x="351.3" y="375.3" width="1.2" height="1.2" fill="#e4d014"/>
<rect x="317.1" y="389.3" width="1.2" height="1.2" fill="#e4d014"/>
<rect x="280.9" y="401.9" width="1.2" height="1.2" fill="#e4d014"/>
<rect x="308.5" y="392.7" width="1.2" height="1.2" fill="#e0a81c"/>
<rect x="328.9" y="385.8" width="1.2" height="1.2" fill="#e4d014"/>
<rect x="308.5" y="392.4" width="1.2" height="1.2" fill="#e4d014"/>
<rect x="291.3" y="398.4" width="1.2" height="1.2" fill="#e4d014"/>
<rect x="273.7" y="405.1" width="1.2" height="1.2" fill="#b4dc22"/>
<rect x="273.2" y="407.1" width="1.2" height="1.2" fill="#e4d014"/>
<rect x="272.4" y="403.1" width="1.2" height="1.2" fill="#b4dc22"/>
<rect x="337.5" y="382.6" width="1.2" height="1.2" fill="#b4dc22"/>
<rect x="344.7" y="379.1" width="1.2" height="1.2" fill="#e0a81c"/>
<rect x="323.9" y="386.7" width="1.2" height="1.2" fill="#b4dc22"/>
<rect x="313.9" y="390.7" width="1.2" height="1.2" fill="#b4dc22"/>
<rect x="323.5" y="386.1" width="1.2" height="1.2" fill="#e0a81c"/>
<rect x="280.2" y="400.6" width="1.2" height="1.2" fill="#e4d014"/>
<rect x="345.1" y="378.9" width="1.2" height="1.2" fill="#e4d014"/>
<rect x="289.4" y="399.7" width="1.2" height="1.2" fill="#e0a81c"/>
<rect x="332.5" y="381.3" width="1.2" height="1.2" fill="#e4d014"/>
<rect x="285.2" y="401.2" width="1.2" height="1.2" fill="#e0a81c"/>
<rect x="352.4" y="375.5" width="1.2" height="1.2" fill="#e0a81c"/>
<rect x="334.3" y="382.0" width="1.2" height="1.2" fill="#e0a81c"/>
<rect x="337.1" y="381.9" width="1.2" height="1.2" fill="#e0a81c"/>
<rect x="336.1" y="383.9" width="1.2" height="1.2" fill="#e0a81c"/>
<rect x="275.9" y="405.5" width="1.2" height="1.2" fill="#e0a81c"/>
<rect x="275.3" y="404.2" width="1.2" height="1.2" fill="#e0a81c"/>
<rect x="348.5" y="378.8" width="1.2" height="1.2" fill="#e4d014"/>
<rect x="343.8" y="379.2" width="1.2" height="1.2" fill="#e4d014"/>
<rect x="337.5" y="383.0" width="1.2" height="1.2" fill="#e4d014"/>
<rect x="343.6" y="380.0" width="1.2" height="1.2" fill="#b4dc22"/>
<rect x="289.0" y="398.6" width="1.2" height="1.2" fill="#e4d014"/>
<rect x="336.0" y="381.5" width="1.2" height="1.2" fill="#e4d014"/>
<rect x="275.3" y="406.1" width="1.2" height="1.2" fill="#e4d014"/>
<rect x="261.4" y="409.9" width="1.2" height="1.2" fill="#e0a81c"/>
<rect x="339.5" y="382.3" width="1.2" height="1.2" fill="#e4d014"/>
<rect x="330.7" y="383.7" width="1.2" height="1.2" fill="#e4d014"/>
<rect x="298.1" y="395.9" width="1.2" height="1.2" fill="#e0a81c"/>
<rect x="295.5" y="396.1" width="1.2" height="1.2" fill="#e0a81c"/>
<rect x="278.3" y="404.0" width="1.2" height="1.2" fill="#b4dc22"/>
<rect x="297.5" y="395.2" width="1.2" height="1.2" fill="#e0a81c"/>
<rect x="294.1" y="396.4" width="1.2" height="1.2" fill="#b4dc22"/>
<rect x="305.5" y="391.9" width="1.2" height="1.2" fill="#e0a81c"/>
<rect x="275.6" y="403.5" width="1.2" height="1.2" fill="#e0a81c"/>
<rect x="331.9" y="384.5" width="1.2" height="1.2" fill="#e4d014"/>
<rect x="348.0" y="377.4" width="1.2" height="1.2" fill="#b4dc22"/>
<rect x="333.1" y="382.6" width="1.2" height="1.2" fill="#e4d014"/>
<rect x="295.2" y="397.8" width="1.2" height="1.2" fill="#e4d014"/>
<rect x="305.5" y="393.5" width="1.2" height="1.2" fill="#e4d014"/>
<rect x="276.1" y="402.9" width="1.2" height="1.2" fill="#e4d014"/>
<rect x="304.5" y="393.9" width="1.2" height="1.2" fill="#e0a81c"/>
<rect x="263.8" y="408.4" width="1.2" height="1.2" fill="#e0a81c"/>
<rect x="303.0" y="391.9" width="1.2" height="1.2" fill="#e0a81c"/>
<rect x="316.7" y="389.0" width="1.2" height="1.2" fill="#e0a81c"/>
<rect x="277.3" y="404.1" width="1.2" height="1.2" fill="#e4d014"/>
<rect x="337.5" y="380.0" width="1.2" height="1.2" fill="#e4d014"/>
<rect x="302.4" y="395.3" width="1.2" height="1.2" fill="#e0a81c"/>
<rect x="315.6" y="389.6" width="1.2" height="1.2" fill="#e4d014"/>
<rect x="328.7" y="384.3" width="1.2" height="1.2" fill="#b4dc22"/>
<rect x="281.9" y="402.8" width="1.2" height="1.2" fill="#b4dc22"/>
<rect x="339.6" y="379.8" width="1.2" height="1.2" fill="#e4d014"/>
<rect x="287.4" y="401.0" width="1.2" height="1.2" fill="#e0a81c"/>
<rect x="312.9" y="391.0" width="1.2" height="1.2" fill="#e4d014"/>
<rect x="313.0" y="390.9" width="1.2" height="1.2" fill="#e0a81c"/>
<rect x="277.6" y="403.1" width="1.2" height="1.2" fill="#e4d014"/>
<rect x="327.7" y="385.3" width="1.2" height="1.2" fill="#e4d014"/>
<rect x="320.0" y="387.6" width="1.2" height="1.2" fill="#e4d014"/>
<rect x="295.5" y="395.5" width="1.2" height="1.2" fill="#e4d014"/>
<rect x="306.9" y="394.0" width="1.2" height="1.2" fill="#e4d014"/>
<rect x="287.6" y="400.6" width="1.2" height="1.2" fill="#e4d014"/>
<rect x="339.0" y="379.6" width="1.2" height="1.2" fill="#e0a81c"/>
<rect x="295.0" y="397.3" width="1.2" height="1.2" fill="#e4d014"/>
<rect x="331.3" y="383.5" width="1.2" height="1.2" fill="#e4d014"/>
<rect x="344.8" y="379.3" width="1.2" height="1.2" fill="#e0a81c"/>
<rect x="292.6" y="399.3" width="1.2" height="1.2" fill="#e4d014"/>
<rect x="308.4" y="391.7" width="1.2" height="1.2" fill="#e0a81c"/>
<rect x="326.2" y="383.9" width="1.2" height="1.2" fill="#e4d014"/>
<rect x="319.4" y="388.5" width="1.2" height="1.2" fill="#e4d014"/>
<rect x="323.2" y="389.1" width="1.2" height="1.2" fill="#e4d014"/>
<rect x="303.1" y="393.8" width="1.2" height="1.2" fill="#e4d014"/>
<rect x="282.7" y="400.8" width="1.2" height="1.2" fill="#e4d014"/>
<rect x="273.0" y="405.0" width="1.2" height="1.2" fill="#e0a81c"/>
<rect x="283.1" y="401.5" width="1.2" height="1.2" fill="#e0a81c"/>
<rect x="265.3" y="407.6" width="1.2" height="1.2" fill="#b4dc22"/>
<rect x="300.7" y="394.9" width="1.2" height="1.2" fill="#e4d014"/>
<rect x="351.1" y="376.6" width="1.2" height="1.2" fill="#e4d014"/>
<rect x="292.7" y="397.5" width="1.2" height="1.2" fill="#e4d014"/>
<rect x="303.3" y="394.0" width="1.2" height="1.2" fill="#e4d014"/>
<rect x="312.0" y="389.7" width="1.2" height="1.2" fill="#e4d014"/>
<rect x="280.1" y="402.6" width="1.2" height="1.2" fill="#e4d014"/>
<rect x="298.0" y="396.1" width="1.2" height="1.2" fill="#b4dc22"/>
<rect x="286.8" y="399.4" width="1.2" height="1.2" fill="#e4d014"/>
<rect x="300.6" y="396.2" width="1.2" height="1.2" fill="#e0a81c"/>
<rect x="339.4" y="380.8" width="1.2" height="1.2" fill="#e4d014"/>
<rect x="320.1" y="388.9" width="1.2" height="1.2" fill="#e4d014"/>
<rect x="341.2" y="380.8" width="1.2" height="1.2" fill="#e0a81c"/>
<rect x="335.7" y="381.6" width="1.2" height="1.2" fill="#e0a81c"/>
<rect x="297.9" y="394.9" width="1.2" height="1.2" fill="#e4d014"/>
<rect x="344.3" y="377.8" width="1.2" height="1.2" fill="#e4d014"/>
<rect x="332.9" y="383.8" width="1.2" height="1.2" fill="#e4d014"/>
<rect x="305.9" y="393.6" width="1.2" height="1.2" fill="#e4d014"/>
<rect x="329.8" y="383.6" width="1.2" height="1.2" fill="#e4d014"/>
<rect x="281.5" y="402.8" width="1.2" height="1.2" fill="#e4d014"/>
<rect x="331.5" y="383.9" width="1.2" height="1.2" fill="#e4d014"/>
<rect x="309.2" y="392.4" width="1.2" height="1.2" fill="#e4d014"/>
<rect x="314.2" y="389.3" width="1.2" height="1.2" fill="#b4dc22"/>
<rect x="289.3" y="399.4" width="1.2" height="1.2" fill="#e4d014"/>
<rect x="328.2" y="384.1" width="1.2" height="1.2" fill="#b4dc22"/>
<rect x="275.2" y="405.6" width="1.2" height="1.2" fill="#e4d014"/>
<rect x="332.4" y="384.9" width="1.2" height="1.2" fill="#e0a81c"/>
<rect x="323.2" y="386.3" width="1.2" height="1.2" fill="#e4d014"/>
<rect x="348.0" y="378.0" width="1.2" height="1.2" fill="#e4d014"/>
<rect x="283.8" y="400.0" width="1.2" height="1.2" fill="#e4d014"/>
<rect x="325.4" y="385.8" width="1.2" height="1.2" fill="#e4d014"/>
<rect x="316.5" y="388.8" width="1.2" height="1.2" fill="#e4d014"/>
<rect x="295.8" y="395.4" width="1.2" height="1.2" fill="#e0a81c"/>
<rect x="327.2" y="385.0" width="1.2" height="1.2" fill="#e0a81c"/>
<rect x="306.8" y="393.4" width="1.2" height="1.2" fill="#b4dc22"/>
<rect x="320.2" y="388.7" width="1.2" height="1.2" fill="#e4d014"/>
<rect x="315.0" y="391.6" width="1.2" height="1.2" fill="#e4d014"/>
<rect x="336.5" y="383.7" width="1.2" height="1.2" fill="#e4d014"/>
<rect x="308.5" y="392.3" width="1.2" height="1.2" fill="#e4d014"/>
<rect x="308.8" y="392.6" width="1.2" height="1.2" fill="#e4d014"/>
<rect x="301.1" y="395.2" width="1.2" height="1.2" fill="#e4d014"/>
<rect x="262.3" y="408.7" width="1.2" height="1.2" fill="#b4dc22"/>
<rect x="289.2" y="400.3" width="1.2" height="1.2" fill="#e4d014"/>
<rect x="326.3" y="387.3" width="1.2" height="1.2" fill="#e4d014"/>
<rect x="266.2" y="407.2" width="1.2" height="1.2" fill="#e4d014"/>
<rect x="318.8" y="389.0" width="1.2" height="1.2" fill="#e4d014"/>
<rect x="308.9" y="390.2" width="1.2" height="1.2" fill="#e4d014"/>
<rect x="311.0" y="389.9" width="1.2" height="1.2" fill="#e4d014"/>
<rect x="340.8" y="380.2" width="1.2" height="1.2" fill="#e4d014"/>
<rect x="348.7" y="376.5" width="1.2" height="1.2" fill="#e0a81c"/>
<rect x="314.6" y="389.3" width="1.2" height="1.2" fill="#e4d014"/>
<rect x="296.4" y="397.2" width="1.2" height="1.2" fill="#e0a81c"/>
<rect x="329.6" y="384.7" width="1.2" height="1.2" fill="#e4d014"/>
<rect x="290.1" y="398.9" width="1.2" height="1.2" fill="#b4dc22"/>
<rect x="334.1" y="383.4" width="1.2" height="1.2" fill="#e0a81c"/>
<rect x="321.5" y="388.0" width="1.2" height="1.2" fill="#e4d014"/>
<rect x="339.3" y="380.8" width="1.2" height="1.2" fill="#e4d014"/>
<rect x="262.5" y="408.6" width="1.2" height="1.2" fill="#e0a81c"/>
<rect x="260.9" y="409.7" width="1.2" height="1.2" fill="#e0a81c"/>
<rect x="330.2" y="383.9" width="1.2" height="1.2" fill="#e4d014"/>
<rect x="328.2" y="385.8" width="1.2" height="1.2" fill="#b4dc22"/>
<rect x="298.6" y="397.2" width="1.2" height="1.2" fill="#e4d014"/>
<rect x="331.9" y="384.4" width="1.2" height="1.2" fill="#e0a81c"/>
<rect x="275.5" y="403.7" width="1.2" height="1.2" fill="#e4d014"/>
<rect x="343.7" y="380.0" width="1.2" height="1.2" fill="#e4d014"/>
<rect x="349.3" y="377.5" width="1.2" height="1.2" fill="#e4d014"/>
<rect x="320.3" y="387.7" width="1.2" height="1.2" fill="#e4d014"/>
<rect x="274.7" y="403.8" width="1.2" height="1.2" fill="#e0a81c"/>
<rect x="327.4" y="385.5" width="1.2" height="1.2" fill="#e4d014"/>
<rect x="320.9" y="391.0" width="1.2" height="1.2" fill="#e0a81c"/>
<rect x="288.3" y="402.1" width="1.2" height="1.2" fill="#e4d014"/>
<rect x="265.5" y="409.3" width="1.2" height="1.2" fill="#e4d014"/>
<rect x="300.2" y="397.9" width="1.2" height="1.2" fill="#d07424"/>
<rect x="265.8" y="414.7" width="1.2" height="1.2" fill="#e4d014"/>
<rect x="336.7" y="384.8" width="1.2" height="1.2" fill="#e4d014"/>
<rect x="317.0" y="391.8" width="1.2" height="1.2" fill="#e4d014"/>
<rect x="273.8" y="409.4" width="1.2" height="1.2" fill="#e0a81c"/>
<rect x="351.4" y="378.6" width="1.2" height="1.2" fill="#e0a81c"/>
<rect x="292.8" y="401.5" width="1.2" height="1.2" fill="#e4d014"/>
<rect x="299.0" y="403.5" width="1.2" height="1.2" fill="#e4d014"/>
<rect x="300.2" y="403.0" width="1.2" height="1.2" fill="#e0a81c"/>
<rect x="335.2" y="387.1" width="1.2" height="1.2" fill="#e4d014"/>
<rect x="326.8" y="391.3" width="1.2" height="1.2" fill="#e4d014"/>
<rect x="351.8" y="377.4" width="1.2" height="1.2" fill="#d07424"/>
<rect x="326.9" y="392.0" width="1.2" height="1.2" fill="#e0a81c"/>
<rect x="329.4" y="385.4" width="1.2" height="1.2" fill="#e0a81c"/>
<rect x="339.9" y="384.1" width="1.2" height="1.2" fill="#e0a81c"/>
<rect x="324.6" y="390.4" width="1.2" height="1.2" fill="#e0a81c"/>
<rect x="305.6" y="394.4" width="1.2" height="1.2" fill="#e0a81c"/>
<rect x="329.8" y="385.8" width="1.2" height="1.2" fill="#e0a81c"/>
<rect x="337.1" y="382.5" width="1.2" height="1.2" fill="#d07424"/>
<rect x="293.6" y="400.1" width="1.2" height="1.2" fill="#e0a81c"/>
<rect x="313.6" y="392.4" width="1.2" height="1.2" fill="#e4d014"/>
<rect x="299.9" y="402.9" width="1.2" height="1.2" fill="#d07424"/>
<rect x="326.6" y="391.9" width="1.2" height="1.2" fill="#e0a81c"/>
<rect x="344.3" y="380.5" width="1.2" height="1.2" fill="#e4d014"/>
<rect x="337.9" y="382.2" width="1.2" height="1.2" fill="#e0a81c"/>
<rect x="298.3" y="403.8" width="1.2" height="1.2" fill="#e0a81c"/>
<rect x="282.3" y="402.7" width="1.2" height="1.2" fill="#e0a81c"/>
<rect x="311.7" y="394.6" width="1.2" height="1.2" fill="#e0a81c"/>
<rect x="267.6" y="409.3" width="1.2" height="1.2" fill="#d07424"/>
<rect x="288.0" y="401.1" width="1.2" height="1.2" fill="#e4d014"/>
<rect x="346.5" y="387.7" width="1.2" height="1.2" fill="#e0a81c"/>
<rect x="291.7" y="400.8" width="1.2" height="1.2" fill="#d07424"/>
<rect x="343.8" y="389.8" width="1.2" height="1.2" fill="#d07424"/>
<rect x="323.2" y="387.9" width="1.2" height="1.2" fill="#d07424"/>
<rect x="277.1" y="408.8" width="1.2" height="1.2" fill="#e4d014"/>
<rect x="265.3" y="412.1" width="1.2" height="1.2" fill="#e4d014"/>
<rect x="341.9" y="381.5" width="1.2" height="1.2" fill="#e0a81c"/>
<rect x="301.3" y="395.7" width="1.2" height="1.2" fill="#e4d014"/>
<rect x="289.8" y="404.9" width="1.2" height="1.2" fill="#e0a81c"/>
<rect x="346.2" y="379.8" width="1.2" height="1.2" fill="#e4d014"/>
<rect x="295.6" y="399.1" width="1.2" height="1.2" fill="#e4d014"/>
<rect x="329.7" y="385.2" width="1.2" height="1.2" fill="#e0a81c"/>
<rect x="274.0" y="406.8" width="1.2" height="1.2" fill="#e4d014"/>
<rect x="303.6" y="402.3" width="1.2" height="1.2" fill="#e0a81c"/>
<rect x="300.7" y="403.8" width="1.2" height="1.2" fill="#e4d014"/>
<rect x="278.9" y="407.3" width="1.2" height="1.2" fill="#e0a81c"/>
<rect x="327.2" y="389.6" width="1.2" height="1.2" fill="#e0a81c"/>
<rect x="291.9" y="406.1" width="1.2" height="1.2" fill="#e0a81c"/>
<rect x="334.1" y="387.5" width="1.2" height="1.2" fill="#d07424"/>
<rect x="304.3" y="402.2" width="1.2" height="1.2" fill="#e0a81c"/>
<rect x="347.6" y="380.5" width="1.2" height="1.2" fill="#e0a81c"/>
<rect x="312.4" y="395.1" width="1.2" height="1.2" fill="#d07424"/>
<rect x="338.3" y="382.8" width="1.2" height="1.2" fill="#e0a81c"/>
<rect x="309.3" y="394.9" width="1.2" height="1.2" fill="#e4d014"/>
<rect x="343.9" y="390.4" width="1.2" height="1.2" fill="#e0a81c"/>
<rect x="313.4" y="391.4" width="1.2" height="1.2" fill="#e4d014"/>
<rect x="291.6" y="399.3" width="1.2" height="1.2" fill="#e4d014"/>
<rect x="295.0" y="400.0" width="1.2" height="1.2" fill="#e4d014"/>
<rect x="273.9" y="411.8" width="1.2" height="1.2" fill="#e0a81c"/>
<rect x="283.0" y="404.5" width="1.2" height="1.2" fill="#e4d014"/>
<rect x="305.7" y="394.6" width="1.2" height="1.2" fill="#e0a81c"/>
<rect x="346.0" y="384.5" width="1.2" height="1.2" fill="#d07424"/>
<rect x="335.3" y="387.1" width="1.2" height="1.2" fill="#e0a81c"/>
<rect x="324.2" y="389.3" width="1.2" height="1.2" fill="#e4d014"/>
<rect x="302.7" y="401.2" width="1.2" height="1.2" fill="#e0a81c"/>
<rect x="265.6" y="413.3" width="1.2" height="1.2" fill="#e4d014"/>
<rect x="308.7" y="393.5" width="1.2" height="1.2" fill="#e4d014"/>
<rect x="373.5" y="374.4" width="1.2" height="1.2" fill="#d07424"/>
<rect x="434.2" y="353.6" width="1.2" height="1.2" fill="#c88c80"/>
<rect x="355.5" y="375.3" width="1.2" height="1.2" fill="#c88c80"/>
<rect x="368.4" y="372.8" width="1.2" height="1.2" fill="#c88c80"/>
<rect x="431.1" y="353.1" width="1.2" height="1.2" fill="#d07424"/>
<rect x="425.0" y="353.5" width="1.2" height="1.2" fill="#d07424"/>
<rect x="355.8" y="378.7" width="1.2" height="1.2" fill="#e0a81c"/>
<rect x="404.7" y="361.1" width="1.2" height="1.2" fill="#d07424"/>
<rect x="398.7" y="365.0" width="1.2" height="1.2" fill="#d07424"/>
<rect x="418.1" y="363.3" width="1.2" height="1.2" fill="#e0a81c"/>
<rect x="441.4" y="354.8" width="1.2" height="1.2" fill="#d07424"/>
<rect x="426.4" y="353.2" width="1.2" height="1.2" fill="#c88c80"/>
<rect x="430.4" y="354.1" width="1.2" height="1.2" fill="#c88c80"/>
<rect x="421.3" y="354.4" width="1.2" height="1.2" fill="#c88c80"/>
<rect x="437.7" y="349.5" width="1.2" height="1.2" fill="#d07424"/>
<rect x="376.8" y="375.4" width="1.2" height="1.2" fill="#c88c80"/>
<rect x="404.3" y="365.2" width="1.2" height="1.2" fill="#d07424"/>
<rect x="371.3" y="375.7" width="1.2" height="1.2" fill="#c88c80"/>
<rect x="374.8" y="375.9" width="1.2" height="1.2" fill="#c88c80"/>
<rect x="390.5" y="364.2" width="1.2" height="1.2" fill="#d07424"/>
<rect x="368.3" y="373.4" width="1.2" height="1.2" fill="#e0a81c"/>
<rect x="393.4" y="366.7" width="1.2" height="1.2" fill="#c88c80"/>
<rect x="376.4" y="368.7" width="1.2" height="1.2" fill="#d07424"/>
<rect x="366.3" y="372.4" width="1.2" height="1.2" fill="#c88c80"/>
<rect x="420.9" y="359.5" width="1.2" height="1.2" fill="#c88c80"/>
<rect x="381.3" y="368.4" width="1.2" height="1.2" fill="#d07424"/>
<rect x="405.0" y="359.6" width="1.2" height="1.2" fill="#c88c80"/>
<rect x="410.3" y="359.1" width="1.2" height="1.2" fill="#d07424"/>
<rect x="368.3" y="371.2" width="1.2" height="1.2" fill="#c88c80"/>
<rect x="431.7" y="354.7" width="1.2" height="1.2" fill="#c88c80"/>
<rect x="385.1" y="370.8" width="1.2" height="1.2" fill="#c88c80"/>
<rect x="429.4" y="351.1" width="1.2" height="1.2" fill="#d07424"/>
<rect x="405.4" y="359.9" width="1.2" height="1.2" fill="#e0a81c"/>
<rect x="402.8" y="360.3" width="1.2" height="1.2" fill="#d07424"/>
<rect x="354.6" y="381.2" width="1.2" height="1.2" fill="#d07424"/>
<rect x="411.4" y="356.9" width="1.2" height="1.2" fill="#c88c80"/>
<rect x="429.2" y="359.2" width="1.2" height="1.2" fill="#c88c80"/>
<rect x="438.3" y="355.8" width="1.2" height="1.2" fill="#c88c80"/>
<rect x="434.3" y="349.5" width="1.2" height="1.2" fill="#c88c80"/>
<rect x="371.4" y="371.0" width="1.2" height="1.2" fill="#d07424"/>
<rect x="356.3" y="384.2" width="1.2" height="1.2" fill="#c88c80"/>
<rect x="415.4" y="358.1" width="1.2" height="1.2" fill="#e0a81c"/>
<rect x="404.1" y="363.2" width="1.2" height="1.2" fill="#d07424"/>
<rect x="404.3" y="362.7" width="1.2" height="1.2" fill="#c88c80"/>
<rect x="426.4" y="357.5" width="1.2" height="1.2" fill="#d07424"/>
<rect x="443.9" y="350.0" width="1.2" height="1.2" fill="#d07424"/>
<rect x="367.2" y="373.7" width="1.2" height="1.2" fill="#d07424"/>
<rect x="376.1" y="378.2" width="1.2" height="1.2" fill="#e0a81c"/>
<rect x="412.0" y="363.2" width="1.2" height="1.2" fill="#c88c80"/>
<rect x="423.8" y="361.1" width="1.2" height="1.2" fill="#d07424"/>
<rect x="404.6" y="364.8" width="1.2" height="1.2" fill="#c88c80"/>
<rect x="356.3" y="375.7" width="1.2" height="1.2" fill="#d07424"/>
<rect x="411.2" y="365.1" width="1.2" height="1.2" fill="#c88c80"/>
<rect x="367.6" y="374.2" width="1.2" height="1.2" fill="#c88c80"/>
<rect x="376.1" y="372.2" width="1.2" height="1.2" fill="#d07424"/>
<rect x="361.8" y="373.9" width="1.2" height="1.2" fill="#d07424"/>
<rect x="400.5" y="361.4" width="1.2" height="1.2" fill="#d07424"/>
<rect x="404.5" y="368.6" width="1.2" height="1.2" fill="#e0a81c"/>
<rect x="410.4" y="357.6" width="1.2" height="1.2" fill="#d07424"/>
<rect x="377.2" y="369.8" width="1.2" height="1.2" fill="#c88c80"/>
<rect x="416.3" y="361.1" width="1.2" height="1.2" fill="#c88c80"/>
<rect x="373.5" y="379.0" width="1.2" height="1.2" fill="#d07424"/>
<rect x="416.8" y="356.7" width="1.2" height="1.2" fill="#e0a81c"/>
<rect x="418.8" y="358.6" width="1.2" height="1.2" fill="#c88c80"/>
<rect x="392.6" y="363.0" width="1.2" height="1.2" fill="#c88c80"/>
<rect x="424.7" y="353.1" width="1.2" height="1.2" fill="#c88c80"/>
<rect x="383.8" y="375.3" width="1.2" height="1.2" fill="#c88c80"/>
<rect x="390.7" y="367.9" width="1.2" height="1.2" fill="#c88c80"/>
<rect x="404.4" y="359.4" width="1.2" height="1.2" fill="#c88c80"/>
<rect x="382.0" y="376.3" width="1.2" height="1.2" fill="#d07424"/>
<rect x="379.8" y="369.4" width="1.2" height="1.2" fill="#c88c80"/>
<rect x="367.1" y="373.4" width="1.2" height="1.2" fill="#d07424"/>
<rect x="384.8" y="366.9" width="1.2" height="1.2" fill="#c88c80"/>
<rect x="425.2" y="354.4" width="1.2" height="1.2" fill="#c88c80"/>
<rect x="430.9" y="360.2" width="1.2" height="1.2" fill="#d07424"/>
<rect x="358.4" y="381.8" width="1.2" height="1.2" fill="#d07424"/>
<rect x="353.6" y="377.5" width="1.2" height="1.2" fill="#d07424"/>
<rect x="396.2" y="362.8" width="1.2" height="1.2" fill="#e0a81c"/>
<rect x="371.7" y="370.7" width="1.2" height="1.2" fill="#d07424"/>
<rect x="443.8" y="352.8" width="1.2" height="1.2" fill="#c88c80"/>
<rect x="353.9" y="376.7" width="1.2" height="1.2" fill="#d07424"/>
<rect x="441.2" y="347.8" width="1.2" height="1.2" fill="#d07424"/>
<rect x="414.8" y="355.8" width="1.2" height="1.2" fill="#e0a81c"/>
<rect x="381.2" y="369.4" width="1.2" height="1.2" fill="#d07424"/>
<rect x="402.5" y="365.1" width="1.2" height="1.2" fill="#c88c80"/>
<rect x="409.9" y="358.2" width="1.2" height="1.2" fill="#d07424"/>
<rect x="424.0" y="358.5" width="1.2" height="1.2" fill="#d07424"/>
<rect x="442.8" y="354.5" width="1.2" height="1.2" fill="#d07424"/>
<rect x="385.5" y="365.2" width="1.2" height="1.2" fill="#e0a81c"/>
<rect x="358.0" y="374.2" width="1.2" height="1.2" fill="#d07424"/>
<rect x="444.3" y="349.7" width="1.2" height="1.2" fill="#c88c80"/>
<rect x="353.8" y="376.4" width="1.2" height="1.2" fill="#c88c80"/>
<rect x="384.4" y="367.3" width="1.2" height="1.2" fill="#e0a81c"/>
<rect x="444.9" y="355.7" width="1.2" height="1.2" fill="#c88c80"/>
<rect x="416.8" y="356.0" width="1.2" height="1.2" fill="#d07424"/>
<rect x="398.5" y="363.2" width="1.2" height="1.2" fill="#d07424"/>
<rect x="372.4" y="376.9" width="1.2" height="1.2" fill="#d07424"/>
<rect x="410.5" y="357.5" width="1.2" height="1.2" fill="#c88c80"/>
<rect x="427.0" y="361.3" width="1.2" height="1.2" fill="#c88c80"/>
<rect x="414.0" y="363.0" width="1.2" height="1.2" fill="#e0a81c"/>
<rect x="364.7" y="373.2" width="1.2" height="1.2" fill="#c88c80"/>
<rect x="416.5" y="357.8" width="1.2" height="1.2" fill="#d07424"/>
<rect x="367.3" y="376.6" width="1.2" height="1.2" fill="#c88c80"/>
<rect x="392.8" y="367.9" width="1.2" height="1.2" fill="#e0a81c"/>
<rect x="369.8" y="377.5" width="1.2" height="1.2" fill="#c88c80"/>
<rect x="368.5" y="376.9" width="1.2" height="1.2" fill="#c88c80"/>
<rect x="430.2" y="359.3" width="1.2" height="1.2" fill="#c88c80"/>
<rect x="417.7" y="360.5" width="1.2" height="1.2" fill="#e0a81c"/>
<rect x="398.1" y="363.9" width="1.2" height="1.2" fill="#e0a81c"/>
<rect x="376.8" y="376.9" width="1.2" height="1.2" fill="#c88c80"/>
<rect x="389.9" y="371.7" width="1.2" height="1.2" fill="#d07424"/>
<rect x="369.1" y="376.3" width="1.2" height="1.2" fill="#e0a81c"/>
<rect x="389.2" y="368.7" width="1.2" height="1.2" fill="#d07424"/>
<rect x="418.9" y="357.4" width="1.2" height="1.2" fill="#c88c80"/>
<rect x="368.5" y="376.1" width="1.2" height="1.2" fill="#c88c80"/>
<rect x="425.2" y="352.6" width="1.2" height="1.2" fill="#d07424"/>
<rect x="366.9" y="379.5" width="1.2" height="1.2" fill="#d07424"/>
<rect x="385.1" y="365.8" width="1.2" height="1.2" fill="#c88c80"/>
<rect x="371.3" y="379.5" width="1.2" height="1.2" fill="#d07424"/>
<rect x="354.2" y="375.3" width="1.2" height="1.2" fill="#d07424"/>
<rect x="394.3" y="367.0" width="1.2" height="1.2" fill="#d07424"/>
<rect x="429.9" y="351.6" width="1.2" height="1.2" fill="#e0a81c"/>
<rect x="394.7" y="366.0" width="1.2" height="1.2" fill="#c88c80"/>
<rect x="374.2" y="370.0" width="1.2" height="1.2" fill="#c88c80"/>
<rect x="402.6" y="361.4" width="1.2" height="1.2" fill="#c88c80"/>
<rect x="362.3" y="373.0" width="1.2" height="1.2" fill="#e0a81c"/>
<rect x="392.8" y="366.4" width="1.2" height="1.2" fill="#c88c80"/>
<rect x="443.5" y="346.5" width="1.2" height="1.2" fill="#d07424"/>
<rect x="356.0" y="376.7" width="1.2" height="1.2" fill="#d07424"/>
<rect x="394.3" y="368.7" width="1.2" height="1.2" fill="#d07424"/>
<rect x="417.3" y="355.2" width="1.2" height="1.2" fill="#c88c80"/>
<rect x="377.5" y="371.6" width="1.2" height="1.2" fill="#c88c80"/>
<rect x="362.0" y="373.5" width="1.2" height="1.2" fill="#c88c80"/>
<rect x="357.1" y="380.0" width="1.2" height="1.2" fill="#e0a81c"/>
<rect x="407.2" y="359.4" width="1.2" height="1.2" fill="#d07424"/>
<rect x="398.0" y="363.1" width="1.2" height="1.2" fill="#d07424"/>
<rect x="376.5" y="370.3" width="1.2" height="1.2" fill="#c88c80"/>
<rect x="374.5" y="377.7" width="1.2" height="1.2" fill="#d07424"/>
<rect x="419.8" y="358.1" width="1.2" height="1.2" fill="#c88c80"/>
<rect x="385.0" y="369.5" width="1.2" height="1.2" fill="#c88c80"/>
<rect x="399.9" y="360.6" width="1.2" height="1.2" fill="#c88c80"/>
<rect x="362.7" y="376.4" width="1.2" height="1.2" fill="#d07424"/>
<rect x="436.7" y="357.0" width="1.2" height="1.2" fill="#e0a81c"/>
<rect x="393.4" y="364.7" width="1.2" height="1.2" fill="#d07424"/>
<rect x="363.1" y="375.3" width="1.2" height="1.2" fill="#c88c80"/>
<rect x="427.6" y="358.4" width="1.2" height="1.2" fill="#e0a81c"/>
<rect x="369.3" y="378.4" width="1.2" height="1.2" fill="#d07424"/>
<rect x="402.7" y="363.1" width="1.2" height="1.2" fill="#d07424"/>
<rect x="396.0" y="371.1" width="1.2" height="1.2" fill="#e0a81c"/>
<rect x="386.2" y="369.5" width="1.2" height="1.2" fill="#d07424"/>
<rect x="435.8" y="357.1" width="1.2" height="1.2" fill="#c88c80"/>
<rect x="386.2" y="367.2" width="1.2" height="1.2" fill="#d07424"/>
<rect x="413.9" y="361.4" width="1.2" height="1.2" fill="#d07424"/>
<rect x="414.5" y="355.9" width="1.2" height="1.2" fill="#d07424"/>
<rect x="416.5" y="361.8" width="1.2" height="1.2" fill="#d07424"/>
<rect x="373.0" y="378.3" width="1.2" height="1.2" fill="#e0a81c"/>
<rect x="409.7" y="365.1" width="1.2" height="1.2" fill="#c88c80"/>
<rect x="369.5" y="371.7" width="1.2" height="1.2" fill="#d07424"/>
<rect x="435.1" y="351.8" width="1.2" height="1.2" fill="#e0a81c"/>
<rect x="429.3" y="351.3" width="1.2" height="1.2" fill="#c88c80"/>
<rect x="444.8" y="350.1" width="1.2" height="1.2" fill="#d07424"/>
<rect x="432.1" y="352.3" width="1.2" height="1.2" fill="#c88c80"/>
<rect x="432.6" y="359.1" width="1.2" height="1.2" fill="#c88c80"/>
<rect x="413.5" y="356.2" width="1.2" height="1.2" fill="#e0a81c"/>
<rect x="408.9" y="367.4" width="1.2" height="1.2" fill="#d07424"/>
<rect x="385.4" y="366.3" width="1.2" height="1.2" fill="#d07424"/>
<rect x="432.4" y="354.5" width="1.2" height="1.2" fill="#d07424"/>
<rect x="372.5" y="370.2" width="1.2" height="1.2" fill="#c88c80"/>
<rect x="380.3" y="370.6" width="1.2" height="1.2" fill="#e0a81c"/>
<rect x="377.3" y="369.3" width="1.2" height="1.2" fill="#d07424"/>
<rect x="439.2" y="349.4" width="1.2" height="1.2" fill="#c88c80"/>
<rect x="390.6" y="363.8" width="1.2" height="1.2" fill="#c88c80"/>
<rect x="403.3" y="361.1" width="1.2" height="1.2" fill="#c88c80"/>
<rect x="426.9" y="355.7" width="1.2" height="1.2" fill="#d07424"/>
<rect x="413.0" y="363.1" width="1.2" height="1.2" fill="#e0a81c"/>
<rect x="442.2" y="347.5" width="1.2" height="1.2" fill="#d07424"/>
<rect x="354.3" y="375.9" width="1.2" height="1.2" fill="#c88c80"/>
<rect x="364.0" y="373.0" width="1.2" height="1.2" fill="#c88c80"/>
<rect x="427.5" y="358.9" width="1.2" height="1.2" fill="#d07424"/>
<rect x="403.1" y="366.4" width="1.2" height="1.2" fill="#d07424"/>
<rect x="359.2" y="377.3" width="1.2" height="1.2" fill="#c88c80"/>
<rect x="395.8" y="371.6" width="1.2" height="1.2" fill="#c88c80"/>
<rect x="382.0" y="371.3" width="1.2" height="1.2" fill="#d07424"/>
<rect x="380.4" y="369.8" width="1.2" height="1.2" fill="#d07424"/>
<rect x="438.5" y="348.3" width="1.2" height="1.2" fill="#e0a81c"/>
<rect x="403.8" y="368.2" width="1.2" height="1.2" fill="#c88c80"/>
<rect x="412.5" y="356.6" width="1.2" height="1.2" fill="#c88c80"/>
<rect x="412.3" y="358.9" width="1.2" height="1.2" fill="#d07424"/>
<rect x="443.4" y="351.2" width="1.2" height="1.2" fill="#d07424"/>
<rect x="404.5" y="360.7" width="1.2" height="1.2" fill="#e0a81c"/>
<rect x="387.4" y="364.7" width="1.2" height="1.2" fill="#c88c80"/>
<rect x="390.6" y="364.8" width="1.2" height="1.2" fill="#c88c80"/>
<rect x="358.8" y="383.1" width="1.2" height="1.2" fill="#d07424"/>
<rect x="378.7" y="372.0" width="1.2" height="1.2" fill="#d07424"/>
<rect x="388.2" y="371.9" width="1.2" height="1.2" fill="#d07424"/>
<rect x="437.8" y="355.4" width="1.2" height="1.2" fill="#d07424"/>
<rect x="367.1" y="377.5" width="1.2" height="1.2" fill="#e0a81c"/>
<rect x="427.6" y="351.8" width="1.2" height="1.2" fill="#c88c80"/>
<rect x="352.2" y="381.8" width="1.2" height="1.2" fill="#e0a81c"/>
<rect x="415.8" y="361.3" width="1.2" height="1.2" fill="#d07424"/>
<rect x="419.9" y="358.7" width="1.2" height="1.2" fill="#d07424"/>
<rect x="366.5" y="375.1" width="1.2" height="1.2" fill="#d07424"/>
<rect x="358.4" y="378.7" width="1.2" height="1.2" fill="#e0a81c"/>
<rect x="360.1" y="380.1" width="1.2" height="1.2" fill="#d07424"/>
<rect x="434.7" y="358.9" width="1.2" height="1.2" fill="#d07424"/>
<rect x="407.6" y="361.9" width="1.2" height="1.2" fill="#d07424"/>
<rect x="408.0" y="360.4" width="1.2" height="1.2" fill="#d07424"/>
<rect x="402.8" y="363.0" width="1.2" height="1.2" fill="#d07424"/>
<rect x="417.9" y="362.7" width="1.2" height="1.2" fill="#d07424"/>
<rect x="417.9" y="356.3" width="1.2" height="1.2" fill="#c88c80"/>
<rect x="380.5" y="372.2" width="1.2" height="1.2" fill="#ececee"/>
<rect x="379.2" y="377.6" width="1.2" height="1.2" fill="#d8a0a0"/>
<rect x="389.8" y="383.2" width="1.2" height="1.2" fill="#ececee"/>
<rect x="391.1" y="374.7" width="1.2" height="1.2" fill="#ececee"/>
<rect x="393.8" y="372.7" width="1.2" height="1.2" fill="#ececee"/>
<rect x="385.4" y="381.2" width="1.2" height="1.2" fill="#d8a0a0"/>
<rect x="383.3" y="374.4" width="1.2" height="1.2" fill="#d8a0a0"/>
<rect x="393.8" y="382.2" width="1.2" height="1.2" fill="#d8a0a0"/>
<rect x="396.1" y="374.5" width="1.2" height="1.2" fill="#d8a0a0"/>
<rect x="402.9" y="371.0" width="1.2" height="1.2" fill="#d8a0a0"/>
<rect x="395.8" y="374.2" width="1.2" height="1.2" fill="#ececee"/>
<rect x="385.7" y="381.8" width="1.2" height="1.2" fill="#ececee"/>
<rect x="379.5" y="383.5" width="1.2" height="1.2" fill="#ececee"/>
<rect x="382.0" y="380.8" width="1.2" height="1.2" fill="#ececee"/>
<rect x="394.5" y="377.2" width="1.2" height="1.2" fill="#ececee"/>
<rect x="404.7" y="380.7" width="1.2" height="1.2" fill="#ececee"/>
<rect x="403.1" y="380.0" width="1.2" height="1.2" fill="#d8a0a0"/>
<rect x="399.4" y="373.4" width="1.2" height="1.2" fill="#ececee"/>
<rect x="382.0" y="382.4" width="1.2" height="1.2" fill="#d8a0a0"/>
<rect x="393.6" y="380.3" width="1.2" height="1.2" fill="#d8a0a0"/>
<rect x="392.1" y="377.2" width="1.2" height="1.2" fill="#ececee"/>
<rect x="405.6" y="372.7" width="1.2" height="1.2" fill="#ececee"/>
<rect x="401.7" y="371.4" width="1.2" height="1.2" fill="#ececee"/>
<rect x="392.3" y="374.3" width="1.2" height="1.2" fill="#ececee"/>
<rect x="377.7" y="380.4" width="1.2" height="1.2" fill="#ececee"/>
<rect x="354.6" y="382.4" width="1.2" height="1.2" fill="#d07424"/>
<rect x="349.0" y="393.3" width="1.2" height="1.2" fill="#d07424"/>
<rect x="376.2" y="388.2" width="1.2" height="1.2" fill="#c88c80"/>
<rect x="347.1" y="387.1" width="1.2" height="1.2" fill="#c88c80"/>
<rect x="336.8" y="391.8" width="1.2" height="1.2" fill="#d07424"/>
<rect x="354.7" y="384.0" width="1.2" height="1.2" fill="#d07424"/>
<rect x="334.3" y="380.2" width="1.2" height="1.2" fill="#d07424"/>
<rect x="361.5" y="386.2" width="1.2" height="1.2" fill="#d07424"/>
<rect x="364.4" y="394.6" width="1.2" height="1.2" fill="#d07424"/>
<rect x="387.4" y="402.4" width="1.2" height="1.2" fill="#d07424"/>
<rect x="386.2" y="393.4" width="1.2" height="1.2" fill="#d07424"/>
<rect x="397.1" y="392.7" width="1.2" height="1.2" fill="#d07424"/>
<rect x="390.0" y="392.0" width="1.2" height="1.2" fill="#c88c80"/>
<rect x="364.5" y="391.3" width="1.2" height="1.2" fill="#c88c80"/>
<rect x="404.4" y="398.5" width="1.2" height="1.2" fill="#d07424"/>
<rect x="365.6" y="397.7" width="1.2" height="1.2" fill="#c88c80"/>
<rect x="367.7" y="396.9" width="1.2" height="1.2" fill="#d07424"/>
<rect x="375.0" y="385.1" width="1.2" height="1.2" fill="#d07424"/>
<rect x="351.9" y="403.6" width="1.2" height="1.2" fill="#d07424"/>
<rect x="349.1" y="384.9" width="1.2" height="1.2" fill="#c88c80"/>
<rect x="384.4" y="387.4" width="1.2" height="1.2" fill="#d07424"/>
<rect x="384.5" y="397.9" width="1.2" height="1.2" fill="#d07424"/>
<rect x="387.8" y="394.4" width="1.2" height="1.2" fill="#d07424"/>
<rect x="394.0" y="400.9" width="1.2" height="1.2" fill="#d07424"/>
<rect x="361.9" y="403.6" width="1.2" height="1.2" fill="#c88c80"/>
<rect x="395.7" y="400.2" width="1.2" height="1.2" fill="#d07424"/>
<rect x="400.3" y="399.7" width="1.2" height="1.2" fill="#d07424"/>
<rect x="403.1" y="399.5" width="1.2" height="1.2" fill="#c88c80"/>
<rect x="402.0" y="382.2" width="1.2" height="1.2" fill="#d07424"/>
<rect x="394.9" y="384.2" width="1.2" height="1.2" fill="#d07424"/>
<rect x="321.7" y="425.9" width="1.2" height="1.2" fill="#e4d014"/>
<rect x="310.4" y="423.5" width="1.2" height="1.2" fill="#e0a81c"/>
<rect x="316.8" y="417.2" width="1.2" height="1.2" fill="#e4d014"/>
<rect x="303.6" y="422.0" width="1.2" height="1.2" fill="#e4d014"/>
<rect x="304.7" y="424.4" width="1.2" height="1.2" fill="#e4d014"/>
<rect x="315.2" y="420.5" width="1.2" height="1.2" fill="#e4d014"/>
<rect x="298.5" y="420.7" width="1.2" height="1.2" fill="#e4d014"/>
<rect x="324.6" y="428.5" width="1.2" height="1.2" fill="#e4d014"/>
<rect x="302.8" y="426.5" width="1.2" height="1.2" fill="#e4d014"/>
<rect x="326.9" y="428.0" width="1.2" height="1.2" fill="#e4d014"/>
<rect x="299.6" y="411.9" width="1.2" height="1.2" fill="#e4d014"/>
<rect x="312.8" y="422.2" width="1.2" height="1.2" fill="#e4d014"/>
<rect x="315.8" y="412.7" width="1.2" height="1.2" fill="#e4d014"/>
<rect x="320.0" y="415.1" width="1.2" height="1.2" fill="#e4d014"/>
<rect x="317.5" y="428.7" width="1.2" height="1.2" fill="#e0a81c"/>
<rect x="324.5" y="423.8" width="1.2" height="1.2" fill="#e4d014"/>
<rect x="302.7" y="421.5" width="1.2" height="1.2" fill="#e4d014"/>
<rect x="323.1" y="411.6" width="1.2" height="1.2" fill="#e4d014"/>
<rect x="300.2" y="424.6" width="1.2" height="1.2" fill="#e4d014"/>
<rect x="312.6" y="424.9" width="1.2" height="1.2" fill="#e0a81c"/>
<rect x="321.9" y="425.1" width="1.2" height="1.2" fill="#e4d014"/>
<rect x="317.2" y="420.7" width="1.2" height="1.2" fill="#e4d014"/>
<rect x="315.9" y="419.0" width="1.2" height="1.2" fill="#e4d014"/>
<rect x="320.9" y="422.6" width="1.2" height="1.2" fill="#e0a81c"/>
<rect x="325.8" y="425.4" width="1.2" height="1.2" fill="#e4d014"/>
<rect x="313.1" y="419.9" width="1.2" height="1.2" fill="#e0a81c"/>
<rect x="325.3" y="414.5" width="1.2" height="1.2" fill="#e4d014"/>
<rect x="324.1" y="428.6" width="1.2" height="1.2" fill="#e4d014"/>
<rect x="316.0" y="417.9" width="1.2" height="1.2" fill="#e4d014"/>
<rect x="317.1" y="423.5" width="1.2" height="1.2" fill="#e0a81c"/>
<rect x="308.9" y="419.9" width="1.2" height="1.2" fill="#e4d014"/>
<rect x="327.6" y="420.3" width="1.2" height="1.2" fill="#e0a81c"/>
<rect x="327.1" y="411.5" width="1.2" height="1.2" fill="#e0a81c"/>
<rect x="301.4" y="420.0" width="1.2" height="1.2" fill="#e4d014"/>
<rect x="300.4" y="421.4" width="1.2" height="1.2" fill="#e4d014"/>
<rect x="308.4" y="420.7" width="1.2" height="1.2" fill="#e4d014"/>
<rect x="302.6" y="415.6" width="1.2" height="1.2" fill="#e0a81c"/>
<rect x="317.1" y="420.7" width="1.2" height="1.2" fill="#e0a81c"/>
<rect x="323.1" y="424.6" width="1.2" height="1.2" fill="#e4d014"/>
<rect x="314.2" y="416.8" width="1.2" height="1.2" fill="#e4d014"/>
<rect x="528.2" y="309.9" width="1.2" height="1.2" fill="#c88c80"/>
<rect x="521.7" y="313.9" width="1.2" height="1.2" fill="#ececee"/>
<rect x="446.9" y="349.4" width="1.2" height="1.2" fill="#c88c80"/>
<rect x="502.2" y="328.1" width="1.2" height="1.2" fill="#ececee"/>
<rect x="518.8" y="313.6" width="1.2" height="1.2" fill="#ececee"/>
<rect x="449.2" y="349.9" width="1.2" height="1.2" fill="#c88c80"/>
<rect x="447.2" y="349.5" width="1.2" height="1.2" fill="#ececee"/>
<rect x="532.3" y="312.0" width="1.2" height="1.2" fill="#ececee"/>
<rect x="511.5" y="314.7" width="1.2" height="1.2" fill="#c88c80"/>
<rect x="463.4" y="339.2" width="1.2" height="1.2" fill="#d8a0a0"/>
<rect x="463.7" y="339.9" width="1.2" height="1.2" fill="#c88c80"/>
<rect x="473.9" y="333.6" width="1.2" height="1.2" fill="#c88c80"/>
<rect x="453.7" y="346.7" width="1.2" height="1.2" fill="#c88c80"/>
<rect x="529.3" y="311.7" width="1.2" height="1.2" fill="#c88c80"/>
<rect x="450.7" y="351.4" width="1.2" height="1.2" fill="#c88c80"/>
<rect x="451.9" y="347.5" width="1.2" height="1.2" fill="#ececee"/>
<rect x="527.6" y="314.3" width="1.2" height="1.2" fill="#d8a0a0"/>
<rect x="451.6" y="351.7" width="1.2" height="1.2" fill="#ececee"/>
<rect x="467.2" y="344.1" width="1.2" height="1.2" fill="#c88c80"/>
<rect x="488.5" y="327.4" width="1.2" height="1.2" fill="#d8a0a0"/>
<rect x="467.6" y="340.0" width="1.2" height="1.2" fill="#c88c80"/>
<rect x="446.4" y="349.6" width="1.2" height="1.2" fill="#d8a0a0"/>
<rect x="485.3" y="331.7" width="1.2" height="1.2" fill="#d8a0a0"/>
<rect x="468.0" y="335.0" width="1.2" height="1.2" fill="#c88c80"/>
<rect x="512.6" y="322.8" width="1.2" height="1.2" fill="#d8a0a0"/>
<rect x="499.6" y="322.3" width="1.2" height="1.2" fill="#ececee"/>
<rect x="502.6" y="328.1" width="1.2" height="1.2" fill="#c88c80"/>
<rect x="497.1" y="329.3" width="1.2" height="1.2" fill="#d8a0a0"/>
<rect x="513.5" y="316.8" width="1.2" height="1.2" fill="#d8a0a0"/>
<rect x="473.6" y="336.7" width="1.2" height="1.2" fill="#c88c80"/>
<rect x="481.3" y="338.4" width="1.2" height="1.2" fill="#c88c80"/>
<rect x="461.9" y="343.1" width="1.2" height="1.2" fill="#d8a0a0"/>
<rect x="506.8" y="324.8" width="1.2" height="1.2" fill="#ececee"/>
<rect x="499.2" y="321.2" width="1.2" height="1.2" fill="#c88c80"/>
<rect x="470.3" y="331.0" width="1.2" height="1.2" fill="#c88c80"/>
<rect x="532.7" y="313.2" width="1.2" height="1.2" fill="#d8a0a0"/>
<rect x="501.1" y="318.9" width="1.2" height="1.2" fill="#c88c80"/>
<rect x="534.0" y="314.8" width="1.2" height="1.2" fill="#c88c80"/>
<rect x="526.5" y="316.9" width="1.2" height="1.2" fill="#ececee"/>
<rect x="521.4" y="317.3" width="1.2" height="1.2" fill="#c88c80"/>
<rect x="492.7" y="326.0" width="1.2" height="1.2" fill="#ececee"/>
<rect x="456.5" y="350.3" width="1.2" height="1.2" fill="#c88c80"/>
<rect x="484.6" y="333.3" width="1.2" height="1.2" fill="#c88c80"/>
<rect x="499.7" y="319.7" width="1.2" height="1.2" fill="#d8a0a0"/>
<rect x="454.5" y="350.1" width="1.2" height="1.2" fill="#ececee"/>
<rect x="515.8" y="321.7" width="1.2" height="1.2" fill="#c88c80"/>
<rect x="496.1" y="321.3" width="1.2" height="1.2" fill="#d8a0a0"/>
<rect x="515.9" y="315.0" width="1.2" height="1.2" fill="#c88c80"/>
<rect x="453.2" y="349.1" width="1.2" height="1.2" fill="#ececee"/>
<rect x="450.4" y="350.2" width="1.2" height="1.2" fill="#ececee"/>
<rect x="461.1" y="347.6" width="1.2" height="1.2" fill="#c88c80"/>
<rect x="446.5" y="349.3" width="1.2" height="1.2" fill="#d8a0a0"/>
<rect x="462.3" y="346.5" width="1.2" height="1.2" fill="#d8a0a0"/>
<rect x="452.5" y="350.6" width="1.2" height="1.2" fill="#c88c80"/>
<rect x="456.8" y="341.0" width="1.2" height="1.2" fill="#c88c80"/>
<rect x="486.5" y="330.9" width="1.2" height="1.2" fill="#d8a0a0"/>
<rect x="452.3" y="344.5" width="1.2" height="1.2" fill="#d8a0a0"/>
<rect x="483.2" y="335.4" width="1.2" height="1.2" fill="#ececee"/>
<rect x="498.5" y="329.1" width="1.2" height="1.2" fill="#c88c80"/>
<rect x="464.1" y="341.6" width="1.2" height="1.2" fill="#ececee"/>
<rect x="532.4" y="310.8" width="1.2" height="1.2" fill="#d8a0a0"/>
<rect x="471.1" y="335.6" width="1.2" height="1.2" fill="#c88c80"/>
<rect x="534.6" y="311.9" width="1.2" height="1.2" fill="#c88c80"/>
<rect x="452.8" y="350.7" width="1.2" height="1.2" fill="#c88c80"/>
<rect x="519.6" y="313.9" width="1.2" height="1.2" fill="#c88c80"/>
<rect x="448.8" y="349.4" width="1.2" height="1.2" fill="#ececee"/>
<rect x="477.5" y="332.5" width="1.2" height="1.2" fill="#d8a0a0"/>
<rect x="465.7" y="343.7" width="1.2" height="1.2" fill="#ececee"/>
<rect x="522.1" y="310.5" width="1.2" height="1.2" fill="#d8a0a0"/>
<rect x="516.0" y="322.1" width="1.2" height="1.2" fill="#d8a0a0"/>
<rect x="454.6" y="348.4" width="1.2" height="1.2" fill="#d8a0a0"/>
<rect x="488.7" y="333.6" width="1.2" height="1.2" fill="#c88c80"/>
<rect x="478.8" y="336.1" width="1.2" height="1.2" fill="#ececee"/>
<rect x="534.1" y="317.1" width="1.2" height="1.2" fill="#c88c80"/>
<rect x="483.0" y="332.8" width="1.2" height="1.2" fill="#c88c80"/>
<rect x="452.1" y="347.4" width="1.2" height="1.2" fill="#ececee"/>
<rect x="478.8" y="339.4" width="1.2" height="1.2" fill="#ececee"/>
<rect x="491.3" y="334.5" width="1.2" height="1.2" fill="#ececee"/>
<rect x="445.9" y="352.5" width="1.2" height="1.2" fill="#ececee"/>
<rect x="472.9" y="334.9" width="1.2" height="1.2" fill="#c88c80"/>
<rect x="524.4" y="316.2" width="1.2" height="1.2" fill="#d8a0a0"/>
<rect x="498.7" y="331.0" width="1.2" height="1.2" fill="#d8a0a0"/>
<rect x="494.5" y="326.9" width="1.2" height="1.2" fill="#c88c80"/>
<rect x="532.2" y="315.2" width="1.2" height="1.2" fill="#d8a0a0"/>
<rect x="453.1" y="348.9" width="1.2" height="1.2" fill="#c88c80"/>
<rect x="487.4" y="326.8" width="1.2" height="1.2" fill="#c88c80"/>
<rect x="464.9" y="337.6" width="1.2" height="1.2" fill="#c88c80"/>
<rect x="455.8" y="344.0" width="1.2" height="1.2" fill="#d8a0a0"/>
<rect x="454.1" y="350.1" width="1.2" height="1.2" fill="#c88c80"/>
<rect x="464.1" y="344.7" width="1.2" height="1.2" fill="#c88c80"/>
<rect x="478.1" y="327.8" width="1.2" height="1.2" fill="#c88c80"/>
<rect x="529.4" y="314.2" width="1.2" height="1.2" fill="#c88c80"/>
<rect x="498.1" y="320.8" width="1.2" height="1.2" fill="#c88c80"/>
<rect x="522.6" y="317.4" width="1.2" height="1.2" fill="#c88c80"/>
<rect x="522.6" y="313.4" width="1.2" height="1.2" fill="#c88c80"/>
<rect x="515.6" y="323.0" width="1.2" height="1.2" fill="#c88c80"/>
<rect x="533.4" y="310.4" width="1.2" height="1.2" fill="#c88c80"/>
<rect x="491.3" y="329.8" width="1.2" height="1.2" fill="#d8a0a0"/>
<rect x="487.1" y="334.5" width="1.2" height="1.2" fill="#c88c80"/>
<rect x="484.2" y="334.4" width="1.2" height="1.2" fill="#ececee"/>
<rect x="467.9" y="337.3" width="1.2" height="1.2" fill="#c88c80"/>
<rect x="469.1" y="338.7" width="1.2" height="1.2" fill="#ececee"/>
<rect x="466.0" y="344.5" width="1.2" height="1.2" fill="#ececee"/>
<rect x="489.0" y="328.0" width="1.2" height="1.2" fill="#c88c80"/>
<rect x="494.4" y="332.2" width="1.2" height="1.2" fill="#c88c80"/>
<rect x="467.9" y="343.6" width="1.2" height="1.2" fill="#c88c80"/>
<rect x="495.7" y="330.6" width="1.2" height="1.2" fill="#d8a0a0"/>
<rect x="471.4" y="338.8" width="1.2" height="1.2" fill="#c88c80"/>
<rect x="505.2" y="326.8" width="1.2" height="1.2" fill="#ececee"/>
<rect x="514.6" y="314.5" width="1.2" height="1.2" fill="#c88c80"/>
<rect x="505.1" y="324.9" width="1.2" height="1.2" fill="#ececee"/>
<rect x="484.6" y="325.9" width="1.2" height="1.2" fill="#c88c80"/>
<rect x="449.4" y="350.2" width="1.2" height="1.2" fill="#c88c80"/>
<rect x="448.4" y="353.1" width="1.2" height="1.2" fill="#c88c80"/>
<rect x="476.3" y="339.1" width="1.2" height="1.2" fill="#ececee"/>
<rect x="464.7" y="346.7" width="1.2" height="1.2" fill="#d8a0a0"/>
<rect x="519.1" y="316.3" width="1.2" height="1.2" fill="#d8a0a0"/>
<rect x="531.0" y="309.2" width="1.2" height="1.2" fill="#c88c80"/>
<rect x="498.2" y="332.1" width="1.2" height="1.2" fill="#d8a0a0"/>
<rect x="468.6" y="334.0" width="1.2" height="1.2" fill="#c88c80"/>
<rect x="459.9" y="342.3" width="1.2" height="1.2" fill="#ececee"/>
<rect x="461.4" y="339.7" width="1.2" height="1.2" fill="#d8a0a0"/>
<rect x="490.3" y="334.8" width="1.2" height="1.2" fill="#c88c80"/>
<rect x="513.2" y="318.6" width="1.2" height="1.2" fill="#ececee"/>
<rect x="527.7" y="311.3" width="1.2" height="1.2" fill="#c88c80"/>
<rect x="487.7" y="330.1" width="1.2" height="1.2" fill="#d8a0a0"/>
<rect x="507.2" y="317.9" width="1.2" height="1.2" fill="#d8a0a0"/>
<rect x="519.1" y="316.1" width="1.2" height="1.2" fill="#c88c80"/>
<rect x="467.7" y="340.7" width="1.2" height="1.2" fill="#c88c80"/>
<rect x="464.0" y="339.1" width="1.2" height="1.2" fill="#d8a0a0"/>
<rect x="511.8" y="320.8" width="1.2" height="1.2" fill="#c88c80"/>
<rect x="476.8" y="329.1" width="1.2" height="1.2" fill="#ececee"/>
<rect x="486.5" y="335.6" width="1.2" height="1.2" fill="#c88c80"/>
<rect x="469.8" y="333.1" width="1.2" height="1.2" fill="#c88c80"/>
<rect x="506.7" y="323.1" width="1.2" height="1.2" fill="#c88c80"/>
<rect x="456.6" y="343.7" width="1.2" height="1.2" fill="#d8a0a0"/>
<rect x="460.9" y="348.5" width="1.2" height="1.2" fill="#ececee"/>
<rect x="460.2" y="338.5" width="1.2" height="1.2" fill="#d8a0a0"/>
<rect x="448.9" y="351.3" width="1.2" height="1.2" fill="#d8a0a0"/>
<rect x="482.1" y="334.0" width="1.2" height="1.2" fill="#c88c80"/>
<rect x="512.5" y="324.2" width="1.2" height="1.2" fill="#c88c80"/>
<rect x="470.4" y="342.6" width="1.2" height="1.2" fill="#c88c80"/>
<rect x="458.0" y="347.9" width="1.2" height="1.2" fill="#ececee"/>
<rect x="533.9" y="310.1" width="1.2" height="1.2" fill="#c88c80"/>
<rect x="445.9" y="349.9" width="1.2" height="1.2" fill="#c88c80"/>
<rect x="531.4" y="316.5" width="1.2" height="1.2" fill="#c88c80"/>
<rect x="480.7" y="334.1" width="1.2" height="1.2" fill="#c88c80"/>
<rect x="450.2" y="347.4" width="1.2" height="1.2" fill="#c88c80"/>
<rect x="448.4" y="353.5" width="1.2" height="1.2" fill="#ececee"/>
<rect x="487.5" y="329.7" width="1.2" height="1.2" fill="#d8a0a0"/>
<rect x="520.1" y="315.7" width="1.2" height="1.2" fill="#ececee"/>
<rect x="531.1" y="311.5" width="1.2" height="1.2" fill="#d8a0a0"/>
<rect x="531.0" y="311.8" width="1.2" height="1.2" fill="#ececee"/>
<rect x="490.1" y="331.8" width="1.2" height="1.2" fill="#c88c80"/>
<rect x="480.6" y="335.7" width="1.2" height="1.2" fill="#c88c80"/>
<rect x="532.3" y="312.5" width="1.2" height="1.2" fill="#d8a0a0"/>
<rect x="515.1" y="316.6" width="1.2" height="1.2" fill="#d8a0a0"/>
<rect x="511.0" y="324.1" width="1.2" height="1.2" fill="#c88c80"/>
<rect x="475.5" y="336.8" width="1.2" height="1.2" fill="#c88c80"/>
<rect x="487.5" y="331.5" width="1.2" height="1.2" fill="#ececee"/>
<rect x="457.9" y="342.3" width="1.2" height="1.2" fill="#c88c80"/>
<rect x="491.6" y="325.0" width="1.2" height="1.2" fill="#ececee"/>
<rect x="463.5" y="341.1" width="1.2" height="1.2" fill="#d8a0a0"/>
<rect x="470.5" y="331.9" width="1.2" height="1.2" fill="#c88c80"/>
<rect x="508.4" y="319.8" width="1.2" height="1.2" fill="#ececee"/>
<rect x="459.0" y="342.4" width="1.2" height="1.2" fill="#c88c80"/>
<rect x="475.1" y="333.0" width="1.2" height="1.2" fill="#c88c80"/>
<rect x="490.5" y="332.6" width="1.2" height="1.2" fill="#c88c80"/>
<rect x="533.6" y="314.6" width="1.2" height="1.2" fill="#c88c80"/>
<rect x="477.9" y="331.6" width="1.2" height="1.2" fill="#c88c80"/>
<rect x="487.5" y="331.1" width="1.2" height="1.2" fill="#ececee"/>
<rect x="452.0" y="344.9" width="1.2" height="1.2" fill="#d8a0a0"/>
<rect x="477.4" y="337.9" width="1.2" height="1.2" fill="#ececee"/>
<rect x="470.2" y="333.4" width="1.2" height="1.2" fill="#d8a0a0"/>
<rect x="472.2" y="337.1" width="1.2" height="1.2" fill="#c88c80"/>
<rect x="497.5" y="325.6" width="1.2" height="1.2" fill="#c88c80"/>
<rect x="462.3" y="347.2" width="1.2" height="1.2" fill="#ececee"/>
<rect x="473.0" y="334.2" width="1.2" height="1.2" fill="#c88c80"/>
<rect x="476.1" y="333.8" width="1.2" height="1.2" fill="#ececee"/>
<rect x="446.5" y="350.9" width="1.2" height="1.2" fill="#d8a0a0"/>
<rect x="500.0" y="323.2" width="1.2" height="1.2" fill="#d8a0a0"/>
<rect x="483.6" y="327.6" width="1.2" height="1.2" fill="#ececee"/>
<rect x="463.6" y="344.1" width="1.2" height="1.2" fill="#ececee"/>
<rect x="460.3" y="346.3" width="1.2" height="1.2" fill="#ececee"/>
<rect x="476.2" y="341.1" width="1.2" height="1.2" fill="#c88c80"/>
<rect x="491.7" y="335.1" width="1.2" height="1.2" fill="#d8a0a0"/>
<rect x="523.8" y="314.4" width="1.2" height="1.2" fill="#d8a0a0"/>
<rect x="488.7" y="332.9" width="1.2" height="1.2" fill="#ececee"/>
<rect x="509.7" y="324.5" width="1.2" height="1.2" fill="#c88c80"/>
<rect x="503.8" y="327.5" width="1.2" height="1.2" fill="#ececee"/>
<rect x="461.0" y="343.7" width="1.2" height="1.2" fill="#c88c80"/>
<rect x="532.4" y="315.1" width="1.2" height="1.2" fill="#c88c80"/>
<rect x="499.2" y="323.2" width="1.2" height="1.2" fill="#d8a0a0"/>
<rect x="515.8" y="323.0" width="1.2" height="1.2" fill="#ececee"/>
<rect x="504.3" y="324.0" width="1.2" height="1.2" fill="#d8a0a0"/>
<rect x="458.6" y="340.0" width="1.2" height="1.2" fill="#d8a0a0"/>
<rect x="532.7" y="317.0" width="1.2" height="1.2" fill="#c88c80"/>
<rect x="501.3" y="320.9" width="1.2" height="1.2" fill="#c88c80"/>
<rect x="516.2" y="323.7" width="1.2" height="1.2" fill="#c88c80"/>
<rect x="515.1" y="321.5" width="1.2" height="1.2" fill="#ececee"/>
<rect x="458.3" y="343.3" width="1.2" height="1.2" fill="#d8a0a0"/>
<rect x="463.3" y="338.0" width="1.2" height="1.2" fill="#c88c80"/>
<rect x="460.3" y="341.1" width="1.2" height="1.2" fill="#c88c80"/>
<rect x="464.1" y="336.7" width="1.2" height="1.2" fill="#c88c80"/>
<rect x="475.4" y="330.7" width="1.2" height="1.2" fill="#c88c80"/>
<rect x="481.3" y="327.4" width="1.2" height="1.2" fill="#c88c80"/>
<rect x="449.0" y="351.7" width="1.2" height="1.2" fill="#c88c80"/>
<rect x="487.2" y="325.9" width="1.2" height="1.2" fill="#d8a0a0"/>
<rect x="532.6" y="315.7" width="1.2" height="1.2" fill="#c88c80"/>
<rect x="462.6" y="338.5" width="1.2" height="1.2" fill="#d8a0a0"/>
<rect x="452.5" y="350.2" width="1.2" height="1.2" fill="#ececee"/>
<rect x="520.0" y="315.9" width="1.2" height="1.2" fill="#c88c80"/>
<rect x="476.7" y="337.3" width="1.2" height="1.2" fill="#d8a0a0"/>
<rect x="508.5" y="320.9" width="1.2" height="1.2" fill="#ececee"/>
<rect x="498.9" y="322.8" width="1.2" height="1.2" fill="#c88c80"/>
<rect x="465.9" y="345.6" width="1.2" height="1.2" fill="#c88c80"/>
<rect x="481.1" y="332.3" width="1.2" height="1.2" fill="#d8a0a0"/>
<rect x="454.3" y="348.5" width="1.2" height="1.2" fill="#c88c80"/>
<rect x="470.0" y="335.4" width="1.2" height="1.2" fill="#c88c80"/>
<rect x="534.9" y="308.6" width="1.2" height="1.2" fill="#d8a0a0"/>
<rect x="506.7" y="327.9" width="1.2" height="1.2" fill="#d8a0a0"/>
<rect x="494.3" y="327.0" width="1.2" height="1.2" fill="#d8a0a0"/>
<rect x="474.7" y="331.5" width="1.2" height="1.2" fill="#c88c80"/>
<rect x="516.4" y="324.2" width="1.2" height="1.2" fill="#ececee"/>
<rect x="499.4" y="321.7" width="1.2" height="1.2" fill="#c88c80"/>
<rect x="459.6" y="347.7" width="1.2" height="1.2" fill="#ececee"/>
<rect x="478.9" y="331.8" width="1.2" height="1.2" fill="#ececee"/>
<rect x="484.3" y="326.3" width="1.2" height="1.2" fill="#d8a0a0"/>
<rect x="483.0" y="327.4" width="1.2" height="1.2" fill="#d8a0a0"/>
<rect x="463.9" y="337.9" width="1.2" height="1.2" fill="#c88c80"/>
<rect x="457.6" y="348.6" width="1.2" height="1.2" fill="#c88c80"/>
<rect x="495.1" y="334.8" width="1.2" height="1.2" fill="#c88c80"/>
<rect x="533.8" y="321.5" width="1.2" height="1.2" fill="#ececee"/>
<rect x="509.6" y="328.7" width="1.2" height="1.2" fill="#ececee"/>
<rect x="534.4" y="320.3" width="1.2" height="1.2" fill="#ececee"/>
<rect x="451.1" y="351.3" width="1.2" height="1.2" fill="#ececee"/>
<rect x="430.3" y="357.1" width="1.2" height="1.2" fill="#c88c80"/>
<rect x="432.9" y="357.2" width="1.2" height="1.2" fill="#c88c80"/>
<rect x="520.6" y="326.3" width="1.2" height="1.2" fill="#ececee"/>
<rect x="498.7" y="333.3" width="1.2" height="1.2" fill="#ececee"/>
<rect x="437.3" y="356.1" width="1.2" height="1.2" fill="#ececee"/>
<rect x="529.0" y="322.7" width="1.2" height="1.2" fill="#ececee"/>
<rect x="504.3" y="330.8" width="1.2" height="1.2" fill="#c88c80"/>
<rect x="506.7" y="330.5" width="1.2" height="1.2" fill="#ececee"/>
<rect x="478.5" y="341.6" width="1.2" height="1.2" fill="#ececee"/>
<rect x="481.4" y="339.8" width="1.2" height="1.2" fill="#ececee"/>
<rect x="511.1" y="329.2" width="1.2" height="1.2" fill="#ececee"/>
<rect x="498.7" y="332.7" width="1.2" height="1.2" fill="#c88c80"/>
<rect x="514.3" y="326.7" width="1.2" height="1.2" fill="#ececee"/>
<rect x="488.1" y="337.8" width="1.2" height="1.2" fill="#ececee"/>
<rect x="459.7" y="347.7" width="1.2" height="1.2" fill="#ececee"/>
<rect x="491.3" y="336.2" width="1.2" height="1.2" fill="#ececee"/>
<rect x="534.3" y="320.7" width="1.2" height="1.2" fill="#ececee"/>
<rect x="534.0" y="321.1" width="1.2" height="1.2" fill="#ececee"/>
<rect x="451.2" y="350.5" width="1.2" height="1.2" fill="#ececee"/>
<rect x="431.4" y="358.6" width="1.2" height="1.2" fill="#ececee"/>
<rect x="493.4" y="335.7" width="1.2" height="1.2" fill="#ececee"/>
<rect x="535.9" y="320.6" width="1.2" height="1.2" fill="#ececee"/>
<rect x="517.8" y="326.2" width="1.2" height="1.2" fill="#ececee"/>
<rect x="454.5" y="348.4" width="1.2" height="1.2" fill="#ececee"/>
<rect x="496.2" y="334.8" width="1.2" height="1.2" fill="#c88c80"/>
<rect x="482.7" y="338.5" width="1.2" height="1.2" fill="#ececee"/>
<rect x="532.1" y="322.0" width="1.2" height="1.2" fill="#c88c80"/>
<rect x="493.8" y="335.4" width="1.2" height="1.2" fill="#ececee"/>
<rect x="513.4" y="327.3" width="1.2" height="1.2" fill="#c88c80"/>
<rect x="471.1" y="344.1" width="1.2" height="1.2" fill="#c88c80"/>
<rect x="509.8" y="328.9" width="1.2" height="1.2" fill="#ececee"/>
<rect x="501.5" y="333.4" width="1.2" height="1.2" fill="#ececee"/>
<rect x="520.4" y="326.3" width="1.2" height="1.2" fill="#ececee"/>
<rect x="522.5" y="324.1" width="1.2" height="1.2" fill="#ececee"/>
<rect x="512.1" y="328.6" width="1.2" height="1.2" fill="#c88c80"/>
<rect x="515.9" y="327.1" width="1.2" height="1.2" fill="#ececee"/>
<rect x="457.0" y="348.9" width="1.2" height="1.2" fill="#c88c80"/>
<rect x="459.6" y="348.1" width="1.2" height="1.2" fill="#ececee"/>
<rect x="514.8" y="328.2" width="1.2" height="1.2" fill="#ececee"/>
<rect x="526.2" y="323.3" width="1.2" height="1.2" fill="#ececee"/>
<rect x="435.3" y="355.2" width="1.2" height="1.2" fill="#ececee"/>
<rect x="461.7" y="346.5" width="1.2" height="1.2" fill="#ececee"/>
<rect x="522.5" y="324.4" width="1.2" height="1.2" fill="#ececee"/>
<rect x="532.5" y="320.8" width="1.2" height="1.2" fill="#ececee"/>
<rect x="535.0" y="320.7" width="1.2" height="1.2" fill="#ececee"/>
<rect x="443.3" y="353.1" width="1.2" height="1.2" fill="#ececee"/>
<rect x="484.4" y="339.0" width="1.2" height="1.2" fill="#ececee"/>
<rect x="494.0" y="334.8" width="1.2" height="1.2" fill="#ececee"/>
<rect x="443.3" y="353.8" width="1.2" height="1.2" fill="#ececee"/>
<rect x="537.4" y="320.3" width="1.2" height="1.2" fill="#ececee"/>
<rect x="530.1" y="323.3" width="1.2" height="1.2" fill="#ececee"/>
<rect x="470.8" y="344.2" width="1.2" height="1.2" fill="#ececee"/>
<rect x="504.4" y="331.2" width="1.2" height="1.2" fill="#ececee"/>
<rect x="510.6" y="330.2" width="1.2" height="1.2" fill="#c88c80"/>
<rect x="519.9" y="325.8" width="1.2" height="1.2" fill="#ececee"/>
<rect x="479.1" y="340.3" width="1.2" height="1.2" fill="#ececee"/>
<rect x="514.3" y="327.3" width="1.2" height="1.2" fill="#ececee"/>
<rect x="526.7" y="323.6" width="1.2" height="1.2" fill="#ececee"/>
<rect x="518.2" y="326.3" width="1.2" height="1.2" fill="#ececee"/>
<rect x="495.4" y="334.9" width="1.2" height="1.2" fill="#ececee"/>
<rect x="480.3" y="340.3" width="1.2" height="1.2" fill="#ececee"/>
<rect x="471.6" y="343.0" width="1.2" height="1.2" fill="#ececee"/>
<rect x="488.2" y="337.7" width="1.2" height="1.2" fill="#ececee"/>
<rect x="437.9" y="355.0" width="1.2" height="1.2" fill="#ececee"/>
<rect x="497.7" y="334.2" width="1.2" height="1.2" fill="#ececee"/>
<rect x="505.9" y="330.8" width="1.2" height="1.2" fill="#ececee"/>
<rect x="536.3" y="320.7" width="1.2" height="1.2" fill="#c88c80"/>
<rect x="535.6" y="320.6" width="1.2" height="1.2" fill="#c88c80"/>
<rect x="485.0" y="338.7" width="1.2" height="1.2" fill="#ececee"/>
<rect x="431.5" y="358.4" width="1.2" height="1.2" fill="#c88c80"/>
<rect x="522.6" y="325.4" width="1.2" height="1.2" fill="#c88c80"/>
<rect x="435.3" y="356.1" width="1.2" height="1.2" fill="#ececee"/>
<rect x="508.3" y="330.5" width="1.2" height="1.2" fill="#ececee"/>
<rect x="532.4" y="321.1" width="1.2" height="1.2" fill="#ececee"/>
<rect x="461.0" y="346.7" width="1.2" height="1.2" fill="#ececee"/>
<rect x="502.1" y="331.2" width="1.2" height="1.2" fill="#ececee"/>
<rect x="495.7" y="335.1" width="1.2" height="1.2" fill="#ececee"/>
<rect x="469.2" y="344.2" width="1.2" height="1.2" fill="#ececee"/>
<rect x="489.9" y="337.3" width="1.2" height="1.2" fill="#ececee"/>
<rect x="485.3" y="338.7" width="1.2" height="1.2" fill="#c88c80"/>
<rect x="512.8" y="328.4" width="1.2" height="1.2" fill="#ececee"/>
<rect x="438.2" y="355.5" width="1.2" height="1.2" fill="#ececee"/>
<rect x="481.1" y="339.9" width="1.2" height="1.2" fill="#ececee"/>
<rect x="479.4" y="341.1" width="1.2" height="1.2" fill="#ececee"/>
<rect x="493.3" y="336.1" width="1.2" height="1.2" fill="#ececee"/>
<rect x="429.8" y="358.8" width="1.2" height="1.2" fill="#ececee"/>
<rect x="517.2" y="326.1" width="1.2" height="1.2" fill="#ececee"/>
<rect x="477.5" y="341.0" width="1.2" height="1.2" fill="#ececee"/>
<rect x="459.6" y="346.5" width="1.2" height="1.2" fill="#ececee"/>
<rect x="514.7" y="327.8" width="1.2" height="1.2" fill="#ececee"/>
<rect x="430.4" y="357.3" width="1.2" height="1.2" fill="#ececee"/>
<rect x="530.7" y="322.2" width="1.2" height="1.2" fill="#ececee"/>
<rect x="478.1" y="341.1" width="1.2" height="1.2" fill="#ececee"/>
<rect x="536.9" y="319.3" width="1.2" height="1.2" fill="#ececee"/>
<rect x="485.2" y="338.9" width="1.2" height="1.2" fill="#ececee"/>
<rect x="499.7" y="332.6" width="1.2" height="1.2" fill="#ececee"/>
<rect x="492.4" y="334.8" width="1.2" height="1.2" fill="#c88c80"/>
<rect x="480.6" y="339.6" width="1.2" height="1.2" fill="#ececee"/>
<rect x="443.3" y="353.4" width="1.2" height="1.2" fill="#ececee"/>
<rect x="517.3" y="326.6" width="1.2" height="1.2" fill="#ececee"/>
<rect x="431.5" y="356.4" width="1.2" height="1.2" fill="#ececee"/>
<rect x="510.5" y="329.5" width="1.2" height="1.2" fill="#c88c80"/>
<rect x="453.4" y="348.2" width="1.2" height="1.2" fill="#ececee"/>
<rect x="480.5" y="340.0" width="1.2" height="1.2" fill="#ececee"/>
<rect x="615.8" y="273.0" width="1.2" height="1.2" fill="#d8a0a0"/>
<rect x="578.5" y="285.6" width="1.2" height="1.2" fill="#d07424"/>
<rect x="534.4" y="304.4" width="1.2" height="1.2" fill="#c88c80"/>
<rect x="567.0" y="294.4" width="1.2" height="1.2" fill="#c88c80"/>
<rect x="563.4" y="291.1" width="1.2" height="1.2" fill="#d07424"/>
<rect x="550.3" y="297.6" width="1.2" height="1.2" fill="#c88c80"/>
<rect x="577.3" y="289.9" width="1.2" height="1.2" fill="#c88c80"/>
<rect x="594.0" y="281.7" width="1.2" height="1.2" fill="#d8a0a0"/>
<rect x="592.7" y="285.1" width="1.2" height="1.2" fill="#c88c80"/>
<rect x="543.6" y="298.3" width="1.2" height="1.2" fill="#d8a0a0"/>
<rect x="533.9" y="302.3" width="1.2" height="1.2" fill="#d8a0a0"/>
<rect x="527.6" y="306.8" width="1.2" height="1.2" fill="#c88c80"/>
<rect x="547.2" y="301.2" width="1.2" height="1.2" fill="#d8a0a0"/>
<rect x="546.0" y="297.0" width="1.2" height="1.2" fill="#c88c80"/>
<rect x="528.9" y="307.6" width="1.2" height="1.2" fill="#c88c80"/>
<rect x="558.6" y="291.9" width="1.2" height="1.2" fill="#c88c80"/>
<rect x="588.4" y="281.2" width="1.2" height="1.2" fill="#c88c80"/>
<rect x="582.6" y="287.9" width="1.2" height="1.2" fill="#d8a0a0"/>
<rect x="626.3" y="268.3" width="1.2" height="1.2" fill="#c88c80"/>
<rect x="597.7" y="279.7" width="1.2" height="1.2" fill="#c88c80"/>
<rect x="550.1" y="295.6" width="1.2" height="1.2" fill="#d07424"/>
<rect x="597.4" y="283.3" width="1.2" height="1.2" fill="#d8a0a0"/>
<rect x="552.5" y="295.0" width="1.2" height="1.2" fill="#d07424"/>
<rect x="532.8" y="305.6" width="1.2" height="1.2" fill="#c88c80"/>
<rect x="564.9" y="290.3" width="1.2" height="1.2" fill="#c88c80"/>
<rect x="543.3" y="302.6" width="1.2" height="1.2" fill="#d07424"/>
<rect x="633.1" y="265.4" width="1.2" height="1.2" fill="#c88c80"/>
<rect x="581.1" y="284.6" width="1.2" height="1.2" fill="#d8a0a0"/>
<rect x="583.3" y="285.8" width="1.2" height="1.2" fill="#d8a0a0"/>
<rect x="600.6" y="281.6" width="1.2" height="1.2" fill="#d07424"/>
<rect x="556.5" y="293.6" width="1.2" height="1.2" fill="#c88c80"/>
<rect x="551.9" y="299.2" width="1.2" height="1.2" fill="#d07424"/>
<rect x="567.5" y="290.7" width="1.2" height="1.2" fill="#c88c80"/>
<rect x="606.5" y="276.7" width="1.2" height="1.2" fill="#d8a0a0"/>
<rect x="563.0" y="295.0" width="1.2" height="1.2" fill="#d8a0a0"/>
<rect x="569.2" y="293.4" width="1.2" height="1.2" fill="#d8a0a0"/>
<rect x="547.4" y="298.9" width="1.2" height="1.2" fill="#d8a0a0"/>
<rect x="547.9" y="300.5" width="1.2" height="1.2" fill="#c88c80"/>
<rect x="620.1" y="270.6" width="1.2" height="1.2" fill="#d8a0a0"/>
<rect x="627.0" y="267.8" width="1.2" height="1.2" fill="#d07424"/>
<rect x="595.5" y="281.6" width="1.2" height="1.2" fill="#c88c80"/>
<rect x="631.7" y="266.0" width="1.2" height="1.2" fill="#c88c80"/>
<rect x="547.5" y="299.9" width="1.2" height="1.2" fill="#c88c80"/>
<rect x="537.8" y="304.4" width="1.2" height="1.2" fill="#d07424"/>
<rect x="536.7" y="303.7" width="1.2" height="1.2" fill="#c88c80"/>
<rect x="618.3" y="271.5" width="1.2" height="1.2" fill="#c88c80"/>
<rect x="607.7" y="278.6" width="1.2" height="1.2" fill="#d07424"/>
<rect x="533.7" y="303.4" width="1.2" height="1.2" fill="#d07424"/>
<rect x="617.0" y="271.6" width="1.2" height="1.2" fill="#c88c80"/>
<rect x="530.4" y="303.5" width="1.2" height="1.2" fill="#c88c80"/>
<rect x="552.4" y="295.1" width="1.2" height="1.2" fill="#d07424"/>
<rect x="608.3" y="273.8" width="1.2" height="1.2" fill="#c88c80"/>
<rect x="599.2" y="276.5" width="1.2" height="1.2" fill="#d8a0a0"/>
<rect x="612.4" y="272.9" width="1.2" height="1.2" fill="#d07424"/>
<rect x="528.9" y="307.2" width="1.2" height="1.2" fill="#d07424"/>
<rect x="594.2" y="282.2" width="1.2" height="1.2" fill="#c88c80"/>
<rect x="574.8" y="288.3" width="1.2" height="1.2" fill="#c88c80"/>
<rect x="612.4" y="272.1" width="1.2" height="1.2" fill="#d07424"/>
<rect x="580.2" y="286.1" width="1.2" height="1.2" fill="#c88c80"/>
<rect x="567.9" y="294.0" width="1.2" height="1.2" fill="#d07424"/>
<rect x="632.4" y="264.5" width="1.2" height="1.2" fill="#d8a0a0"/>
<rect x="532.5" y="302.8" width="1.2" height="1.2" fill="#c88c80"/>
<rect x="631.0" y="265.4" width="1.2" height="1.2" fill="#c88c80"/>
<rect x="616.5" y="272.6" width="1.2" height="1.2" fill="#d8a0a0"/>
<rect x="641.9" y="262.7" width="1.2" height="1.2" fill="#d07424"/>
<rect x="559.7" y="294.4" width="1.2" height="1.2" fill="#d8a0a0"/>
<rect x="639.6" y="263.8" width="1.2" height="1.2" fill="#d8a0a0"/>
<rect x="594.4" y="283.0" width="1.2" height="1.2" fill="#d8a0a0"/>
<rect x="617.6" y="270.6" width="1.2" height="1.2" fill="#d07424"/>
<rect x="569.6" y="293.4" width="1.2" height="1.2" fill="#c88c80"/>
<rect x="619.2" y="270.5" width="1.2" height="1.2" fill="#c88c80"/>
<rect x="626.4" y="270.4" width="1.2" height="1.2" fill="#c88c80"/>
<rect x="592.7" y="279.9" width="1.2" height="1.2" fill="#d8a0a0"/>
<rect x="545.8" y="297.0" width="1.2" height="1.2" fill="#d8a0a0"/>
<rect x="583.8" y="285.1" width="1.2" height="1.2" fill="#d07424"/>
<rect x="632.6" y="266.5" width="1.2" height="1.2" fill="#d8a0a0"/>
<rect x="567.6" y="291.1" width="1.2" height="1.2" fill="#c88c80"/>
<rect x="531.2" y="301.9" width="1.2" height="1.2" fill="#c88c80"/>
<rect x="563.7" y="294.7" width="1.2" height="1.2" fill="#d8a0a0"/>
<rect x="601.6" y="279.4" width="1.2" height="1.2" fill="#d07424"/>
<rect x="591.0" y="283.9" width="1.2" height="1.2" fill="#d07424"/>
<rect x="576.8" y="285.2" width="1.2" height="1.2" fill="#c88c80"/>
<rect x="572.8" y="287.6" width="1.2" height="1.2" fill="#c88c80"/>
<rect x="617.4" y="270.9" width="1.2" height="1.2" fill="#d07424"/>
<rect x="591.2" y="285.7" width="1.2" height="1.2" fill="#d07424"/>
<rect x="617.9" y="272.6" width="1.2" height="1.2" fill="#c88c80"/>
<rect x="521.6" y="307.4" width="1.2" height="1.2" fill="#d07424"/>
<rect x="635.6" y="266.0" width="1.2" height="1.2" fill="#c88c80"/>
<rect x="592.5" y="284.1" width="1.2" height="1.2" fill="#d07424"/>
<rect x="640.1" y="262.5" width="1.2" height="1.2" fill="#c88c80"/>
<rect x="521.4" y="305.9" width="1.2" height="1.2" fill="#d8a0a0"/>
<rect x="543.9" y="299.9" width="1.2" height="1.2" fill="#d8a0a0"/>
<rect x="609.1" y="275.4" width="1.2" height="1.2" fill="#c88c80"/>
<rect x="621.8" y="269.1" width="1.2" height="1.2" fill="#c88c80"/>
<rect x="590.3" y="284.3" width="1.2" height="1.2" fill="#c88c80"/>
<rect x="523.9" y="305.8" width="1.2" height="1.2" fill="#c88c80"/>
<rect x="625.7" y="269.3" width="1.2" height="1.2" fill="#d07424"/>
<rect x="589.1" y="282.1" width="1.2" height="1.2" fill="#d8a0a0"/>
<rect x="604.7" y="280.0" width="1.2" height="1.2" fill="#c88c80"/>
<rect x="536.0" y="304.3" width="1.2" height="1.2" fill="#d07424"/>
<rect x="624.0" y="270.6" width="1.2" height="1.2" fill="#d8a0a0"/>
<rect x="589.8" y="284.2" width="1.2" height="1.2" fill="#d07424"/>
<rect x="554.1" y="293.9" width="1.2" height="1.2" fill="#d07424"/>
<rect x="585.0" y="282.0" width="1.2" height="1.2" fill="#c88c80"/>
<rect x="539.1" y="299.9" width="1.2" height="1.2" fill="#d8a0a0"/>
<rect x="640.4" y="263.0" width="1.2" height="1.2" fill="#c88c80"/>
<rect x="541.8" y="300.2" width="1.2" height="1.2" fill="#d8a0a0"/>
<rect x="528.8" y="304.7" width="1.2" height="1.2" fill="#d07424"/>
<rect x="547.2" y="296.6" width="1.2" height="1.2" fill="#d8a0a0"/>
<rect x="561.3" y="296.5" width="1.2" height="1.2" fill="#c88c80"/>
<rect x="606.4" y="276.0" width="1.2" height="1.2" fill="#d8a0a0"/>
<rect x="527.3" y="308.4" width="1.2" height="1.2" fill="#d07424"/>
<rect x="610.2" y="274.2" width="1.2" height="1.2" fill="#d07424"/>
<rect x="585.7" y="282.2" width="1.2" height="1.2" fill="#d8a0a0"/>
<rect x="546.2" y="296.5" width="1.2" height="1.2" fill="#c88c80"/>
<rect x="591.4" y="283.6" width="1.2" height="1.2" fill="#c88c80"/>
<rect x="526.2" y="308.4" width="1.2" height="1.2" fill="#d8a0a0"/>
<rect x="611.1" y="272.1" width="1.2" height="1.2" fill="#c88c80"/>
<rect x="545.0" y="301.6" width="1.2" height="1.2" fill="#d07424"/>
<rect x="568.4" y="289.1" width="1.2" height="1.2" fill="#d8a0a0"/>
<rect x="534.8" y="303.0" width="1.2" height="1.2" fill="#d8a0a0"/>
<rect x="564.1" y="290.8" width="1.2" height="1.2" fill="#c88c80"/>
<rect x="543.2" y="301.4" width="1.2" height="1.2" fill="#d8a0a0"/>
<rect x="548.7" y="295.5" width="1.2" height="1.2" fill="#c88c80"/>
<rect x="521.4" y="309.8" width="1.2" height="1.2" fill="#d8a0a0"/>
<rect x="592.3" y="282.4" width="1.2" height="1.2" fill="#c88c80"/>
<rect x="564.1" y="292.7" width="1.2" height="1.2" fill="#c88c80"/>
<rect x="623.4" y="268.9" width="1.2" height="1.2" fill="#d07424"/>
<rect x="574.2" y="286.0" width="1.2" height="1.2" fill="#c88c80"/>
<rect x="582.2" y="288.3" width="1.2" height="1.2" fill="#c88c80"/>
<rect x="640.4" y="263.3" width="1.2" height="1.2" fill="#d8a0a0"/>
<rect x="627.6" y="267.4" width="1.2" height="1.2" fill="#d07424"/>
<rect x="605.1" y="278.9" width="1.2" height="1.2" fill="#c88c80"/>
<rect x="620.1" y="271.8" width="1.2" height="1.2" fill="#d8a0a0"/>
<rect x="520.2" y="310.1" width="1.2" height="1.2" fill="#d8a0a0"/>
<rect x="548.5" y="300.1" width="1.2" height="1.2" fill="#d07424"/>
<rect x="623.6" y="271.0" width="1.2" height="1.2" fill="#d8a0a0"/>
<rect x="531.6" y="302.7" width="1.2" height="1.2" fill="#c88c80"/>
<rect x="549.1" y="297.3" width="1.2" height="1.2" fill="#d8a0a0"/>
<rect x="631.2" y="265.4" width="1.2" height="1.2" fill="#d07424"/>
<rect x="615.0" y="273.6" width="1.2" height="1.2" fill="#d07424"/>
<rect x="637.2" y="263.2" width="1.2" height="1.2" fill="#d07424"/>
<rect x="628.0" y="269.1" width="1.2" height="1.2" fill="#d07424"/>
<rect x="590.3" y="286.0" width="1.2" height="1.2" fill="#d8a0a0"/>
<rect x="630.8" y="267.8" width="1.2" height="1.2" fill="#d8a0a0"/>
<rect x="568.7" y="292.2" width="1.2" height="1.2" fill="#d8a0a0"/>
<rect x="620.1" y="271.6" width="1.2" height="1.2" fill="#d8a0a0"/>
<rect x="612.4" y="276.7" width="1.2" height="1.2" fill="#d8a0a0"/>
<rect x="626.5" y="267.2" width="1.2" height="1.2" fill="#c88c80"/>
<rect x="580.3" y="283.4" width="1.2" height="1.2" fill="#d07424"/>
<rect x="626.4" y="270.4" width="1.2" height="1.2" fill="#c88c80"/>
<rect x="583.1" y="283.1" width="1.2" height="1.2" fill="#c88c80"/>
<rect x="633.8" y="264.9" width="1.2" height="1.2" fill="#c88c80"/>
<rect x="619.6" y="271.1" width="1.2" height="1.2" fill="#c88c80"/>
<rect x="607.1" y="274.6" width="1.2" height="1.2" fill="#c88c80"/>
<rect x="548.2" y="295.8" width="1.2" height="1.2" fill="#d07424"/>
<rect x="621.5" y="271.7" width="1.2" height="1.2" fill="#c88c80"/>
<rect x="533.9" y="303.5" width="1.2" height="1.2" fill="#c88c80"/>
<rect x="596.8" y="283.1" width="1.2" height="1.2" fill="#c88c80"/>
<rect x="559.9" y="296.0" width="1.2" height="1.2" fill="#d8a0a0"/>
<rect x="604.6" y="276.5" width="1.2" height="1.2" fill="#d8a0a0"/>
<rect x="527.8" y="308.2" width="1.2" height="1.2" fill="#d8a0a0"/>
<rect x="527.5" y="304.1" width="1.2" height="1.2" fill="#d8a0a0"/>
<rect x="634.0" y="264.1" width="1.2" height="1.2" fill="#c88c80"/>
<rect x="624.6" y="269.9" width="1.2" height="1.2" fill="#d8a0a0"/>
<rect x="627.1" y="267.0" width="1.2" height="1.2" fill="#d07424"/>
<rect x="628.9" y="266.6" width="1.2" height="1.2" fill="#d8a0a0"/>
<rect x="636.7" y="263.9" width="1.2" height="1.2" fill="#d8a0a0"/>
<rect x="545.7" y="299.3" width="1.2" height="1.2" fill="#d07424"/>
<rect x="596.5" y="278.3" width="1.2" height="1.2" fill="#c88c80"/>
<rect x="523.0" y="309.9" width="1.2" height="1.2" fill="#c88c80"/>
<rect x="561.2" y="291.9" width="1.2" height="1.2" fill="#d8a0a0"/>
<rect x="579.9" y="287.2" width="1.2" height="1.2" fill="#d07424"/>
<rect x="564.6" y="292.1" width="1.2" height="1.2" fill="#d8a0a0"/>
<rect x="544.9" y="296.9" width="1.2" height="1.2" fill="#c88c80"/>
<rect x="546.5" y="296.3" width="1.2" height="1.2" fill="#d07424"/>
<rect x="578.6" y="286.8" width="1.2" height="1.2" fill="#d07424"/>
<rect x="605.9" y="274.2" width="1.2" height="1.2" fill="#c88c80"/>
<rect x="580.4" y="284.9" width="1.2" height="1.2" fill="#d8a0a0"/>
<rect x="561.3" y="293.3" width="1.2" height="1.2" fill="#d8a0a0"/>
<rect x="583.4" y="283.8" width="1.2" height="1.2" fill="#c88c80"/>
<rect x="640.9" y="263.2" width="1.2" height="1.2" fill="#c88c80"/>
<rect x="528.9" y="307.5" width="1.2" height="1.2" fill="#c88c80"/>
<rect x="529.9" y="304.5" width="1.2" height="1.2" fill="#d8a0a0"/>
<rect x="565.4" y="293.9" width="1.2" height="1.2" fill="#d8a0a0"/>
<rect x="602.0" y="281.2" width="1.2" height="1.2" fill="#c88c80"/>
<rect x="530.4" y="305.7" width="1.2" height="1.2" fill="#d07424"/>
<rect x="618.6" y="273.6" width="1.2" height="1.2" fill="#c88c80"/>
<rect x="606.0" y="274.2" width="1.2" height="1.2" fill="#c88c80"/>
<rect x="600.5" y="282.2" width="1.2" height="1.2" fill="#d07424"/>
<rect x="544.0" y="301.3" width="1.2" height="1.2" fill="#c88c80"/>
<rect x="574.9" y="291.6" width="1.2" height="1.2" fill="#d07424"/>
<rect x="626.2" y="267.1" width="1.2" height="1.2" fill="#d07424"/>
<rect x="600.3" y="276.3" width="1.2" height="1.2" fill="#d8a0a0"/>
<rect x="557.6" y="296.6" width="1.2" height="1.2" fill="#c88c80"/>
<rect x="551.2" y="298.9" width="1.2" height="1.2" fill="#d8a0a0"/>
<rect x="616.5" y="270.6" width="1.2" height="1.2" fill="#c88c80"/>
<rect x="528.2" y="305.3" width="1.2" height="1.2" fill="#d07424"/>
<rect x="584.6" y="287.5" width="1.2" height="1.2" fill="#d8a0a0"/>
<rect x="616.8" y="270.3" width="1.2" height="1.2" fill="#c88c80"/>
<rect x="570.8" y="291.5" width="1.2" height="1.2" fill="#d8a0a0"/>
<rect x="520.9" y="310.0" width="1.2" height="1.2" fill="#c88c80"/>
<rect x="524.0" y="307.7" width="1.2" height="1.2" fill="#c88c80"/>
<rect x="637.2" y="264.8" width="1.2" height="1.2" fill="#c88c80"/>
<rect x="615.1" y="275.2" width="1.2" height="1.2" fill="#c88c80"/>
<rect x="558.8" y="295.4" width="1.2" height="1.2" fill="#d8a0a0"/>
<rect x="606.9" y="277.4" width="1.2" height="1.2" fill="#d07424"/>
<rect x="608.9" y="276.4" width="1.2" height="1.2" fill="#d8a0a0"/>
<rect x="576.0" y="285.2" width="1.2" height="1.2" fill="#d07424"/>
<rect x="592.2" y="280.0" width="1.2" height="1.2" fill="#c88c80"/>
<rect x="570.0" y="288.2" width="1.2" height="1.2" fill="#d07424"/>
<rect x="574.8" y="291.3" width="1.2" height="1.2" fill="#d8a0a0"/>
<rect x="532.4" y="303.4" width="1.2" height="1.2" fill="#d8a0a0"/>
<rect x="520.0" y="309.5" width="1.2" height="1.2" fill="#d8a0a0"/>
<rect x="550.6" y="294.6" width="1.2" height="1.2" fill="#c88c80"/>
<rect x="560.0" y="295.0" width="1.2" height="1.2" fill="#d07424"/>
<rect x="540.3" y="302.4" width="1.2" height="1.2" fill="#d07424"/>
<rect x="592.6" y="281.3" width="1.2" height="1.2" fill="#c88c80"/>
<rect x="569.9" y="289.4" width="1.2" height="1.2" fill="#d8a0a0"/>
<rect x="631.7" y="266.5" width="1.2" height="1.2" fill="#c88c80"/>
<rect x="628.2" y="271.4" width="1.2" height="1.2" fill="#ececee"/>
<rect x="619.8" y="275.1" width="1.2" height="1.2" fill="#ececee"/>
<rect x="606.9" y="282.1" width="1.2" height="1.2" fill="#ececee"/>
<rect x="578.4" y="292.3" width="1.2" height="1.2" fill="#ececee"/>
<rect x="598.9" y="286.3" width="1.2" height="1.2" fill="#ececee"/>
<rect x="591.5" y="290.0" width="1.2" height="1.2" fill="#ececee"/>
<rect x="630.2" y="269.9" width="1.2" height="1.2" fill="#ececee"/>
<rect x="617.6" y="275.6" width="1.2" height="1.2" fill="#ececee"/>
<rect x="608.1" y="282.0" width="1.2" height="1.2" fill="#ececee"/>
<rect x="629.5" y="269.8" width="1.2" height="1.2" fill="#ececee"/>
<rect x="597.6" y="289.0" width="1.2" height="1.2" fill="#ececee"/>
<rect x="581.5" y="292.9" width="1.2" height="1.2" fill="#ececee"/>
<rect x="552.1" y="301.9" width="1.2" height="1.2" fill="#ececee"/>
<rect x="579.5" y="292.6" width="1.2" height="1.2" fill="#ececee"/>
<rect x="641.3" y="264.6" width="1.2" height="1.2" fill="#ececee"/>
<rect x="571.4" y="296.6" width="1.2" height="1.2" fill="#ececee"/>
<rect x="606.2" y="282.0" width="1.2" height="1.2" fill="#d8a0a0"/>
<rect x="615.5" y="278.0" width="1.2" height="1.2" fill="#ececee"/>
<rect x="629.5" y="269.6" width="1.2" height="1.2" fill="#ececee"/>
<rect x="595.1" y="287.6" width="1.2" height="1.2" fill="#ececee"/>
<rect x="595.9" y="286.5" width="1.2" height="1.2" fill="#ececee"/>
<rect x="597.3" y="287.0" width="1.2" height="1.2" fill="#ececee"/>
<rect x="573.6" y="294.3" width="1.2" height="1.2" fill="#ececee"/>
<rect x="559.3" y="300.8" width="1.2" height="1.2" fill="#ececee"/>
<rect x="636.4" y="265.8" width="1.2" height="1.2" fill="#ececee"/>
<rect x="637.5" y="266.2" width="1.2" height="1.2" fill="#ececee"/>
<rect x="609.4" y="281.1" width="1.2" height="1.2" fill="#ececee"/>
<rect x="596.9" y="287.3" width="1.2" height="1.2" fill="#ececee"/>
<rect x="610.0" y="280.6" width="1.2" height="1.2" fill="#ececee"/>
<rect x="566.2" y="298.1" width="1.2" height="1.2" fill="#ececee"/>
<rect x="572.0" y="296.0" width="1.2" height="1.2" fill="#ececee"/>
<rect x="609.0" y="281.5" width="1.2" height="1.2" fill="#ececee"/>
<rect x="611.4" y="279.2" width="1.2" height="1.2" fill="#ececee"/>
<rect x="602.4" y="285.0" width="1.2" height="1.2" fill="#ececee"/>
<rect x="548.2" y="304.2" width="1.2" height="1.2" fill="#d8a0a0"/>
<rect x="614.0" y="279.1" width="1.2" height="1.2" fill="#ececee"/>
<rect x="589.6" y="289.5" width="1.2" height="1.2" fill="#ececee"/>
<rect x="566.4" y="296.7" width="1.2" height="1.2" fill="#ececee"/>
<rect x="580.5" y="292.8" width="1.2" height="1.2" fill="#ececee"/>
<rect x="560.3" y="299.1" width="1.2" height="1.2" fill="#ececee"/>
<rect x="552.5" y="303.7" width="1.2" height="1.2" fill="#ececee"/>
<rect x="633.8" y="267.4" width="1.2" height="1.2" fill="#ececee"/>
<rect x="630.4" y="270.0" width="1.2" height="1.2" fill="#ececee"/>
<rect x="582.7" y="292.1" width="1.2" height="1.2" fill="#d8a0a0"/>
<rect x="595.3" y="287.6" width="1.2" height="1.2" fill="#ececee"/>
<rect x="581.1" y="293.3" width="1.2" height="1.2" fill="#ececee"/>
<rect x="610.9" y="282.1" width="1.2" height="1.2" fill="#d8a0a0"/>
<rect x="545.9" y="305.0" width="1.2" height="1.2" fill="#ececee"/>
<rect x="632.2" y="268.5" width="1.2" height="1.2" fill="#ececee"/>
<rect x="638.8" y="265.7" width="1.2" height="1.2" fill="#d8a0a0"/>
<rect x="545.8" y="304.9" width="1.2" height="1.2" fill="#d8a0a0"/>
<rect x="553.8" y="302.1" width="1.2" height="1.2" fill="#ececee"/>
<rect x="595.0" y="287.5" width="1.2" height="1.2" fill="#d8a0a0"/>
<rect x="613.6" y="278.9" width="1.2" height="1.2" fill="#ececee"/>
<rect x="619.2" y="275.9" width="1.2" height="1.2" fill="#ececee"/>
<rect x="599.2" y="285.4" width="1.2" height="1.2" fill="#ececee"/>
<rect x="585.0" y="290.3" width="1.2" height="1.2" fill="#ececee"/>
<rect x="605.3" y="283.4" width="1.2" height="1.2" fill="#ececee"/>
<rect x="598.5" y="285.8" width="1.2" height="1.2" fill="#ececee"/>
<rect x="638.6" y="264.8" width="1.2" height="1.2" fill="#d8a0a0"/>
<rect x="581.0" y="293.5" width="1.2" height="1.2" fill="#ececee"/>
<rect x="635.5" y="266.5" width="1.2" height="1.2" fill="#ececee"/>
<rect x="614.1" y="279.4" width="1.2" height="1.2" fill="#ececee"/>
<rect x="612.5" y="279.8" width="1.2" height="1.2" fill="#ececee"/>
<rect x="584.7" y="291.4" width="1.2" height="1.2" fill="#ececee"/>
<rect x="639.5" y="263.7" width="1.2" height="1.2" fill="#ececee"/>
<rect x="590.8" y="287.9" width="1.2" height="1.2" fill="#ececee"/>
<rect x="581.0" y="292.5" width="1.2" height="1.2" fill="#ececee"/>
<rect x="610.5" y="280.8" width="1.2" height="1.2" fill="#ececee"/>
<rect x="580.7" y="293.2" width="1.2" height="1.2" fill="#ececee"/>
<rect x="554.7" y="303.1" width="1.2" height="1.2" fill="#ececee"/>
<rect x="611.3" y="281.0" width="1.2" height="1.2" fill="#ececee"/>
<rect x="557.3" y="301.5" width="1.2" height="1.2" fill="#ececee"/>
<rect x="600.0" y="286.0" width="1.2" height="1.2" fill="#ececee"/>
<rect x="598.7" y="286.5" width="1.2" height="1.2" fill="#ececee"/>
<rect x="586.4" y="289.9" width="1.2" height="1.2" fill="#ececee"/>
<rect x="589.9" y="289.8" width="1.2" height="1.2" fill="#d8a0a0"/>
<rect x="634.5" y="267.4" width="1.2" height="1.2" fill="#ececee"/>
<rect x="595.3" y="287.3" width="1.2" height="1.2" fill="#d8a0a0"/>
<rect x="592.6" y="288.5" width="1.2" height="1.2" fill="#ececee"/>
<rect x="608.4" y="280.5" width="1.2" height="1.2" fill="#ececee"/>
<rect x="554.1" y="301.8" width="1.2" height="1.2" fill="#d8a0a0"/>
<rect x="591.5" y="288.4" width="1.2" height="1.2" fill="#d8a0a0"/>
<rect x="570.1" y="296.6" width="1.2" height="1.2" fill="#ececee"/>
<rect x="576.5" y="294.2" width="1.2" height="1.2" fill="#ececee"/>
<rect x="600.2" y="285.3" width="1.2" height="1.2" fill="#ececee"/>
<rect x="611.5" y="280.2" width="1.2" height="1.2" fill="#ececee"/>
<rect x="563.4" y="299.0" width="1.2" height="1.2" fill="#ececee"/>
<rect x="587.6" y="288.5" width="1.2" height="1.2" fill="#ececee"/>
<rect x="611.9" y="279.2" width="1.2" height="1.2" fill="#ececee"/>
<rect x="628.7" y="270.2" width="1.2" height="1.2" fill="#ececee"/>
<rect x="618.4" y="276.5" width="1.2" height="1.2" fill="#ececee"/>
<rect x="547.7" y="304.4" width="1.2" height="1.2" fill="#ececee"/>
<rect x="632.5" y="268.1" width="1.2" height="1.2" fill="#ececee"/>
<rect x="587.4" y="290.7" width="1.2" height="1.2" fill="#ececee"/>
<rect x="641.2" y="264.3" width="1.2" height="1.2" fill="#ececee"/>
<rect x="608.7" y="282.0" width="1.2" height="1.2" fill="#d8a0a0"/>
<rect x="553.5" y="302.6" width="1.2" height="1.2" fill="#ececee"/>
<rect x="594.4" y="288.1" width="1.2" height="1.2" fill="#ececee"/>
<rect x="580.1" y="293.3" width="1.2" height="1.2" fill="#ececee"/>
<rect x="564.7" y="298.7" width="1.2" height="1.2" fill="#d8a0a0"/>
<rect x="589.4" y="290.9" width="1.2" height="1.2" fill="#ececee"/>
<rect x="569.5" y="297.6" width="1.2" height="1.2" fill="#ececee"/>
<rect x="601.9" y="284.1" width="1.2" height="1.2" fill="#d8a0a0"/>
<rect x="622.6" y="272.8" width="1.2" height="1.2" fill="#ececee"/>
<rect x="629.2" y="269.9" width="1.2" height="1.2" fill="#ececee"/>
<rect x="637.0" y="266.0" width="1.2" height="1.2" fill="#d8a0a0"/>
<rect x="587.9" y="289.8" width="1.2" height="1.2" fill="#ececee"/>
<rect x="578.7" y="293.4" width="1.2" height="1.2" fill="#ececee"/>
<rect x="606.5" y="284.0" width="1.2" height="1.2" fill="#d8a0a0"/>
<rect x="560.9" y="300.5" width="1.2" height="1.2" fill="#ececee"/>
<rect x="628.9" y="269.8" width="1.2" height="1.2" fill="#ececee"/>
<rect x="600.9" y="285.6" width="1.2" height="1.2" fill="#ececee"/>
<rect x="629.9" y="268.7" width="1.2" height="1.2" fill="#d8a0a0"/>
<rect x="550.9" y="304.0" width="1.2" height="1.2" fill="#ececee"/>
<rect x="555.2" y="301.1" width="1.2" height="1.2" fill="#ececee"/>
<rect x="565.6" y="297.7" width="1.2" height="1.2" fill="#ececee"/>
<rect x="565.4" y="298.5" width="1.2" height="1.2" fill="#ececee"/>
<rect x="613.1" y="277.4" width="1.2" height="1.2" fill="#ececee"/>
<rect x="625.4" y="271.8" width="1.2" height="1.2" fill="#ececee"/>
<rect x="569.9" y="297.1" width="1.2" height="1.2" fill="#ececee"/>
<rect x="617.5" y="276.2" width="1.2" height="1.2" fill="#ececee"/>
<rect x="612.3" y="279.2" width="1.2" height="1.2" fill="#ececee"/>
<rect x="603.9" y="284.7" width="1.2" height="1.2" fill="#ececee"/>
<rect x="619.6" y="276.8" width="1.2" height="1.2" fill="#ececee"/>
<rect x="606.7" y="282.1" width="1.2" height="1.2" fill="#ececee"/>
<rect x="576.5" y="294.2" width="1.2" height="1.2" fill="#ececee"/>
<rect x="642.3" y="263.2" width="1.2" height="1.2" fill="#ececee"/>
<rect x="640.5" y="264.1" width="1.2" height="1.2" fill="#ececee"/>
<rect x="608.4" y="281.0" width="1.2" height="1.2" fill="#ececee"/>
<rect x="633.3" y="267.8" width="1.2" height="1.2" fill="#d8a0a0"/>
<rect x="635.0" y="266.0" width="1.2" height="1.2" fill="#ececee"/>
<rect x="608.7" y="280.1" width="1.2" height="1.2" fill="#ececee"/>
<rect x="631.0" y="268.3" width="1.2" height="1.2" fill="#d8a0a0"/>
<rect x="587.9" y="291.6" width="1.2" height="1.2" fill="#ececee"/>
<rect x="624.0" y="272.6" width="1.2" height="1.2" fill="#ececee"/>
<rect x="577.5" y="293.6" width="1.2" height="1.2" fill="#d8a0a0"/>
<rect x="576.0" y="294.5" width="1.2" height="1.2" fill="#ececee"/>
<rect x="621.4" y="273.4" width="1.2" height="1.2" fill="#ececee"/>
<rect x="570.9" y="295.9" width="1.2" height="1.2" fill="#ececee"/>
<rect x="556.6" y="301.5" width="1.2" height="1.2" fill="#ececee"/>
<rect x="559.8" y="300.3" width="1.2" height="1.2" fill="#ececee"/>
<rect x="568.1" y="297.7" width="1.2" height="1.2" fill="#ececee"/>
<rect x="561.1" y="299.2" width="1.2" height="1.2" fill="#ececee"/>
<rect x="568.6" y="296.5" width="1.2" height="1.2" fill="#ececee"/>
<rect x="573.2" y="297.5" width="1.2" height="1.2" fill="#ececee"/>
<rect x="546.1" y="304.7" width="1.2" height="1.2" fill="#ececee"/>
<rect x="568.7" y="297.7" width="1.2" height="1.2" fill="#ececee"/>
<rect x="576.7" y="293.6" width="1.2" height="1.2" fill="#d8a0a0"/>
<rect x="615.1" y="277.6" width="1.2" height="1.2" fill="#ececee"/>
<rect x="524.8" y="327.0" width="1.2" height="1.2" fill="#ececee"/>
<rect x="528.9" y="324.2" width="1.2" height="1.2" fill="#ececee"/>
<rect x="506.1" y="327.0" width="1.2" height="1.2" fill="#ececee"/>
<rect x="538.8" y="318.6" width="1.2" height="1.2" fill="#ececee"/>
<rect x="522.9" y="315.7" width="1.2" height="1.2" fill="#ececee"/>
<rect x="537.5" y="325.4" width="1.2" height="1.2" fill="#ececee"/>
<rect x="527.9" y="321.6" width="1.2" height="1.2" fill="#ececee"/>
<rect x="532.5" y="320.7" width="1.2" height="1.2" fill="#ececee"/>
<rect x="533.9" y="325.2" width="1.2" height="1.2" fill="#ececee"/>
<rect x="520.2" y="313.4" width="1.2" height="1.2" fill="#ececee"/>
<rect x="504.0" y="324.9" width="1.2" height="1.2" fill="#ececee"/>
<rect x="523.8" y="324.2" width="1.2" height="1.2" fill="#ececee"/>
<rect x="536.6" y="311.6" width="1.2" height="1.2" fill="#ececee"/>
<rect x="520.5" y="320.4" width="1.2" height="1.2" fill="#ececee"/>
<rect x="593.5" y="283.3" width="1.2" height="1.2" fill="#ececee"/>
<rect x="579.0" y="297.9" width="1.2" height="1.2" fill="#ececee"/>
<rect x="587.0" y="298.2" width="1.2" height="1.2" fill="#ececee"/>
<rect x="583.6" y="281.7" width="1.2" height="1.2" fill="#ececee"/>
<rect x="624.1" y="297.0" width="1.2" height="1.2" fill="#ececee"/>
<rect x="632.7" y="280.1" width="1.2" height="1.2" fill="#ececee"/>
<rect x="603.2" y="292.4" width="1.2" height="1.2" fill="#ececee"/>
<rect x="584.8" y="286.4" width="1.2" height="1.2" fill="#ececee"/>
<rect x="602.6" y="290.1" width="1.2" height="1.2" fill="#ececee"/>
<rect x="617.9" y="299.2" width="1.2" height="1.2" fill="#ececee"/>
<rect x="590.7" y="285.9" width="1.2" height="1.2" fill="#ececee"/>
<rect x="618.3" y="286.4" width="1.2" height="1.2" fill="#ececee"/>
<rect x="578.8" y="285.6" width="1.2" height="1.2" fill="#ececee"/>
<rect x="582.4" y="283.2" width="1.2" height="1.2" fill="#ececee"/>
<rect x="571.5" y="294.4" width="1.2" height="1.2" fill="#ececee"/>
<rect x="580.2" y="297.8" width="1.2" height="1.2" fill="#ececee"/>
<rect x="606.0" y="301.2" width="1.2" height="1.2" fill="#ececee"/>
<rect x="578.0" y="288.0" width="1.2" height="1.2" fill="#ececee"/>
<rect x="467.0" y="359.7" width="1.4" height="1.4" fill="#34b844"/>
</svg></div>

<div id="rphdr" class="a"></div>
<div class="t" style="left:913.3px;top:81.6px;color:#646a73;font-size:7.3px">对象属性</div>
<svg class="a" style="left:1060px;top:81.5px" width="20" height="10" viewBox="0 0 20 10">
 <path d="M3.3 2.8h3v3.6h-3zM2.6 6.4h4.4M4.8 6.4v1.6" fill="none" stroke="#7a8089" stroke-width="0.6"/>
 <path d="M11.5 2.2l5 5M16.5 2.2l-5 5" stroke="#5f656e" stroke-width="0.8"/>
</svg>
<div id="rptb" class="a"></div>
<svg class="a" style="left:908px;top:88px" width="60" height="20" viewBox="908 88 60 20">
 <defs><linearGradient id="og" x1="0" y1="0" x2="0" y2="1"><stop offset="0" stop-color="#ffc46a"/><stop offset="0.5" stop-color="#ffd27e"/><stop offset="1" stop-color="#ffe6a0"/></linearGradient>
 <linearGradient id="bg2" x1="0" y1="0" x2="0" y2="1"><stop offset="0" stop-color="#4e86e0"/><stop offset="1" stop-color="#8ab4ee"/></linearGradient>
 <linearGradient id="lt" x1="0" y1="0" x2="0" y2="1"><stop offset="0" stop-color="#ffe040"/><stop offset="1" stop-color="#f07a10"/></linearGradient></defs>
 <rect x="912.7" y="93" width="11.4" height="11.1" rx="0.8" fill="url(#og)" stroke="#f0b860" stroke-width="0.4"/>
 <rect x="913.8" y="94.2" width="3.6" height="3" fill="#e8f2ff" stroke="#4a90e0" stroke-width="0.6"/><path d="M914.5 95.7h2.2" stroke="#111" stroke-width="0.9"/>
 <rect x="913.8" y="99.8" width="3.6" height="3" fill="#e8f2ff" stroke="#4a90e0" stroke-width="0.6"/><path d="M914.5 101.3h2.2" stroke="#111" stroke-width="0.9"/>
 <path d="M919.6 94.5v8.8M922.4 94.5v8.8" stroke="#c8b890" stroke-width="0.9"/>
 <text x="926.8" y="98.2" font-size="5" font-weight="bold" fill="#3a70c8" font-family="Liberation Sans">A</text>
 <text x="926.8" y="103.3" font-size="5" font-weight="bold" fill="#b83030" font-family="Liberation Sans">Z</text>
 <path d="M934 94.2v7.4" stroke="#555" stroke-width="0.9"/><rect x="933.2" y="100.6" width="1.7" height="1.9" fill="#111"/>
 <rect x="940" y="95" width="6.9" height="7.7" fill="url(#bg2)"/><rect x="941" y="96.8" width="2.2" height="5" fill="#f2f6fc"/><rect x="943.6" y="96.8" width="2.6" height="5" fill="#b8d0f2"/>
 <path d="M957.5 94.7L953.3 99.6H955.6L952.8 103.2L958.3 98.4H956L958.2 94.7Z" fill="url(#lt)"/>
</svg>
<div id="rpgrid" class="a"></div>
<div class="a" style="left:995px;top:105.8px;width:1px;height:383px;background:#f0f0f3"></div>
<!-- watermark -->
<svg class="a" style="left:880px;top:410px;z-index:10" width="60" height="50" viewBox="880 410 60 50">
 <defs><filter id="sh" x="-20%" y="-20%" width="140%" height="140%"><feDropShadow dx="0.4" dy="0.6" stdDeviation="0.6" flood-color="#000" flood-opacity="0.45"/></filter></defs>
 <g filter="url(#sh)">
 <path d="M904.5 420C896.5 420 890 425.6 890 432.5C890 436.5 892.2 440 895.6 442.3L894.6 447.2L899.8 444.2C901.3 444.7 902.9 445 904.5 445C912.5 445 919 439.4 919 432.5C919 425.6 912.5 420 904.5 420Z" fill="#fff" fill-opacity="0.87"/>
 </g>
 <circle cx="898.7" cy="428.7" r="1.6" fill="#111"/><circle cx="910.6" cy="428.7" r="1.6" fill="#222"/>
 <g filter="url(#sh)">
 <path d="M918.8 431C911.6 431 905.8 435.8 905.8 441.7C905.8 447.6 911.6 452.4 918.8 452.4C920.3 452.4 921.7 452.2 923 451.8L928.6 455L927.5 450C930.2 448 931.8 445 931.8 441.7C931.8 435.8 926 431 918.8 431Z" fill="#fff"/>
 </g>
 <circle cx="914.2" cy="438.3" r="1.3" fill="#fff" stroke="#999" stroke-width="0.5"/><circle cx="923.6" cy="438.3" r="1.3" fill="#fff" stroke="#999" stroke-width="0.5"/>
</svg>
<div class="a" style="left:937px;top:421px;z-index:10;font-size:26px;line-height:36px;font-weight:300;color:#fff;letter-spacing:0.5px;white-space:nowrap;will-change:transform;text-shadow:0.9px 0.9px 0.5px rgba(0,0,0,0.55)">长光禹辰</div>
</body></html>
